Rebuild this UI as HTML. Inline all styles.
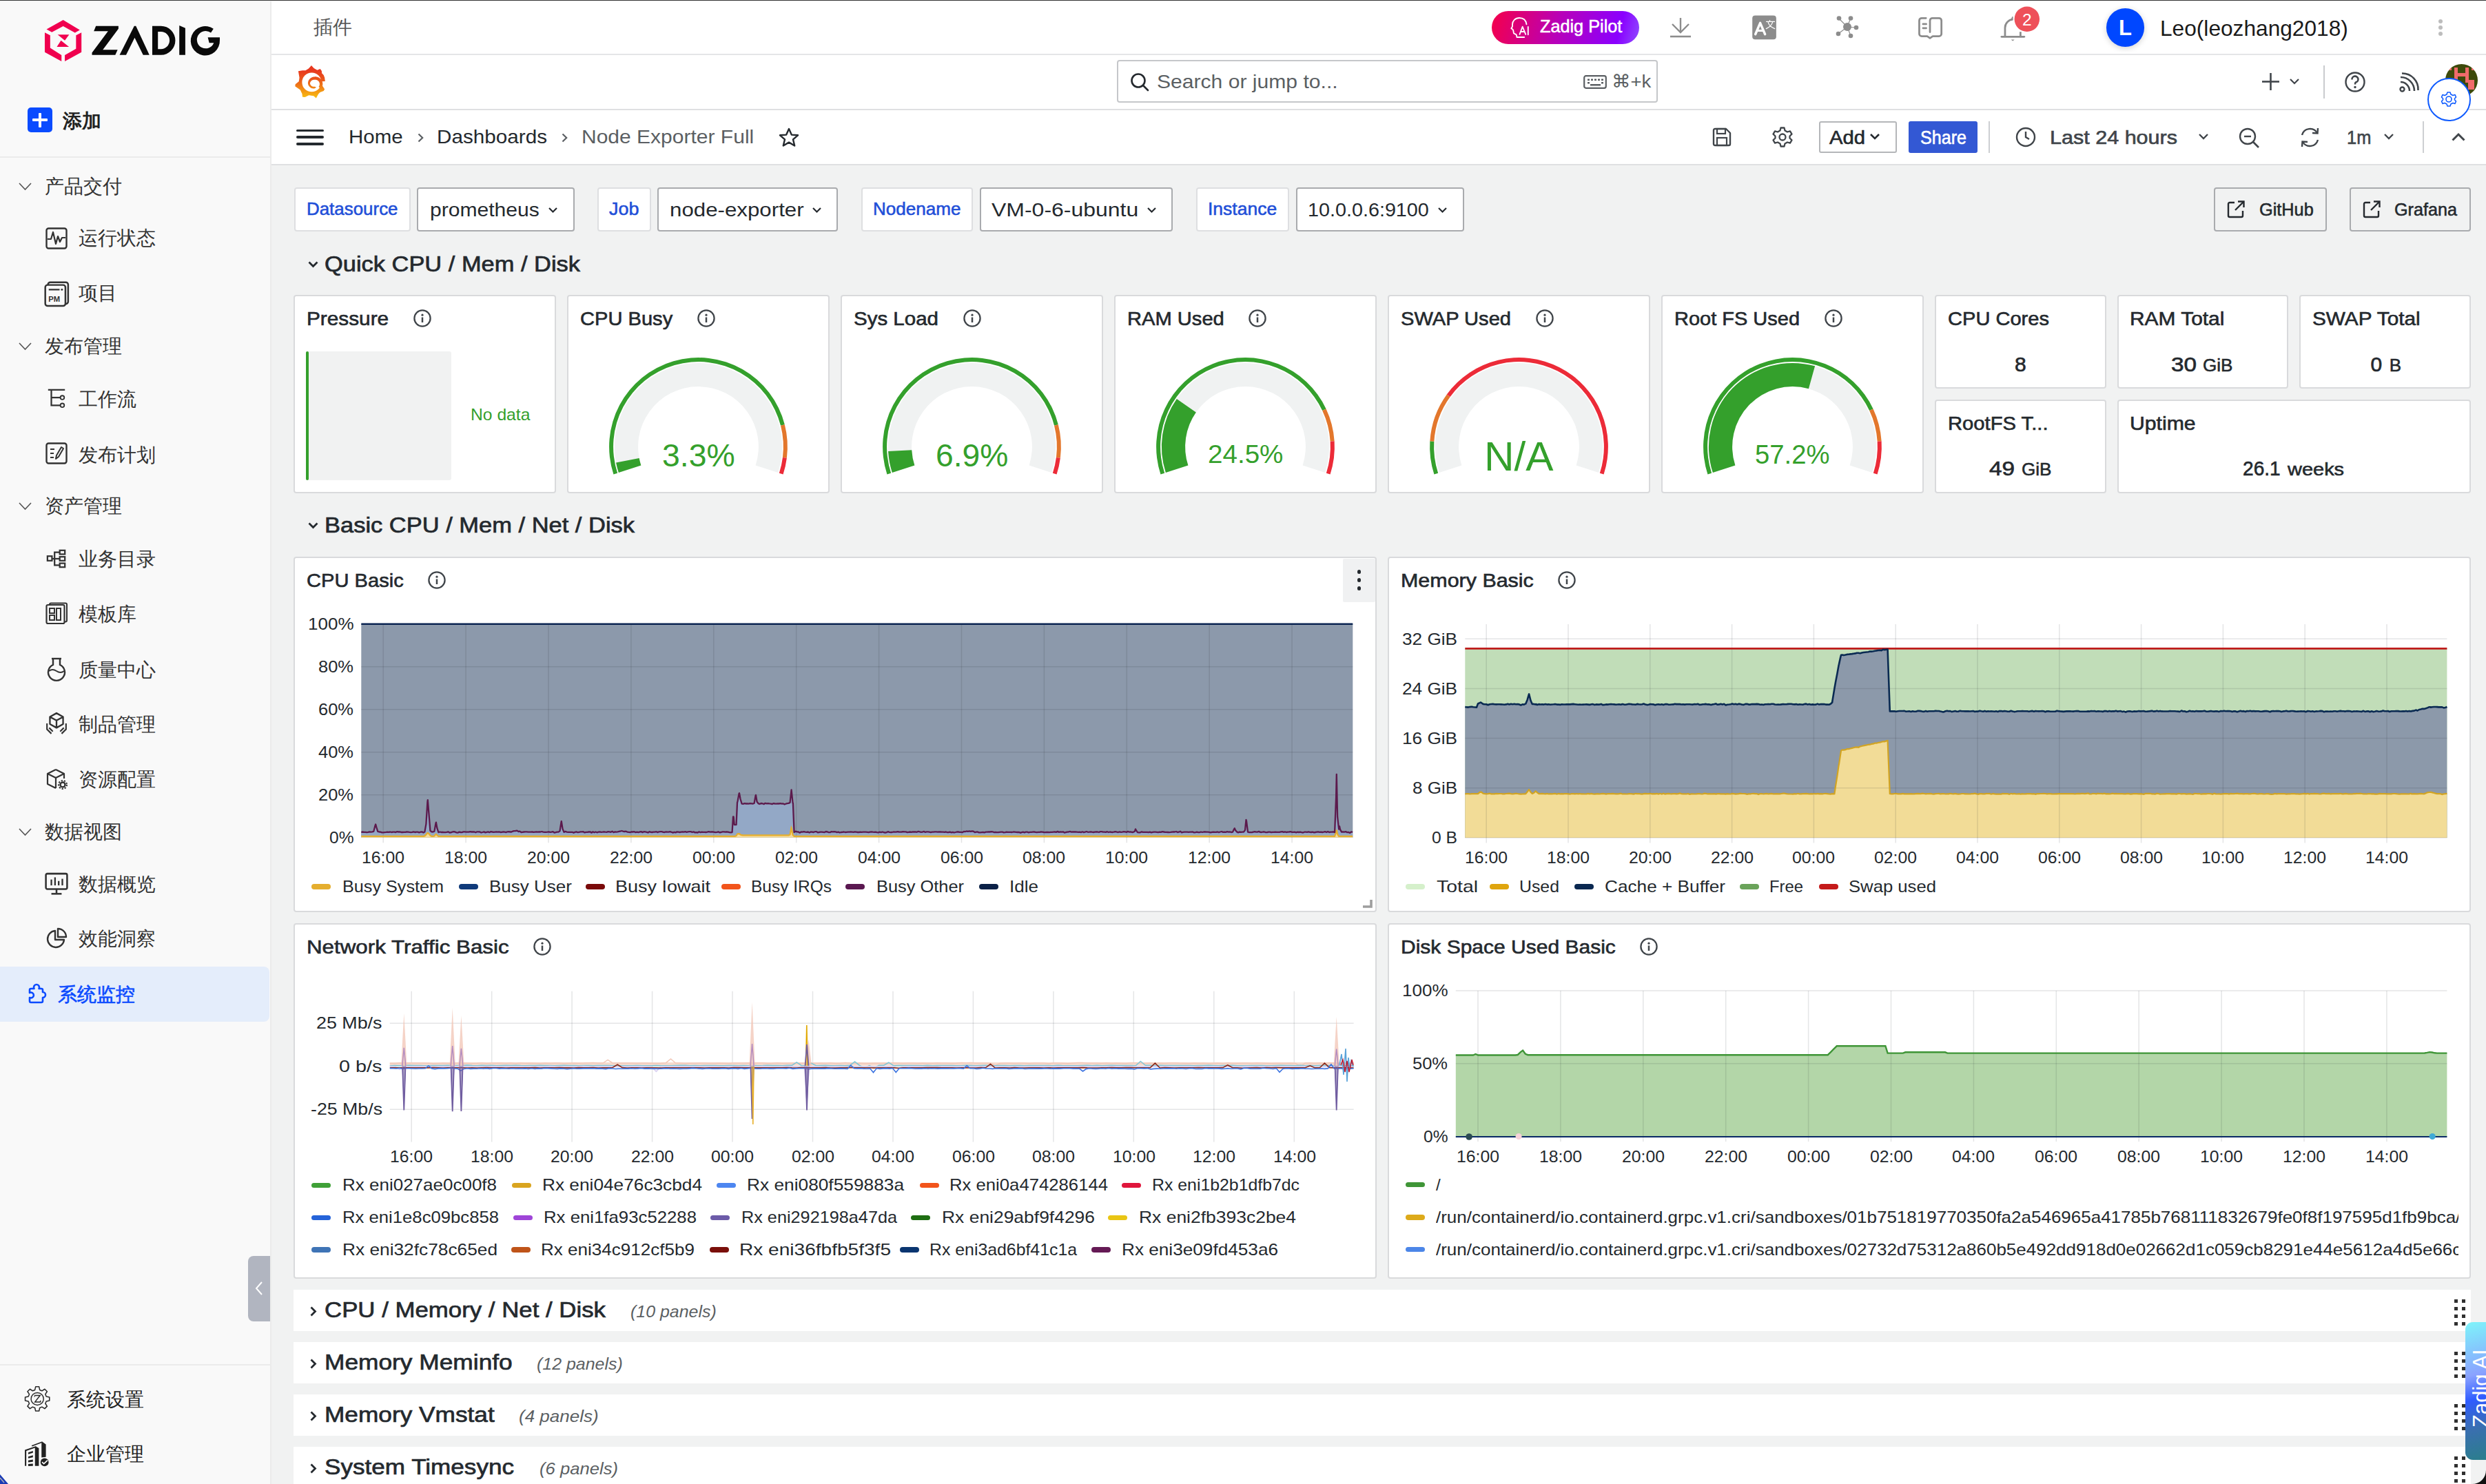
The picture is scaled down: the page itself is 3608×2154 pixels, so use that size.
<!DOCTYPE html><html><head><meta charset="utf-8"><style>
*{margin:0;padding:0;box-sizing:border-box}
html,body{width:3608px;height:2154px;overflow:hidden;background:#F1F2F2;font-family:"Liberation Sans",sans-serif;color:#24292E}
.a{position:absolute}
.t{position:absolute;white-space:nowrap;line-height:1}
svg{overflow:visible}
</style></head><body><div class="a" style="left:0.0px;top:0.0px;width:3608.0px;height:1.0px;background:#3A3A3A;"></div>
<div class="a" style="left:0.0px;top:1.5px;width:392.0px;height:2152.5px;background:#F9F9F9;"></div>
<div class="a" style="left:392.0px;top:1.5px;width:2.0px;height:2152.5px;background:#EBEBEB;"></div>
<div class="a" style="left:394.0px;top:1.5px;width:3214.0px;height:76.5px;background:#FFFFFF;"></div>
<div class="a" style="left:394.0px;top:78.0px;width:3214.0px;height:2.0px;background:#E4E5E7;"></div>
<div class="a" style="left:394.0px;top:80.0px;width:3214.0px;height:78.0px;background:#FFFFFF;"></div>
<div class="a" style="left:394.0px;top:158.0px;width:3214.0px;height:2.0px;background:#DFE0E2;"></div>
<div class="a" style="left:394.0px;top:160.0px;width:3214.0px;height:78.0px;background:#FFFFFF;"></div>
<div class="a" style="left:394.0px;top:238.0px;width:3214.0px;height:2.0px;background:#DFE0E2;"></div>
<svg class="a" style="left:40.0px;top:20.0px;" width="300.0" height="80.0" viewBox="0 0 2486 663">
<g fill="#F0004F">
<polygon points="228,187 428,75 628,195 570,228 428,150 292,222"/>
<polygon points="207,225 272,258 272,410 408,497 408,572 207,462"/>
<polygon points="648,225 583,258 583,420 448,497 448,572 648,462"/>
<polygon points="362,250 500,250 448,322"/>
<polygon points="402,322 498,397 352,397"/>
</g>
<g fill="#0A0A0A">
<polygon points="822,147 1093,147 1093,180 905,432 1083,432 1055,495 775,495 775,468 968,210 797,210"/>
<polygon points="1107,495 1283,147 1303,147 1465,495 1390,495 1288,288 1185,495"/>
<path fill-rule="evenodd" d="M1500,147 H1605 A172,174 0 0 1 1605,495 H1500 Z M1568,215 V425 H1605 A103,105 0 0 0 1605,215 Z"/>
<polygon points="1825,140 1897,172 1897,495 1825,495"/>
<path d="M2236,180 A175,176 0 1 0 2312,318 V283 H2168 L2185,350 H2240 A105,105 0 1 1 2205,228 Z"/>
</g>
</svg>
<div class="a" style="left:39.8px;top:156.2px;width:35.8px;height:35.6px;background:#0A4BFF;border-radius:5px"></div>
<div class="a" style="left:55.7px;top:163.5px;width:4.0px;height:21.0px;background:#FFFFFF;border-radius:1px"></div>
<div class="a" style="left:47.0px;top:172.0px;width:21.5px;height:4.0px;background:#FFFFFF;border-radius:1px"></div>
<div class="t" style="left:90.7px;top:161.8px;font-size:28px;color:#222222;font-weight:bold;">添加</div>
<div class="a" style="left:0.0px;top:227.0px;width:392.0px;height:2.0px;background:#EBEBEB;"></div>
<svg class="a" style="left:27.5px;top:265.5px;" width="17.0" height="9.0" viewBox="0 0 17 9"><polyline points="0,0 8.5,9 17,0" fill="none" stroke="#555" stroke-width="1.6"/></svg>
<div class="t" style="left:65.0px;top:256.8px;font-size:28px;color:#333333;">产品交付</div>
<svg class="a" style="left:27.5px;top:497.7px;" width="17.0" height="9.0" viewBox="0 0 17 9"><polyline points="0,0 8.5,9 17,0" fill="none" stroke="#555" stroke-width="1.6"/></svg>
<div class="t" style="left:65.0px;top:489.0px;font-size:28px;color:#333333;">发布管理</div>
<svg class="a" style="left:27.5px;top:730.0px;" width="17.0" height="9.0" viewBox="0 0 17 9"><polyline points="0,0 8.5,9 17,0" fill="none" stroke="#555" stroke-width="1.6"/></svg>
<div class="t" style="left:65.0px;top:721.3px;font-size:28px;color:#333333;">资产管理</div>
<svg class="a" style="left:27.5px;top:1203.0px;" width="17.0" height="9.0" viewBox="0 0 17 9"><polyline points="0,0 8.5,9 17,0" fill="none" stroke="#555" stroke-width="1.6"/></svg>
<div class="t" style="left:65.0px;top:1194.3px;font-size:28px;color:#333333;">数据视图</div>
<div class="t" style="left:113.8px;top:332.2px;font-size:28px;color:#333333;">运行状态</div>
<div class="t" style="left:113.8px;top:412.3px;font-size:28px;color:#333333;">项目</div>
<div class="t" style="left:113.8px;top:566.3px;font-size:28px;color:#333333;">工作流</div>
<div class="t" style="left:113.8px;top:646.5px;font-size:28px;color:#333333;">发布计划</div>
<div class="t" style="left:113.8px;top:798.1px;font-size:28px;color:#333333;">业务目录</div>
<div class="t" style="left:113.8px;top:877.6px;font-size:28px;color:#333333;">模板库</div>
<div class="t" style="left:113.8px;top:958.5px;font-size:28px;color:#333333;">质量中心</div>
<div class="t" style="left:113.8px;top:1038.0px;font-size:28px;color:#333333;">制品管理</div>
<div class="t" style="left:113.8px;top:1118.2px;font-size:28px;color:#333333;">资源配置</div>
<div class="t" style="left:113.8px;top:1269.8px;font-size:28px;color:#333333;">数据概览</div>
<div class="t" style="left:113.8px;top:1349.3px;font-size:28px;color:#333333;">效能洞察</div>
<svg class="a" style="left:66.0px;top:330.2px;" width="32.0" height="32.0" viewBox="0 0 32 32"><rect x="1.5" y="1.5" width="29" height="29" rx="3" fill="none" stroke="#333333" stroke-width="2.4"/><polyline points="3,17 8,17 11,7 15,24 18,13 21,21 24,15 29,15" fill="none" stroke="#333333" stroke-width="2.2" stroke-linejoin="round"/></svg>
<svg class="a" style="left:64.0px;top:408.2px;" width="36.0" height="36.0" viewBox="0 0 32 32"><rect x="5" y="1.5" width="26" height="28" rx="3" fill="none" stroke="#333333" stroke-width="2.2"/><rect x="1.5" y="5" width="26" height="27" rx="3" fill="#F9F9F9" stroke="#333333" stroke-width="2.2"/><line x1="6" y1="11" x2="20" y2="11" stroke="#333333" stroke-width="2"/><circle cx="23" cy="11" r="1.3" fill="#333333"/><text x="5.5" y="26.5" font-size="10" font-weight="bold" font-family="Liberation Sans" fill="#333333">PM</text></svg>
<svg class="a" style="left:67.0px;top:562.5px;" width="30.0" height="30.0" viewBox="0 0 32 32"><line x1="3" y1="3" x2="29" y2="3" stroke="#333333" stroke-width="2.4"/><polyline points="8,3 8,27 22,27" fill="none" stroke="#333333" stroke-width="2.4"/><line x1="8" y1="15" x2="22" y2="15" stroke="#333333" stroke-width="2.4"/><circle cx="25" cy="15" r="3" fill="none" stroke="#333333" stroke-width="2"/><circle cx="25" cy="27" r="3" fill="none" stroke="#333333" stroke-width="2"/></svg>
<svg class="a" style="left:66.4px;top:642.2px;" width="32.0" height="32.0" viewBox="0 0 32 32"><rect x="1.5" y="1.5" width="29" height="29" rx="3" fill="none" stroke="#333333" stroke-width="2.4"/><line x1="7" y1="10" x2="13" y2="10" stroke="#333333" stroke-width="2"/><line x1="7" y1="16" x2="12" y2="16" stroke="#333333" stroke-width="2"/><line x1="7" y1="22" x2="12" y2="22" stroke="#333333" stroke-width="2"/><path d="M15,24 L16,19 L23,7 L26,9 L19,21 Z" fill="none" stroke="#333333" stroke-width="2" stroke-linejoin="round"/></svg>
<svg class="a" style="left:67.0px;top:796.3px;" width="30.0" height="30.0" viewBox="0 0 32 32"><rect x="2" y="12" width="7" height="7" fill="none" stroke="#333333" stroke-width="2.4"/><rect x="21" y="3" width="8" height="6" fill="none" stroke="#333333" stroke-width="2.4"/><rect x="21" y="13" width="8" height="6" fill="none" stroke="#333333" stroke-width="2.4"/><rect x="21" y="23" width="8" height="6" fill="none" stroke="#333333" stroke-width="2.4"/><polyline points="21,6 13,6 13,26 21,26" fill="none" stroke="#333333" stroke-width="2.4"/><line x1="9" y1="16" x2="21" y2="16" stroke="#333333" stroke-width="2.4"/></svg>
<svg class="a" style="left:66.4px;top:874.3px;" width="32.0" height="32.0" viewBox="0 0 32 32"><rect x="6" y="1.5" width="25" height="27" rx="2" fill="none" stroke="#333333" stroke-width="2"/><rect x="1.5" y="4" width="26" height="27" rx="2" fill="#F9F9F9" stroke="#333333" stroke-width="2.2"/><rect x="6" y="9" width="7" height="7" fill="none" stroke="#333333" stroke-width="2"/><rect x="6" y="19" width="7" height="7" fill="none" stroke="#333333" stroke-width="2"/><rect x="16" y="9" width="6" height="17" fill="none" stroke="#333333" stroke-width="2"/></svg>
<svg class="a" style="left:66.0px;top:954.0px;" width="32.0" height="32.0" viewBox="0 0 32 32"><line x1="9" y1="2" x2="23" y2="2" stroke="#333333" stroke-width="2.4"/><path d="M11,2 V11 A12,12 0 1 0 21,11 V2" fill="none" stroke="#333333" stroke-width="2.4"/><path d="M5,20 Q10,16 16,20 T27,20" fill="none" stroke="#333333" stroke-width="2"/></svg>
<svg class="a" style="left:65.0px;top:1033.0px;" width="34.0" height="34.0" viewBox="0 0 32 32"><path d="M16,2 L25,7 V17 L16,22 L7,17 V7 Z M7,7 L16,12 L25,7 M16,12 V22" fill="none" stroke="#333333" stroke-width="2.2" stroke-linejoin="round"/><path d="M3,16 V24 L9,30 M29,16 V24 L23,30 M6,22 L11,27 M26,22 L21,27" fill="none" stroke="#333333" stroke-width="2"/></svg>
<svg class="a" style="left:66.0px;top:1115.0px;" width="32.0" height="32.0" viewBox="0 0 32 32"><path d="M15,2 L27,8 V15 M15,2 L3,8 V23 L15,29 M3,8 L15,14 L27,8 M15,14 V29" fill="none" stroke="#333333" stroke-width="2.2" stroke-linejoin="round"/><circle cx="25" cy="24" r="3.5" fill="none" stroke="#333333" stroke-width="2.5"/><circle cx="25" cy="24" r="6" fill="none" stroke="#333333" stroke-width="2" stroke-dasharray="2.2 2"/></svg>
<svg class="a" style="left:65.0px;top:1266.0px;" width="34.0" height="34.0" viewBox="0 0 32 32"><rect x="1.5" y="2" width="29" height="21" rx="2" fill="none" stroke="#333333" stroke-width="2.4"/><line x1="16" y1="23" x2="16" y2="29" stroke="#333333" stroke-width="2.4"/><line x1="9" y1="29.5" x2="23" y2="29.5" stroke="#333333" stroke-width="2.4"/><line x1="9" y1="10" x2="9" y2="18" stroke="#333333" stroke-width="2.2"/><line x1="14" y1="7" x2="14" y2="18" stroke="#333333" stroke-width="2.2"/><line x1="19" y1="12" x2="19" y2="18" stroke="#333333" stroke-width="2.2"/><line x1="24" y1="9" x2="24" y2="18" stroke="#333333" stroke-width="2.2"/></svg>
<svg class="a" style="left:66.0px;top:1346.0px;" width="32.0" height="32.0" viewBox="0 0 32 32"><path d="M14,5 A12,12 0 1 0 27,18 H14 Z" fill="none" stroke="#333333" stroke-width="2.4" stroke-linejoin="round"/><path d="M18,2 A12,12 0 0 1 30,14 H18 Z" fill="none" stroke="#333333" stroke-width="2.4" stroke-linejoin="round"/></svg>
<div class="a" style="left:0.0px;top:1403.0px;width:391.0px;height:79.5px;background:#E4EDFB;border-radius:0 8px 8px 0"></div>
<svg class="a" style="left:38.0px;top:1427.0px;" width="32.0" height="32.0" viewBox="0 0 32 32"><path d="M11.5,8 A4,4 0 1 1 18.5,8 H22 A2,2 0 0 1 24,10 V13 A4,4 0 1 1 24,21 V26 A2,2 0 0 1 22,28 H7 A2,2 0 0 1 5,26 V21 A4,4 0 1 0 5,14 V10 A2,2 0 0 1 7,8 Z" fill="none" stroke="#0B4BFF" stroke-width="2.6" stroke-linejoin="round"/></svg>
<div class="t" style="left:84.2px;top:1430.3px;font-size:28px;color:#0B4BFF;-webkit-text-stroke:0.62px #0B4BFF;">系统监控</div>
<div class="a" style="left:360.0px;top:1823.0px;width:32.0px;height:95.0px;background:#B1B5C0;border-radius:8px 0 0 8px"></div>
<svg class="a" style="left:370.0px;top:1860.0px;" width="12.0" height="20.0" viewBox="0 0 12 20"><polyline points="10,1 2,10 10,19" fill="none" stroke="#FFFFFF" stroke-width="2"/></svg>
<div class="a" style="left:0.0px;top:1980.0px;width:392.0px;height:2.0px;background:#EBEBEB;"></div>
<svg class="a" style="left:30.0px;top:2010.0px;" width="50.0" height="44.0" viewBox="0 0 1686 1484"><polygon points="933,251 899,96 731,96 697,251 588,296 454,211 336,329 421,462 376,572 221,606 221,774 376,808 421,918 336,1051 454,1169 587,1084 697,1129 731,1284 899,1284 933,1129 1042,1084 1176,1169 1294,1051 1209,918 1254,808 1409,774 1409,606 1254,572 1209,462 1294,329 1176,211 1042,296" fill="none" stroke="#2A2A2A" stroke-width="52" stroke-linejoin="round"/><circle cx="815" cy="690" r="305" fill="none" stroke="#2A2A2A" stroke-width="48"/><path d="M680,520 H950 L700,840 H960 L975,770" fill="none" stroke="#2A2A2A" stroke-width="50"/><line x1="680" y1="520" x2="680" y2="590" stroke="#2A2A2A" stroke-width="40"/></svg>
<div class="t" style="left:97.0px;top:2018.3px;font-size:28px;color:#222222;">系统设置</div>
<svg class="a" style="left:30.0px;top:2088.0px;" width="50.0" height="44.0" viewBox="0 0 1686 1484"><g fill="#222"><polyline points="240,1340 240,580 760,400" fill="none" stroke="#222" stroke-width="70"/><polygon points="700,1340 700,450 760,395 890,470 890,1340"/><line x1="545" y1="365" x2="1065" y2="170" stroke="#222" stroke-width="55"/><polygon points="1020,225 1065,160 1235,290 1235,900 1020,930"/><polygon points="370,680 600,605 600,700 370,770"/><polygon points="370,885 600,820 600,915 370,970"/><polygon points="370,1070 600,1030 600,1135 370,1165"/><polygon points="370,1250 600,1235 600,1340 370,1345"/><circle cx="1170" cy="1160" r="225" fill="#F9F9F9"/><circle cx="1170" cy="1160" r="200"/><polyline points="1045,1150 1135,1235 1315,1070" fill="none" stroke="#fff" stroke-width="55"/></g></svg>
<div class="t" style="left:97.0px;top:2097.3px;font-size:28px;color:#222222;">企业管理</div>
<div class="t" style="left:455.2px;top:26.3px;font-size:28px;color:#555555;">插件</div>
<div class="a" style="left:2165px;top:15.6px;width:214px;height:48px;border-radius:24px;background:linear-gradient(105deg,#F5004A 0%,#B800B8 45%,#8A00FF 85%,#8F4DFF 100%)"></div>
<svg class="a" style="left:2185.0px;top:18.0px;" width="40.0" height="40.0" viewBox="0 0 1484 1484"><g fill="none" stroke="#fff" stroke-width="70" stroke-linejoin="round" stroke-linecap="round"><path d="M1130,640 C1100,420 950,295 745,295 C520,295 370,460 370,650 C370,700 385,720 360,780 L310,860 L390,915 C430,960 430,1050 440,1110 C470,1160 540,1160 580,1200 C600,1240 600,1300 610,1335 H1010"/><polyline points="760,1180 915,770 1085,1180"/><line x1="840" y1="1040" x2="1000" y2="1040"/><line x1="1215" y1="775" x2="1215" y2="1195"/></g></svg>
<div class="t" style="left:2234.7px;top:26.3px;font-size:25px;color:#FFFFFF;-webkit-text-stroke:0.55px #FFFFFF;transform:scaleX(1.0101);transform-origin:0 0;">Zadig Pilot</div>
<svg class="a" style="left:2424.0px;top:25.0px;" width="30.0" height="30.0" viewBox="0 0 30 30"><line x1="15" y1="1" x2="15" y2="21" stroke="#8C8C8C" stroke-width="2.4"/><polyline points="3,10 15,22 27,10" fill="none" stroke="#8C8C8C" stroke-width="2.4"/><line x1="0" y1="28" x2="30" y2="28" stroke="#8C8C8C" stroke-width="2.6"/></svg>
<svg class="a" style="left:2535.0px;top:15.0px;" width="170.0" height="50.0" viewBox="0 0 2486 731"><rect x="120" y="108" width="507" height="510" rx="60" fill="#8C8C8C"/><g stroke="#fff" fill="none" stroke-linecap="round" stroke-linejoin="round"><polyline points="185,508 287,268 390,508" stroke-width="50"/><line x1="240" y1="432" x2="335" y2="432" stroke-width="42"/><line x1="490" y1="212" x2="490" y2="238" stroke-width="18"/><line x1="418" y1="240" x2="592" y2="240" stroke-width="18"/><path d="M455,250 C470,320 520,360 595,390 M550,250 C530,320 480,360 415,390" stroke-width="18"/></g></svg>
<svg class="a" style="left:2664.0px;top:22.0px;" width="34.0" height="34.0" viewBox="0 0 34 34"><g stroke="#8C8C8C" stroke-width="1.2"><line x1="17" y1="17" x2="5" y2="5"/><line x1="17" y1="17" x2="22" y2="4"/><line x1="17" y1="17" x2="29" y2="18"/><line x1="17" y1="17" x2="4" y2="27"/><line x1="17" y1="17" x2="22" y2="30"/></g><g fill="#8C8C8C"><circle cx="17" cy="17" r="6"/><circle cx="5" cy="4.5" r="3.3"/><circle cx="22" cy="4.5" r="3.3"/><circle cx="30" cy="18" r="3.3"/><circle cx="4" cy="27" r="3.3"/><circle cx="22" cy="30" r="3.3"/></g></svg>
<svg class="a" style="left:2780.0px;top:10.0px;" width="180.0" height="60.0" viewBox="0 0 2486 829"><g fill="none" stroke="#8C8C8C" stroke-width="38" stroke-linecap="round" stroke-linejoin="round"><path d="M210,225 H125 A50,50 0 0 0 75,275 V540 A50,50 0 0 0 125,590 H235 L290,628 L345,590 H470 A50,50 0 0 0 520,540 V275 A50,50 0 0 0 470,225 H340 A50,50 0 0 0 290,275 V505"/><line x1="150" y1="345" x2="215" y2="345"/><line x1="150" y1="425" x2="215" y2="425"/><path d="M1795,590 V420 A170,170 0 0 1 1950,250" stroke-linecap="butt"/><line x1="2105" y1="500" x2="2105" y2="590" stroke-linecap="butt"/><line x1="1725" y1="598" x2="2180" y2="598"/></g><polygon points="1940,195 1955,195 1955,265 1905,265" fill="#8C8C8C"/><polygon points="1915,655 1985,655 1950,685" fill="#8C8C8C"/><circle cx="2235" cy="245" r="252" fill="#EE5059"/><text x="2235" y="375" text-anchor="middle" font-size="340" font-family="Liberation Sans" fill="#fff">2</text></svg>
<div class="a" style="left:3056.8px;top:12.3px;width:55.4px;height:55.4px;border-radius:50%;background:#0047FF;box-shadow:0 2px 8px rgba(0,0,0,0.18)"></div>
<div class="t" style="left:3075.0px;top:25.3px;font-size:31px;color:#FFFFFF;font-weight:bold;">L</div>
<div class="t" style="left:3134.7px;top:25.0px;font-size:32px;color:#1A1A1A;transform:scaleX(0.9893);transform-origin:0 0;">Leo(leozhang2018)</div>
<div class="a" style="left:3538.8px;top:27.6px;width:6px;height:6px;border-radius:50%;background:#BDBDBD"></div>
<div class="a" style="left:3538.8px;top:36.8px;width:6px;height:6px;border-radius:50%;background:#BDBDBD"></div>
<div class="a" style="left:3538.8px;top:46.0px;width:6px;height:6px;border-radius:50%;background:#BDBDBD"></div>
<svg class="a" style="left:420.0px;top:90.0px;" width="60.0" height="60.0" viewBox="0 0 1484 1484"><defs><linearGradient id="gl" gradientUnits="userSpaceOnUse" x1="0" y1="125" x2="0" y2="1300"><stop offset="0.15" stop-color="#E8391F"/><stop offset="0.45" stop-color="#EA5A1A"/><stop offset="1" stop-color="#F9C010"/></linearGradient></defs><polygon fill="url(#gl)" points="320,330 470,300 580,305 690,235 790,125 880,225 1000,290 1105,250 1160,320 1165,400 1230,470 1265,560 1282,690 1150,700 1180,850 1265,975 1230,1040 1100,1090 1040,1150 960,1300 870,1220 700,1195 560,1260 470,1255 455,1140 390,1000 205,870 215,800 340,700 360,560"/><circle cx="800" cy="727" r="345" fill="#fff"/><polygon fill="url(#gl)" points="1135,963 1152,937 1167,909 1179,881 1188,851 1193,821 1195,790 1194,760 1188,730 1179,702 1167,675 1153,649 1136,626 1117,604 1096,586 1074,569 1050,555 1025,544 999,536 974,531 948,528 922,528 897,530 872,532 847,537 823,544 800,554 778,566 757,581 738,597 721,616 706,636 693,657 682,680 674,704 669,728 666,753 667,778 673,803 681,826 692,847 705,867 720,885 737,902 754,916 773,927 792,937 812,944 833,949 853,952 873,952 892,950 911,945 928,936 944,925 957,913 952,899 936,896 922,891 909,884 897,884 885,886 872,887 858,886 845,883 831,879 818,874 805,867 793,858 781,847 770,836 761,822 753,808 746,792 741,776 742,759 746,742 752,726 760,711 769,698 779,685 791,674 803,664 816,656 830,649 844,644 858,641 872,639 886,638 900,639 914,638 929,637 943,636 958,638 973,641 988,647 1003,653 1017,662 1030,672 1043,684 1054,697 1064,712 1072,728 1079,746 1084,764 1086,783 1085,802 1082,821 1077,839 1070,858 1061,875 1051,892"/></svg>
<div class="a" style="left:1621px;top:87px;width:785px;height:62px;border:2px solid #C5C7CA;border-radius:4px;background:#fff"></div>
<svg class="a" style="left:1639.6px;top:104.5px;" width="28.0" height="28.0" viewBox="0 0 28 28"><circle cx="12" cy="12" r="9.5" fill="none" stroke="#24292E" stroke-width="2.6"/><line x1="19" y1="19" x2="26" y2="26" stroke="#24292E" stroke-width="2.6" stroke-linecap="round"/></svg>
<div class="t" style="left:1679.4px;top:104.8px;font-size:28px;color:#5B5F63;transform:scaleX(1.0749);transform-origin:0 0;">Search or jump to...</div>
<svg class="a" style="left:2298.0px;top:109.0px;" width="34.0" height="20.0" viewBox="0 0 34 20"><rect x="1.2" y="1.2" width="31.6" height="17.6" rx="2.5" fill="none" stroke="#5B5F63" stroke-width="2.2"/><g fill="#5B5F63"><rect x="6" y="5.5" width="3" height="2.5"/><rect x="11" y="5.5" width="3" height="2.5"/><rect x="16" y="5.5" width="3" height="2.5"/><rect x="21" y="5.5" width="3" height="2.5"/><rect x="26" y="5.5" width="3" height="2.5"/><rect x="6" y="10" width="3" height="2.5"/><rect x="26" y="10" width="3" height="2.5"/><rect x="10" y="13" width="15" height="2.5"/></g></svg>
<div class="t" style="left:2339.0px;top:105.0px;font-size:26px;color:#5B5F63;transform:scaleX(1.0590);transform-origin:0 0;">⌘+k</div>
<svg class="a" style="left:3283.0px;top:106.0px;" width="25.0" height="25.0" viewBox="0 0 25 25"><line x1="12.5" y1="0" x2="12.5" y2="25" stroke="#40454A" stroke-width="2.6"/><line x1="0" y1="12.5" x2="25" y2="12.5" stroke="#40454A" stroke-width="2.6"/></svg>
<svg class="a" style="left:3323.0px;top:114.0px;" width="14.0" height="8.0" viewBox="0 0 14 8"><polyline points="1,1 7,7 13,1" fill="none" stroke="#40454A" stroke-width="2.2"/></svg>
<div class="a" style="left:3371.8px;top:95.0px;width:2.0px;height:48.0px;background:#C9CBCE;"></div>
<svg class="a" style="left:3403.0px;top:104.0px;" width="30.0" height="30.0" viewBox="0 0 30 30"><circle cx="15" cy="15" r="13.5" fill="none" stroke="#40454A" stroke-width="2.4"/><path d="M10.5,11.5 A4.5,4.5 0 1 1 16,15.5 C15,16 15,17 15,18.5" fill="none" stroke="#40454A" stroke-width="2.6"/><circle cx="15" cy="22.5" r="1.7" fill="#40454A"/></svg>
<svg class="a" style="left:3482.0px;top:106.0px;" width="28.0" height="28.0" viewBox="0 0 28 28"><circle cx="4.5" cy="23.5" r="3" fill="none" stroke="#40454A" stroke-width="2.4"/><path d="M2,13 A13,13 0 0 1 15,26 M2,6 A20,20 0 0 1 22,26 M4,0.5 A23,23 0 0 1 27.5,25" fill="none" stroke="#40454A" stroke-width="2.6"/></svg>
<svg class="a" style="left:3549.0px;top:93.0px;" width="47.0" height="47.0" viewBox="0 0 47 47"><defs><clipPath id="av"><circle cx="23.5" cy="23.5" r="23.5"/></clipPath></defs><g clip-path="url(#av)"><rect width="47" height="47" fill="#3D4A0B"/><g fill="#F06B6B"><rect x="13" y="5" width="5" height="22"/><rect x="29" y="5" width="5" height="22"/><rect x="13" y="13" width="21" height="5"/><rect x="3" y="3" width="6" height="6"/><rect x="38" y="3" width="6" height="6"/><rect x="33" y="23" width="9" height="14"/></g></g></svg>
<div class="a" style="left:3522.5px;top:112.5px;width:63px;height:63px;border-radius:50%;border:2.5px solid #0F5BFF;background:#fff"></div>
<svg class="a" style="left:3543.0px;top:133.0px;" width="22.0" height="22.0" viewBox="0 0 22 22"><path d="M9,1 H13 L14,4 L17,5.5 L20,4.5 L21.5,8 L19.5,10 V12 L21.5,14 L20,17.5 L17,16.5 L14,18 L13,21 H9 L8,18 L5,16.5 L2,17.5 L0.5,14 L2.5,12 V10 L0.5,8 L2,4.5 L5,5.5 L8,4 Z" fill="none" stroke="#0F5BFF" stroke-width="1.6" stroke-linejoin="round"/><circle cx="11" cy="11" r="4" fill="none" stroke="#0F5BFF" stroke-width="1.6"/></svg>
<div class="a" style="left:430.2px;top:187.5px;width:39.8px;height:3.6px;background:#24292E;border-radius:2px"></div>
<div class="a" style="left:430.2px;top:197.2px;width:39.8px;height:3.6px;background:#24292E;border-radius:2px"></div>
<div class="a" style="left:430.2px;top:207.4px;width:39.8px;height:3.6px;background:#24292E;border-radius:2px"></div>
<div class="t" style="left:506.0px;top:185.0px;font-size:28px;color:#24292E;transform:scaleX(1.0538);transform-origin:0 0;">Home</div>
<svg class="a" style="left:606.5px;top:194.0px;" width="7.0" height="12.0" viewBox="0 0 7 12"><polyline points="0.5,0.5 6.2,6.0 0.5,11.5" fill="none" stroke="#5B5F63" stroke-width="2.2"/></svg>
<div class="t" style="left:634.4px;top:185.0px;font-size:28px;color:#24292E;transform:scaleX(1.0598);transform-origin:0 0;">Dashboards</div>
<svg class="a" style="left:816.0px;top:194.0px;" width="7.0" height="12.0" viewBox="0 0 7 12"><polyline points="0.5,0.5 6.2,6.0 0.5,11.5" fill="none" stroke="#5B5F63" stroke-width="2.2"/></svg>
<div class="t" style="left:844.1px;top:185.0px;font-size:28px;color:#5B5F63;transform:scaleX(1.0719);transform-origin:0 0;">Node Exporter Full</div>
<svg class="a" style="left:1130.0px;top:185.0px;" width="30.0" height="29.0" viewBox="0 0 30 29"><polygon points="15,2 18.8,10.6 28,11.3 21,17.4 23.2,26.5 15,21.6 6.8,26.5 9,17.4 2,11.3 11.2,10.6" fill="none" stroke="#24292E" stroke-width="2.4" stroke-linejoin="round"/></svg>
<svg class="a" style="left:2485.0px;top:185.0px;" width="28.0" height="28.0" viewBox="0 0 28 28"><path d="M2,4 A2,2 0 0 1 4,2 H20 L26,8 V24 A2,2 0 0 1 24,26 H4 A2,2 0 0 1 2,24 Z" fill="none" stroke="#40454A" stroke-width="2.4" stroke-linejoin="round"/><rect x="7" y="2" width="12" height="7" fill="none" stroke="#40454A" stroke-width="2.2"/><rect x="7" y="15" width="14" height="11" fill="none" stroke="#40454A" stroke-width="2.2"/></svg>
<svg class="a" style="left:2572.0px;top:184.0px;" width="30.0" height="30.0" viewBox="0 0 30 30"><path d="M12.5,1.5 h5 l1,4 3.5,2 4-1.2 2.5,4.3 -3,2.9 v3 l3,2.9 -2.5,4.3 -4-1.2 -3.5,2 -1,4 h-5 l-1-4 -3.5-2 -4,1.2 -2.5-4.3 3-2.9 v-3 l-3-2.9 2.5-4.3 4,1.2 3.5-2 Z" fill="none" stroke="#40454A" stroke-width="2.3" stroke-linejoin="round"/><circle cx="15" cy="15" r="4.5" fill="none" stroke="#40454A" stroke-width="2.3"/></svg>
<div class="a" style="left:2639.7px;top:175.5px;width:113.7px;height:46.5px;border:2px solid #B4B6B9;border-radius:3px"></div>
<div class="t" style="left:2655.0px;top:186.3px;font-size:28px;color:#24292E;-webkit-text-stroke:0.62px #24292E;transform:scaleX(1.0438);transform-origin:0 0;">Add</div>
<svg class="a" style="left:2714.0px;top:194.0px;" width="14.0" height="8.0" viewBox="0 0 14 8"><polyline points="1,1 7,7 13,1" fill="none" stroke="#24292E" stroke-width="2.6"/></svg>
<div class="a" style="left:2770.3px;top:175.5px;width:99.7px;height:46.5px;background:#3358D4;border-radius:3px"></div>
<div class="t" style="left:2786.5px;top:186.3px;font-size:28px;color:#FFFFFF;-webkit-text-stroke:0.62px #FFFFFF;transform:scaleX(0.8968);transform-origin:0 0;">Share</div>
<div class="a" style="left:2886.4px;top:175.5px;width:2.0px;height:46.5px;background:#CDCFD2;"></div>
<svg class="a" style="left:2924.5px;top:184.0px;" width="30.0" height="30.0" viewBox="0 0 30 30"><circle cx="15" cy="15" r="13" fill="none" stroke="#40454A" stroke-width="2.4"/><polyline points="15,7 15,15 20,18" fill="none" stroke="#40454A" stroke-width="2.4"/></svg>
<div class="t" style="left:2974.8px;top:185.8px;font-size:28px;color:#40454A;-webkit-text-stroke:0.62px #40454A;transform:scaleX(1.0905);transform-origin:0 0;">Last 24 hours</div>
<svg class="a" style="left:3190.5px;top:194.0px;" width="14.0" height="8.0" viewBox="0 0 14 8"><polyline points="1,1 7,7 13,1" fill="none" stroke="#40454A" stroke-width="2.4"/></svg>
<svg class="a" style="left:3249.0px;top:185.0px;" width="31.0" height="31.0" viewBox="0 0 31 31"><circle cx="13" cy="13" r="11" fill="none" stroke="#40454A" stroke-width="2.4"/><line x1="8" y1="13" x2="18" y2="13" stroke="#40454A" stroke-width="2.4"/><line x1="21" y1="21" x2="29" y2="29" stroke="#40454A" stroke-width="2.6"/></svg>
<svg class="a" style="left:3337.0px;top:184.0px;" width="31.0" height="31.0" viewBox="0 0 31 31"><path d="M26,9 A12,12 0 0 0 4,12 M5,22 A12,12 0 0 0 27,19" fill="none" stroke="#40454A" stroke-width="2.4"/><polyline points="27,2 26.5,9.5 19,9" fill="none" stroke="#40454A" stroke-width="2.4"/><polyline points="4,29 4.5,21.5 12,22" fill="none" stroke="#40454A" stroke-width="2.4"/></svg>
<div class="t" style="left:3405.7px;top:185.8px;font-size:28px;color:#40454A;-webkit-text-stroke:0.62px #40454A;transform:scaleX(0.9076);transform-origin:0 0;">1m</div>
<svg class="a" style="left:3460.0px;top:194.0px;" width="14.0" height="8.0" viewBox="0 0 14 8"><polyline points="1,1 7,7 13,1" fill="none" stroke="#40454A" stroke-width="2.4"/></svg>
<div class="a" style="left:3516.0px;top:175.5px;width:2.0px;height:46.5px;background:#CDCFD2;"></div>
<svg class="a" style="left:3558.0px;top:193.0px;" width="20.0" height="12.0" viewBox="0 0 20 12"><polyline points="1.5,10.5 10,2 18.5,10.5" fill="none" stroke="#40454A" stroke-width="3"/></svg>
<div class="a" style="left:426.8px;top:272px;width:169.7px;height:64.0px;border:2px solid #DEDFE1;border-radius:4px;background:#fff"></div>
<div class="t" style="left:445.4px;top:291.3px;font-size:25px;color:#1F4FD8;-webkit-text-stroke:0.55px #1F4FD8;transform:scaleX(1.0365);transform-origin:0 0;">Datasource</div>
<div class="a" style="left:605.3px;top:272px;width:228.3px;height:64.0px;border:2px solid #A9ABAE;border-radius:4px;background:#fff"></div>
<div class="t" style="left:623.6px;top:290.6px;font-size:28px;color:#24292E;transform:scaleX(1.0741);transform-origin:0 0;">prometheus</div>
<svg class="a" style="left:795.5px;top:300.5px;" width="13.0" height="7.5" viewBox="0 0 13 7.5"><polyline points="1,1 6.5,6.5 12,1" fill="none" stroke="#24292E" stroke-width="2.2"/></svg>
<div class="a" style="left:866.5px;top:272px;width:78.5px;height:64.0px;border:2px solid #DEDFE1;border-radius:4px;background:#fff"></div>
<div class="t" style="left:884.0px;top:291.3px;font-size:25px;color:#1F4FD8;-webkit-text-stroke:0.55px #1F4FD8;transform:scaleX(1.0768);transform-origin:0 0;">Job</div>
<div class="a" style="left:954px;top:272px;width:262.0px;height:64.0px;border:2px solid #A9ABAE;border-radius:4px;background:#fff"></div>
<div class="t" style="left:972.2px;top:290.6px;font-size:28px;color:#24292E;transform:scaleX(1.1164);transform-origin:0 0;">node-exporter</div>
<svg class="a" style="left:1179.0px;top:300.5px;" width="13.0" height="7.5" viewBox="0 0 13 7.5"><polyline points="1,1 6.5,6.5 12,1" fill="none" stroke="#24292E" stroke-width="2.2"/></svg>
<div class="a" style="left:1250px;top:272px;width:162.0px;height:64.0px;border:2px solid #DEDFE1;border-radius:4px;background:#fff"></div>
<div class="t" style="left:1267.2px;top:291.3px;font-size:25px;color:#1F4FD8;-webkit-text-stroke:0.55px #1F4FD8;transform:scaleX(1.0426);transform-origin:0 0;">Nodename</div>
<div class="a" style="left:1421.7px;top:272px;width:280.8px;height:64.0px;border:2px solid #A9ABAE;border-radius:4px;background:#fff"></div>
<div class="t" style="left:1439.0px;top:290.6px;font-size:28px;color:#24292E;transform:scaleX(1.1417);transform-origin:0 0;">VM-0-6-ubuntu</div>
<svg class="a" style="left:1665.0px;top:300.5px;" width="13.0" height="7.5" viewBox="0 0 13 7.5"><polyline points="1,1 6.5,6.5 12,1" fill="none" stroke="#24292E" stroke-width="2.2"/></svg>
<div class="a" style="left:1735.9px;top:272px;width:135.1px;height:64.0px;border:2px solid #DEDFE1;border-radius:4px;background:#fff"></div>
<div class="t" style="left:1753.4px;top:291.3px;font-size:25px;color:#1F4FD8;-webkit-text-stroke:0.55px #1F4FD8;transform:scaleX(1.0593);transform-origin:0 0;">Instance</div>
<div class="a" style="left:1880.7px;top:272px;width:244.6px;height:64.0px;border:2px solid #A9ABAE;border-radius:4px;background:#fff"></div>
<div class="t" style="left:1898.0px;top:290.6px;font-size:28px;color:#24292E;transform:scaleX(1.0266);transform-origin:0 0;">10.0.0.6:9100</div>
<svg class="a" style="left:2087.4px;top:300.5px;" width="13.0" height="7.5" viewBox="0 0 13 7.5"><polyline points="1,1 6.5,6.5 12,1" fill="none" stroke="#24292E" stroke-width="2.2"/></svg>
<div class="a" style="left:3212.5px;top:272px;width:164.2px;height:64px;border:2px solid #A9ABAE;border-radius:4px"></div>
<svg class="a" style="left:3232.0px;top:290.0px;" width="27.0" height="27.0" viewBox="0 0 27 27"><path d="M11,4 H4 A2,2 0 0 0 2,6 V23 A2,2 0 0 0 4,25 H21 A2,2 0 0 0 23,23 V16" fill="none" stroke="#24292E" stroke-width="2.4"/><line x1="12" y1="15" x2="24" y2="3" stroke="#24292E" stroke-width="2.4"/><polyline points="16,2.5 24.5,2.5 24.5,11" fill="none" stroke="#24292E" stroke-width="2.4"/></svg>
<div class="t" style="left:3278.5px;top:290.9px;font-size:26px;color:#24292E;-webkit-text-stroke:0.57px #24292E;transform:scaleX(0.9726);transform-origin:0 0;">GitHub</div>
<div class="a" style="left:3409.7px;top:272px;width:175.9px;height:64px;border:2px solid #A9ABAE;border-radius:4px"></div>
<svg class="a" style="left:3429.0px;top:290.0px;" width="27.0" height="27.0" viewBox="0 0 27 27"><path d="M11,4 H4 A2,2 0 0 0 2,6 V23 A2,2 0 0 0 4,25 H21 A2,2 0 0 0 23,23 V16" fill="none" stroke="#24292E" stroke-width="2.4"/><line x1="12" y1="15" x2="24" y2="3" stroke="#24292E" stroke-width="2.4"/><polyline points="16,2.5 24.5,2.5 24.5,11" fill="none" stroke="#24292E" stroke-width="2.4"/></svg>
<div class="t" style="left:3475.3px;top:290.9px;font-size:26px;color:#24292E;-webkit-text-stroke:0.57px #24292E;transform:scaleX(0.9677);transform-origin:0 0;">Grafana</div>
<svg class="a" style="left:447.0px;top:378.6px;" width="15.0" height="9.0" viewBox="0 0 15 9"><polyline points="1.5,1.5 7.5,7.5 13.5,1.5" fill="none" stroke="#24292E" stroke-width="2.8"/></svg>
<div class="t" style="left:470.5px;top:366.5px;font-size:32px;color:#24292E;-webkit-text-stroke:0.70px #24292E;transform:scaleX(1.0756);transform-origin:0 0;">Quick CPU / Mem / Disk</div>
<svg class="a" style="left:447.0px;top:757.9px;" width="15.0" height="9.0" viewBox="0 0 15 9"><polyline points="1.5,1.5 7.5,7.5 13.5,1.5" fill="none" stroke="#24292E" stroke-width="2.8"/></svg>
<div class="t" style="left:470.5px;top:745.8px;font-size:32px;color:#24292E;-webkit-text-stroke:0.70px #24292E;transform:scaleX(1.0770);transform-origin:0 0;">Basic CPU / Mem / Net / Disk</div>
<div class="a" style="left:426.0px;top:1872.0px;width:3160.0px;height:60.0px;background:#FFFFFF;"></div>
<svg class="a" style="left:449.5px;top:1896.0px;" width="9.0" height="15.0" viewBox="0 0 9 15"><polyline points="1.5,1.5 7.5,7.5 1.5,13.5" fill="none" stroke="#24292E" stroke-width="2.8"/></svg>
<div class="t" style="left:470.8px;top:1885.1px;font-size:32px;color:#24292E;-webkit-text-stroke:0.70px #24292E;transform:scaleX(1.0876);transform-origin:0 0;">CPU / Memory / Net / Disk</div>
<div class="t" style="left:915.3px;top:1891.9px;font-size:24px;color:#5B5F63;font-style:italic;transform:scaleX(1.0386);transform-origin:0 0;">(10 panels)</div>
<div class="a" style="left:3562.0px;top:1885.7px;width:5.2px;height:5.2px;background:#303030;"></div>
<div class="a" style="left:3572.5px;top:1885.7px;width:5.2px;height:5.2px;background:#303030;"></div>
<div class="a" style="left:3562.0px;top:1896.7px;width:5.2px;height:5.2px;background:#303030;"></div>
<div class="a" style="left:3572.5px;top:1896.7px;width:5.2px;height:5.2px;background:#303030;"></div>
<div class="a" style="left:3562.0px;top:1907.7px;width:5.2px;height:5.2px;background:#303030;"></div>
<div class="a" style="left:3572.5px;top:1907.7px;width:5.2px;height:5.2px;background:#303030;"></div>
<div class="a" style="left:3562.0px;top:1918.7px;width:5.2px;height:5.2px;background:#303030;"></div>
<div class="a" style="left:3572.5px;top:1918.7px;width:5.2px;height:5.2px;background:#303030;"></div>
<div class="a" style="left:426.0px;top:1948.0px;width:3160.0px;height:60.0px;background:#FFFFFF;"></div>
<svg class="a" style="left:449.5px;top:1972.0px;" width="9.0" height="15.0" viewBox="0 0 9 15"><polyline points="1.5,1.5 7.5,7.5 1.5,13.5" fill="none" stroke="#24292E" stroke-width="2.8"/></svg>
<div class="t" style="left:470.8px;top:1961.1px;font-size:32px;color:#24292E;-webkit-text-stroke:0.70px #24292E;transform:scaleX(1.1034);transform-origin:0 0;">Memory Meminfo</div>
<div class="t" style="left:779.4px;top:1967.9px;font-size:24px;color:#5B5F63;font-style:italic;transform:scaleX(1.0395);transform-origin:0 0;">(12 panels)</div>
<div class="a" style="left:3562.0px;top:1961.7px;width:5.2px;height:5.2px;background:#303030;"></div>
<div class="a" style="left:3572.5px;top:1961.7px;width:5.2px;height:5.2px;background:#303030;"></div>
<div class="a" style="left:3562.0px;top:1972.7px;width:5.2px;height:5.2px;background:#303030;"></div>
<div class="a" style="left:3572.5px;top:1972.7px;width:5.2px;height:5.2px;background:#303030;"></div>
<div class="a" style="left:3562.0px;top:1983.7px;width:5.2px;height:5.2px;background:#303030;"></div>
<div class="a" style="left:3572.5px;top:1983.7px;width:5.2px;height:5.2px;background:#303030;"></div>
<div class="a" style="left:3562.0px;top:1994.7px;width:5.2px;height:5.2px;background:#303030;"></div>
<div class="a" style="left:3572.5px;top:1994.7px;width:5.2px;height:5.2px;background:#303030;"></div>
<div class="a" style="left:426.0px;top:2024.0px;width:3160.0px;height:60.0px;background:#FFFFFF;"></div>
<svg class="a" style="left:449.5px;top:2048.0px;" width="9.0" height="15.0" viewBox="0 0 9 15"><polyline points="1.5,1.5 7.5,7.5 1.5,13.5" fill="none" stroke="#24292E" stroke-width="2.8"/></svg>
<div class="t" style="left:470.8px;top:2037.1px;font-size:32px;color:#24292E;-webkit-text-stroke:0.70px #24292E;transform:scaleX(1.1012);transform-origin:0 0;">Memory Vmstat</div>
<div class="t" style="left:753.3px;top:2043.9px;font-size:24px;color:#5B5F63;font-style:italic;transform:scaleX(1.0842);transform-origin:0 0;">(4 panels)</div>
<div class="a" style="left:3562.0px;top:2037.7px;width:5.2px;height:5.2px;background:#303030;"></div>
<div class="a" style="left:3572.5px;top:2037.7px;width:5.2px;height:5.2px;background:#303030;"></div>
<div class="a" style="left:3562.0px;top:2048.7px;width:5.2px;height:5.2px;background:#303030;"></div>
<div class="a" style="left:3572.5px;top:2048.7px;width:5.2px;height:5.2px;background:#303030;"></div>
<div class="a" style="left:3562.0px;top:2059.7px;width:5.2px;height:5.2px;background:#303030;"></div>
<div class="a" style="left:3572.5px;top:2059.7px;width:5.2px;height:5.2px;background:#303030;"></div>
<div class="a" style="left:3562.0px;top:2070.7px;width:5.2px;height:5.2px;background:#303030;"></div>
<div class="a" style="left:3572.5px;top:2070.7px;width:5.2px;height:5.2px;background:#303030;"></div>
<div class="a" style="left:426.0px;top:2100.0px;width:3160.0px;height:60.0px;background:#FFFFFF;"></div>
<svg class="a" style="left:449.5px;top:2124.0px;" width="9.0" height="15.0" viewBox="0 0 9 15"><polyline points="1.5,1.5 7.5,7.5 1.5,13.5" fill="none" stroke="#24292E" stroke-width="2.8"/></svg>
<div class="t" style="left:470.8px;top:2113.1px;font-size:32px;color:#24292E;-webkit-text-stroke:0.70px #24292E;transform:scaleX(1.0969);transform-origin:0 0;">System Timesync</div>
<div class="t" style="left:782.6px;top:2119.9px;font-size:24px;color:#5B5F63;font-style:italic;transform:scaleX(1.0683);transform-origin:0 0;">(6 panels)</div>
<div class="a" style="left:3562.0px;top:2113.7px;width:5.2px;height:5.2px;background:#303030;"></div>
<div class="a" style="left:3572.5px;top:2113.7px;width:5.2px;height:5.2px;background:#303030;"></div>
<div class="a" style="left:3562.0px;top:2124.7px;width:5.2px;height:5.2px;background:#303030;"></div>
<div class="a" style="left:3572.5px;top:2124.7px;width:5.2px;height:5.2px;background:#303030;"></div>
<div class="a" style="left:3562.0px;top:2135.7px;width:5.2px;height:5.2px;background:#303030;"></div>
<div class="a" style="left:3572.5px;top:2135.7px;width:5.2px;height:5.2px;background:#303030;"></div>
<div class="a" style="left:3562.0px;top:2146.7px;width:5.2px;height:5.2px;background:#303030;"></div>
<div class="a" style="left:3572.5px;top:2146.7px;width:5.2px;height:5.2px;background:#303030;"></div>
<div class="a" style="left:426.0px;top:428.0px;width:381.0px;height:288.0px;border:2px solid #D9DADC;border-radius:4px;background:#fff"></div>
<div class="t" style="left:444.5px;top:448.6px;font-size:28px;color:#24292E;-webkit-text-stroke:0.62px #24292E;transform:scaleX(1.0631);transform-origin:0 0;">Pressure</div>
<svg class="a" style="left:599.6px;top:449.0px;" width="26.0" height="26.0" viewBox="0 0 26 26"><circle cx="13" cy="13" r="11.6" fill="none" stroke="#40454A" stroke-width="2.3"/><circle cx="13" cy="8.2" r="1.6" fill="#40454A"/><line x1="13" y1="11.5" x2="13" y2="19" stroke="#40454A" stroke-width="2.5"/></svg>
<div class="a" style="left:823.0px;top:428.0px;width:381.0px;height:288.0px;border:2px solid #D9DADC;border-radius:4px;background:#fff"></div>
<div class="t" style="left:841.5px;top:448.6px;font-size:28px;color:#24292E;-webkit-text-stroke:0.62px #24292E;transform:scaleX(1.0391);transform-origin:0 0;">CPU Busy</div>
<svg class="a" style="left:1011.7px;top:449.0px;" width="26.0" height="26.0" viewBox="0 0 26 26"><circle cx="13" cy="13" r="11.6" fill="none" stroke="#40454A" stroke-width="2.3"/><circle cx="13" cy="8.2" r="1.6" fill="#40454A"/><line x1="13" y1="11.5" x2="13" y2="19" stroke="#40454A" stroke-width="2.5"/></svg>
<div class="a" style="left:1220.0px;top:428.0px;width:381.0px;height:288.0px;border:2px solid #D9DADC;border-radius:4px;background:#fff"></div>
<div class="t" style="left:1238.5px;top:448.6px;font-size:28px;color:#24292E;-webkit-text-stroke:0.62px #24292E;transform:scaleX(1.0536);transform-origin:0 0;">Sys Load</div>
<svg class="a" style="left:1397.5px;top:449.0px;" width="26.0" height="26.0" viewBox="0 0 26 26"><circle cx="13" cy="13" r="11.6" fill="none" stroke="#40454A" stroke-width="2.3"/><circle cx="13" cy="8.2" r="1.6" fill="#40454A"/><line x1="13" y1="11.5" x2="13" y2="19" stroke="#40454A" stroke-width="2.5"/></svg>
<div class="a" style="left:1617.0px;top:428.0px;width:381.0px;height:288.0px;border:2px solid #D9DADC;border-radius:4px;background:#fff"></div>
<div class="t" style="left:1635.5px;top:448.6px;font-size:28px;color:#24292E;-webkit-text-stroke:0.62px #24292E;transform:scaleX(1.0402);transform-origin:0 0;">RAM Used</div>
<svg class="a" style="left:1812.3px;top:449.0px;" width="26.0" height="26.0" viewBox="0 0 26 26"><circle cx="13" cy="13" r="11.6" fill="none" stroke="#40454A" stroke-width="2.3"/><circle cx="13" cy="8.2" r="1.6" fill="#40454A"/><line x1="13" y1="11.5" x2="13" y2="19" stroke="#40454A" stroke-width="2.5"/></svg>
<div class="a" style="left:2014.0px;top:428.0px;width:381.0px;height:288.0px;border:2px solid #D9DADC;border-radius:4px;background:#fff"></div>
<div class="t" style="left:2032.5px;top:448.6px;font-size:28px;color:#24292E;-webkit-text-stroke:0.62px #24292E;transform:scaleX(1.0386);transform-origin:0 0;">SWAP Used</div>
<svg class="a" style="left:2228.5px;top:449.0px;" width="26.0" height="26.0" viewBox="0 0 26 26"><circle cx="13" cy="13" r="11.6" fill="none" stroke="#40454A" stroke-width="2.3"/><circle cx="13" cy="8.2" r="1.6" fill="#40454A"/><line x1="13" y1="11.5" x2="13" y2="19" stroke="#40454A" stroke-width="2.5"/></svg>
<div class="a" style="left:2411.0px;top:428.0px;width:381.0px;height:288.0px;border:2px solid #D9DADC;border-radius:4px;background:#fff"></div>
<div class="t" style="left:2429.5px;top:448.6px;font-size:28px;color:#24292E;-webkit-text-stroke:0.62px #24292E;transform:scaleX(1.0350);transform-origin:0 0;">Root FS Used</div>
<svg class="a" style="left:2647.5px;top:449.0px;" width="26.0" height="26.0" viewBox="0 0 26 26"><circle cx="13" cy="13" r="11.6" fill="none" stroke="#40454A" stroke-width="2.3"/><circle cx="13" cy="8.2" r="1.6" fill="#40454A"/><line x1="13" y1="11.5" x2="13" y2="19" stroke="#40454A" stroke-width="2.5"/></svg>
<div class="a" style="left:2808.0px;top:428.0px;width:248.7px;height:136.0px;border:2px solid #D9DADC;border-radius:4px;background:#fff"></div>
<div class="t" style="left:2826.5px;top:448.6px;font-size:28px;color:#24292E;-webkit-text-stroke:0.62px #24292E;transform:scaleX(1.0383);transform-origin:0 0;">CPU Cores</div>
<div class="a" style="left:3072.7px;top:428.0px;width:248.7px;height:136.0px;border:2px solid #D9DADC;border-radius:4px;background:#fff"></div>
<div class="t" style="left:3091.2px;top:448.6px;font-size:28px;color:#24292E;-webkit-text-stroke:0.62px #24292E;transform:scaleX(1.0681);transform-origin:0 0;">RAM Total</div>
<div class="a" style="left:3337.3px;top:428.0px;width:248.7px;height:136.0px;border:2px solid #D9DADC;border-radius:4px;background:#fff"></div>
<div class="t" style="left:3355.8px;top:448.6px;font-size:28px;color:#24292E;-webkit-text-stroke:0.62px #24292E;transform:scaleX(1.0636);transform-origin:0 0;">SWAP Total</div>
<div class="a" style="left:2808.0px;top:580.0px;width:248.7px;height:136.0px;border:2px solid #D9DADC;border-radius:4px;background:#fff"></div>
<div class="t" style="left:2826.5px;top:600.6px;font-size:28px;color:#24292E;-webkit-text-stroke:0.62px #24292E;transform:scaleX(1.0428);transform-origin:0 0;">RootFS T...</div>
<div class="a" style="left:3072.7px;top:580.0px;width:513.3px;height:136.0px;border:2px solid #D9DADC;border-radius:4px;background:#fff"></div>
<div class="t" style="left:3091.2px;top:600.6px;font-size:28px;color:#24292E;-webkit-text-stroke:0.62px #24292E;transform:scaleX(1.0780);transform-origin:0 0;">Uptime</div>
<div class="a" style="left:426.0px;top:808.0px;width:1572.0px;height:516.0px;border:2px solid #D9DADC;border-radius:4px;background:#fff"></div>
<div class="t" style="left:444.5px;top:828.6px;font-size:28px;color:#24292E;-webkit-text-stroke:0.62px #24292E;transform:scaleX(1.0394);transform-origin:0 0;">CPU Basic</div>
<svg class="a" style="left:621.2px;top:829.0px;" width="26.0" height="26.0" viewBox="0 0 26 26"><circle cx="13" cy="13" r="11.6" fill="none" stroke="#40454A" stroke-width="2.3"/><circle cx="13" cy="8.2" r="1.6" fill="#40454A"/><line x1="13" y1="11.5" x2="13" y2="19" stroke="#40454A" stroke-width="2.5"/></svg>
<div class="a" style="left:2014.0px;top:808.0px;width:1572.0px;height:516.0px;border:2px solid #D9DADC;border-radius:4px;background:#fff"></div>
<div class="t" style="left:2032.5px;top:828.6px;font-size:28px;color:#24292E;-webkit-text-stroke:0.62px #24292E;transform:scaleX(1.0871);transform-origin:0 0;">Memory Basic</div>
<svg class="a" style="left:2261.3px;top:829.0px;" width="26.0" height="26.0" viewBox="0 0 26 26"><circle cx="13" cy="13" r="11.6" fill="none" stroke="#40454A" stroke-width="2.3"/><circle cx="13" cy="8.2" r="1.6" fill="#40454A"/><line x1="13" y1="11.5" x2="13" y2="19" stroke="#40454A" stroke-width="2.5"/></svg>
<div class="a" style="left:426.0px;top:1340.0px;width:1572.0px;height:516.0px;border:2px solid #D9DADC;border-radius:4px;background:#fff"></div>
<div class="t" style="left:444.5px;top:1360.6px;font-size:28px;color:#24292E;-webkit-text-stroke:0.62px #24292E;transform:scaleX(1.1188);transform-origin:0 0;">Network Traffic Basic</div>
<svg class="a" style="left:774.1px;top:1361.0px;" width="26.0" height="26.0" viewBox="0 0 26 26"><circle cx="13" cy="13" r="11.6" fill="none" stroke="#40454A" stroke-width="2.3"/><circle cx="13" cy="8.2" r="1.6" fill="#40454A"/><line x1="13" y1="11.5" x2="13" y2="19" stroke="#40454A" stroke-width="2.5"/></svg>
<div class="a" style="left:2014.0px;top:1340.0px;width:1572.0px;height:516.0px;border:2px solid #D9DADC;border-radius:4px;background:#fff"></div>
<div class="t" style="left:2032.5px;top:1360.6px;font-size:28px;color:#24292E;-webkit-text-stroke:0.62px #24292E;transform:scaleX(1.0715);transform-origin:0 0;">Disk Space Used Basic</div>
<svg class="a" style="left:2380.3px;top:1361.0px;" width="26.0" height="26.0" viewBox="0 0 26 26"><circle cx="13" cy="13" r="11.6" fill="none" stroke="#40454A" stroke-width="2.3"/><circle cx="13" cy="8.2" r="1.6" fill="#40454A"/><line x1="13" y1="11.5" x2="13" y2="19" stroke="#40454A" stroke-width="2.5"/></svg>
<svg class="a" style="left:0;top:0" width="3608" height="2154"><path d="M890.43,688.49 A129.4,129.4 0 1 1 1138.83,616.32 L1133.02,617.81 A123.4,123.4 0 1 0 896.14,686.63 Z" fill="#34A02C"/><path d="M1138.83,616.32 A129.4,129.4 0 0 1 1141.88,664.72 L1135.93,663.97 A123.4,123.4 0 0 0 1133.02,617.81 Z" fill="#E3772C"/><path d="M1141.88,664.72 A129.4,129.4 0 0 1 1136.57,688.49 L1130.86,686.63 A123.4,123.4 0 0 0 1135.93,663.97 Z" fill="#EC2B38"/><path d="M897.85,686.08 A121.6,121.6 0 1 1 1129.15,686.08 L1096.62,675.51 A87.4,87.4 0 1 0 930.38,675.51 Z" fill="#F0F2F2"/><path d="M897.85,686.08 A121.6,121.6 0 0 1 894.08,671.44 L927.67,664.98 A87.4,87.4 0 0 0 930.38,675.51 Z" fill="#34A02C"/></svg>
<div class="t" style="left:960.6px;top:637.2px;font-size:47px;color:#34A02C;transform:scaleX(0.9867);transform-origin:0 0;">3.3%</div>
<svg class="a" style="left:0;top:0" width="3608" height="2154"><path d="M1287.43,688.49 A129.4,129.4 0 1 1 1535.83,616.32 L1530.02,617.81 A123.4,123.4 0 1 0 1293.14,686.63 Z" fill="#34A02C"/><path d="M1535.83,616.32 A129.4,129.4 0 0 1 1538.88,664.72 L1532.93,663.97 A123.4,123.4 0 0 0 1530.02,617.81 Z" fill="#E3772C"/><path d="M1538.88,664.72 A129.4,129.4 0 0 1 1533.57,688.49 L1527.86,686.63 A123.4,123.4 0 0 0 1532.93,663.97 Z" fill="#EC2B38"/><path d="M1294.85,686.08 A121.6,121.6 0 1 1 1526.15,686.08 L1493.62,675.51 A87.4,87.4 0 1 0 1327.38,675.51 Z" fill="#F0F2F2"/><path d="M1294.85,686.08 A121.6,121.6 0 0 1 1289.08,655.07 L1323.23,653.22 A87.4,87.4 0 0 0 1327.38,675.51 Z" fill="#34A02C"/></svg>
<div class="t" style="left:1357.8px;top:637.2px;font-size:47px;color:#34A02C;transform:scaleX(0.9830);transform-origin:0 0;">6.9%</div>
<svg class="a" style="left:0;top:0" width="3608" height="2154"><path d="M1684.43,688.49 A129.4,129.4 0 0 1 1924.58,593.40 L1919.16,595.96 A123.4,123.4 0 0 0 1690.14,686.63 Z" fill="#34A02C"/><path d="M1924.58,593.40 A129.4,129.4 0 0 1 1936.64,640.37 L1930.66,640.75 A123.4,123.4 0 0 0 1919.16,595.96 Z" fill="#E3772C"/><path d="M1936.64,640.37 A129.4,129.4 0 0 1 1930.57,688.49 L1924.86,686.63 A123.4,123.4 0 0 0 1930.66,640.75 Z" fill="#EC2B38"/><path d="M1691.85,686.08 A121.6,121.6 0 1 1 1923.15,686.08 L1890.62,675.51 A87.4,87.4 0 1 0 1724.38,675.51 Z" fill="#F0F2F2"/><path d="M1691.85,686.08 A121.6,121.6 0 0 1 1707.79,578.89 L1735.84,598.47 A87.4,87.4 0 0 0 1724.38,675.51 Z" fill="#34A02C"/></svg>
<div class="t" style="left:1752.8px;top:641.1px;font-size:37px;color:#34A02C;transform:scaleX(1.0428);transform-origin:0 0;">24.5%</div>
<svg class="a" style="left:0;top:0" width="3608" height="2154"><path d="M2081.43,688.49 A129.4,129.4 0 0 1 2075.36,640.37 L2081.34,640.75 A123.4,123.4 0 0 0 2087.14,686.63 Z" fill="#34A02C"/><path d="M2075.36,640.37 A129.4,129.4 0 0 1 2099.81,572.44 L2104.67,575.97 A123.4,123.4 0 0 0 2081.34,640.75 Z" fill="#E3772C"/><path d="M2099.81,572.44 A129.4,129.4 0 0 1 2327.57,688.49 L2321.86,686.63 A123.4,123.4 0 0 0 2104.67,575.97 Z" fill="#EC2B38"/><path d="M2088.85,686.08 A121.6,121.6 0 1 1 2320.15,686.08 L2287.62,675.51 A87.4,87.4 0 1 0 2121.38,675.51 Z" fill="#F0F2F2"/></svg>
<div class="t" style="left:2154.2px;top:632.9px;font-size:60px;color:#34A02C;transform:scaleX(1.0058);transform-origin:0 0;">N/A</div>
<svg class="a" style="left:0;top:0" width="3608" height="2154"><path d="M2478.43,688.49 A129.4,129.4 0 0 1 2718.58,593.40 L2713.16,595.96 A123.4,123.4 0 0 0 2484.14,686.63 Z" fill="#34A02C"/><path d="M2718.58,593.40 A129.4,129.4 0 0 1 2730.64,640.37 L2724.66,640.75 A123.4,123.4 0 0 0 2713.16,595.96 Z" fill="#E3772C"/><path d="M2730.64,640.37 A129.4,129.4 0 0 1 2724.57,688.49 L2718.86,686.63 A123.4,123.4 0 0 0 2724.66,640.75 Z" fill="#EC2B38"/><path d="M2485.85,686.08 A121.6,121.6 0 1 1 2717.15,686.08 L2684.62,675.51 A87.4,87.4 0 1 0 2518.38,675.51 Z" fill="#F0F2F2"/><path d="M2485.85,686.08 A121.6,121.6 0 0 1 2634.10,531.35 L2624.93,564.30 A87.4,87.4 0 0 0 2518.38,675.51 Z" fill="#34A02C"/></svg>
<div class="t" style="left:2547.3px;top:639.5px;font-size:39px;color:#34A02C;transform:scaleX(0.9803);transform-origin:0 0;">57.2%</div>
<div class="a" style="left:444.0px;top:509.5px;width:211.0px;height:187.5px;background:#F1F2F2;border-radius:3px"></div>
<div class="a" style="left:444.0px;top:509.5px;width:3.5px;height:187.5px;background:#34A02C;border-radius:2px"></div>
<div class="t" style="left:682.6px;top:590.2px;font-size:24px;color:#34A02C;transform:scaleX(1.0279);transform-origin:0 0;">No data</div>
<div class="t" style="left:2923.9px;top:513.6px;font-size:30px;color:#24292E;-webkit-text-stroke:0.66px #24292E;">8</div>
<div class="t" style="left:3150.8px;top:513.6px;font-size:30px;color:#24292E;-webkit-text-stroke:0.66px #24292E;transform:scaleX(1.1089);transform-origin:0 0;">30</div>
<div class="t" style="left:3197.4px;top:517.0px;font-size:26px;color:#24292E;-webkit-text-stroke:0.57px #24292E;transform:scaleX(1.0036);transform-origin:0 0;">GiB</div>
<div class="t" style="left:3440.4px;top:513.6px;font-size:30px;color:#24292E;-webkit-text-stroke:0.66px #24292E;">0</div>
<div class="t" style="left:3467.7px;top:517.0px;font-size:26px;color:#24292E;-webkit-text-stroke:0.57px #24292E;">B</div>
<div class="t" style="left:2886.9px;top:664.9px;font-size:30px;color:#24292E;-webkit-text-stroke:0.66px #24292E;transform:scaleX(1.1089);transform-origin:0 0;">49</div>
<div class="t" style="left:2933.5px;top:668.3px;font-size:26px;color:#24292E;-webkit-text-stroke:0.57px #24292E;transform:scaleX(1.0036);transform-origin:0 0;">GiB</div>
<div class="t" style="left:3255.3px;top:664.9px;font-size:30px;color:#24292E;-webkit-text-stroke:0.66px #24292E;transform:scaleX(0.9369);transform-origin:0 0;">26.1</div>
<div class="t" style="left:3319.7px;top:668.3px;font-size:26px;color:#24292E;-webkit-text-stroke:0.57px #24292E;transform:scaleX(1.1141);transform-origin:0 0;">weeks</div>
<svg class="a" style="left:0;top:0" width="3608" height="2154"><rect x="524.3" y="905.8" width="1439.0" height="310.0" fill="#8C99AB"/><polygon points="524.3,1207.8 526.3,1207.5 528.3,1207.8 530.3,1207.9 532.3,1208.1 534.3,1207.8 536.3,1207.3 538.3,1207.6 540.3,1207.3 542.3,1206.8 544.3,1199.0 545.2,1196.5 546.3,1200.6 548.3,1206.8 550.3,1207.5 552.3,1207.6 554.3,1208.4 556.3,1208.4 558.3,1208.1 560.3,1207.9 562.3,1207.6 564.3,1207.8 566.3,1207.5 568.3,1208.0 570.3,1207.6 572.3,1207.6 574.3,1208.0 576.3,1207.1 578.3,1207.5 580.3,1207.3 582.3,1208.0 584.3,1208.0 586.3,1207.9 588.3,1207.8 590.3,1207.5 592.3,1207.6 594.3,1207.9 596.3,1208.1 598.3,1207.9 600.3,1207.3 602.3,1208.0 604.3,1207.6 606.3,1207.6 608.3,1208.3 610.3,1207.7 612.3,1207.3 614.4,1208.5 616.4,1207.4 618.4,1196.1 620.4,1163.8 620.8,1161.1 622.4,1180.5 624.4,1205.6 626.4,1207.4 628.4,1207.5 630.4,1206.7 632.4,1195.1 632.9,1193.7 634.4,1202.1 636.4,1208.1 638.4,1207.5 640.4,1208.0 642.4,1207.9 644.4,1208.2 646.4,1208.1 648.4,1207.9 650.4,1207.3 652.4,1208.5 654.4,1208.3 656.4,1207.7 658.4,1207.2 660.4,1207.5 662.4,1208.4 664.4,1208.7 666.4,1207.6 668.4,1208.0 670.4,1208.2 672.4,1207.4 674.4,1207.3 676.4,1207.7 678.4,1207.6 680.4,1207.6 682.4,1207.1 684.4,1207.5 686.4,1207.5 688.4,1207.5 690.4,1208.3 692.4,1207.3 694.4,1207.4 696.4,1207.5 698.4,1208.5 700.4,1208.0 702.4,1207.4 704.4,1208.4 706.4,1207.8 708.4,1207.4 710.4,1208.2 712.4,1207.1 714.4,1207.5 716.4,1207.8 718.4,1207.6 720.4,1207.5 722.4,1207.7 724.4,1207.3 726.4,1208.0 728.4,1207.9 730.4,1207.4 732.4,1207.7 734.4,1208.1 736.4,1207.3 738.4,1207.1 740.4,1207.5 742.4,1207.5 744.4,1206.5 746.4,1206.1 748.4,1206.0 750.4,1205.6 752.4,1207.0 754.4,1206.7 756.4,1208.0 758.4,1207.9 760.4,1207.5 762.4,1207.3 764.4,1207.4 766.4,1207.6 768.4,1207.7 770.4,1207.7 772.4,1207.5 774.4,1207.8 776.4,1207.6 778.4,1207.5 780.4,1207.7 782.4,1207.5 784.4,1207.5 786.4,1207.0 788.4,1207.6 790.4,1207.9 792.4,1207.9 794.5,1207.7 796.5,1207.4 798.5,1207.9 800.5,1207.6 802.5,1207.1 804.5,1208.7 806.5,1208.2 808.5,1207.6 810.5,1207.6 812.5,1206.3 814.5,1193.3 814.8,1192.0 816.5,1203.0 818.5,1207.9 820.5,1206.8 822.5,1207.6 824.5,1207.9 826.5,1207.8 828.5,1207.8 830.5,1207.8 832.5,1208.8 834.5,1207.9 836.5,1207.4 838.5,1208.2 840.5,1207.8 842.5,1207.4 844.5,1207.4 846.5,1207.2 848.5,1208.4 850.5,1207.9 852.5,1207.9 854.5,1207.5 856.5,1207.3 858.5,1208.7 860.5,1207.3 862.5,1208.3 864.5,1207.5 866.5,1208.3 868.5,1207.7 870.5,1207.3 872.5,1207.8 874.5,1207.7 876.5,1207.4 878.5,1207.7 880.5,1207.8 882.5,1207.2 884.5,1207.3 886.5,1207.8 888.5,1206.7 890.5,1208.2 892.5,1207.4 894.5,1207.7 896.5,1207.4 898.5,1206.8 900.5,1206.5 902.5,1206.0 904.5,1206.8 906.5,1207.0 908.5,1206.7 910.5,1207.6 912.5,1207.9 914.5,1208.2 916.5,1207.3 918.5,1207.5 920.5,1207.2 922.5,1208.1 924.5,1207.7 926.5,1208.2 928.5,1207.5 930.5,1207.1 932.5,1208.1 934.5,1207.2 936.5,1207.4 938.5,1207.8 940.5,1208.5 942.5,1207.2 944.5,1207.8 946.5,1208.0 948.5,1207.6 950.5,1207.6 952.5,1207.2 954.5,1208.1 956.5,1207.3 958.5,1207.2 960.5,1207.2 962.5,1207.8 964.5,1208.0 966.5,1207.4 968.5,1207.7 970.5,1207.7 972.5,1207.2 974.6,1207.8 976.6,1208.6 978.6,1207.9 980.6,1208.4 982.6,1207.4 984.6,1207.6 986.6,1208.0 988.6,1207.7 990.6,1207.4 992.6,1207.7 994.6,1207.2 996.6,1207.8 998.6,1207.4 1000.6,1207.2 1002.6,1207.1 1004.6,1208.0 1006.6,1207.4 1008.6,1208.4 1010.6,1208.1 1012.6,1208.5 1014.6,1207.3 1016.6,1208.2 1018.6,1207.7 1020.6,1207.8 1022.6,1207.8 1024.6,1208.0 1026.6,1207.7 1028.6,1207.1 1030.6,1207.7 1032.6,1207.5 1034.6,1207.4 1036.6,1207.8 1038.6,1208.2 1040.6,1207.9 1042.6,1207.3 1044.6,1208.4 1046.6,1208.0 1048.6,1207.4 1050.6,1207.4 1052.6,1207.7 1054.6,1207.4 1056.6,1207.7 1058.6,1208.2 1060.6,1208.3 1062.6,1208.0 1064.0,1185.4 1064.6,1185.4 1065.8,1197.2 1066.6,1197.2 1068.6,1197.2 1070.0,1165.1 1070.6,1162.7 1072.6,1151.6 1073.0,1151.1 1074.6,1160.0 1076.6,1166.6 1078.6,1166.8 1080.6,1166.2 1082.6,1166.5 1084.6,1166.5 1086.6,1166.6 1088.6,1166.1 1090.6,1166.3 1092.6,1166.6 1094.6,1166.0 1096.6,1154.8 1097.0,1154.0 1098.6,1163.7 1100.6,1166.3 1102.6,1167.0 1104.6,1166.0 1106.6,1166.3 1108.6,1167.2 1110.6,1165.8 1112.6,1166.4 1114.6,1166.1 1116.6,1166.4 1118.6,1166.6 1120.6,1167.2 1122.6,1166.1 1124.6,1166.5 1126.6,1166.6 1128.6,1166.3 1130.6,1166.5 1132.6,1166.2 1134.6,1166.7 1136.6,1166.5 1138.6,1167.5 1140.6,1166.7 1142.6,1166.2 1144.6,1165.9 1146.6,1164.9 1148.5,1147.0 1148.6,1146.5 1150.6,1165.9 1150.9,1165.8 1152.6,1208.1 1154.7,1206.7 1156.7,1207.3 1158.7,1207.5 1160.7,1208.7 1162.7,1207.5 1164.7,1207.6 1166.7,1207.1 1168.7,1207.6 1170.7,1207.8 1172.7,1207.5 1174.7,1208.5 1176.7,1207.4 1178.7,1207.6 1180.7,1208.0 1182.7,1207.2 1184.7,1207.1 1186.7,1208.3 1188.7,1208.0 1190.7,1207.6 1192.7,1207.7 1194.7,1207.9 1196.7,1208.1 1198.7,1207.0 1200.7,1207.4 1202.7,1208.2 1204.7,1208.2 1206.7,1207.1 1208.7,1207.4 1210.7,1207.1 1212.7,1207.4 1214.7,1208.1 1216.7,1207.6 1218.7,1208.5 1220.7,1208.0 1222.7,1207.8 1224.7,1207.5 1226.7,1208.0 1228.7,1207.8 1230.7,1207.6 1232.7,1207.6 1234.7,1207.5 1236.7,1207.7 1238.7,1207.9 1240.7,1207.4 1242.7,1207.7 1244.7,1208.0 1246.7,1208.0 1248.7,1207.7 1250.7,1207.8 1252.7,1207.7 1254.7,1207.7 1256.7,1207.7 1258.7,1207.8 1260.7,1208.2 1262.7,1207.6 1264.7,1207.3 1266.7,1207.6 1268.7,1207.8 1270.7,1207.6 1272.7,1208.1 1274.7,1208.4 1276.7,1207.7 1278.7,1208.1 1280.7,1207.5 1282.7,1208.1 1284.7,1208.7 1286.7,1208.1 1288.7,1207.2 1290.7,1207.9 1292.7,1208.2 1294.7,1208.0 1296.7,1207.5 1298.7,1207.6 1300.7,1207.7 1302.7,1207.2 1304.7,1207.5 1306.7,1207.7 1308.7,1207.5 1310.7,1207.1 1312.7,1207.4 1314.7,1207.4 1316.7,1208.1 1318.7,1207.8 1320.7,1207.5 1322.7,1207.9 1324.7,1207.3 1326.7,1207.5 1328.7,1207.4 1330.7,1207.8 1332.7,1206.8 1334.8,1207.3 1336.8,1207.8 1338.8,1207.7 1340.8,1206.8 1342.8,1207.9 1344.8,1207.4 1346.8,1207.4 1348.8,1207.7 1350.8,1208.2 1352.8,1207.7 1354.8,1207.6 1356.8,1207.3 1358.8,1207.4 1360.8,1207.7 1362.8,1207.4 1364.8,1207.5 1366.8,1207.7 1368.8,1207.7 1370.8,1207.8 1372.8,1207.5 1374.8,1208.1 1376.8,1208.0 1378.8,1207.7 1380.8,1208.3 1382.8,1207.9 1384.8,1208.5 1386.8,1208.0 1388.8,1207.5 1390.8,1207.5 1392.8,1207.8 1394.8,1207.8 1396.8,1208.2 1398.8,1206.9 1400.8,1207.1 1402.8,1206.5 1404.8,1206.8 1406.8,1206.3 1408.8,1206.9 1410.8,1206.3 1412.8,1206.7 1414.8,1208.1 1416.8,1207.6 1418.8,1207.5 1420.8,1208.4 1422.8,1208.4 1424.8,1208.1 1426.8,1208.0 1428.8,1208.3 1430.8,1207.7 1432.8,1207.6 1434.8,1207.5 1436.8,1207.5 1438.8,1207.2 1440.8,1207.3 1442.8,1208.2 1444.8,1207.9 1446.8,1208.1 1448.8,1208.1 1450.8,1207.8 1452.8,1207.7 1454.8,1207.6 1456.8,1208.3 1458.8,1208.2 1460.8,1207.7 1462.8,1207.8 1464.8,1207.9 1466.8,1207.8 1468.8,1208.0 1470.8,1207.5 1472.8,1207.6 1474.8,1207.8 1476.8,1208.0 1478.8,1207.8 1480.8,1208.8 1482.8,1208.1 1484.8,1207.7 1486.8,1208.3 1488.8,1207.7 1490.8,1207.7 1492.8,1208.3 1494.8,1207.8 1496.8,1207.9 1498.8,1207.6 1500.8,1207.5 1502.8,1207.8 1504.8,1208.1 1506.8,1207.8 1508.8,1207.8 1510.8,1207.5 1512.8,1207.6 1514.9,1208.0 1516.9,1208.2 1518.9,1207.9 1520.9,1208.0 1522.9,1208.2 1524.9,1207.8 1526.9,1207.9 1528.9,1207.7 1530.9,1207.5 1532.9,1207.9 1534.9,1206.9 1536.9,1207.9 1538.9,1207.3 1540.9,1207.7 1542.9,1207.3 1544.9,1208.6 1546.9,1208.0 1548.9,1207.6 1550.9,1207.5 1552.9,1206.9 1554.9,1207.6 1556.9,1207.3 1558.9,1207.5 1560.9,1207.4 1562.9,1207.6 1564.9,1207.8 1566.9,1207.6 1568.9,1208.1 1570.9,1207.3 1572.9,1208.1 1574.9,1207.6 1576.9,1207.0 1578.9,1207.8 1580.9,1207.7 1582.9,1207.3 1584.9,1207.7 1586.9,1208.0 1588.9,1207.6 1590.9,1207.5 1592.9,1207.5 1594.9,1208.0 1596.9,1207.1 1598.9,1207.1 1600.9,1207.7 1602.9,1207.6 1604.9,1207.9 1606.9,1207.2 1608.9,1208.0 1610.9,1207.5 1612.9,1207.9 1614.9,1208.0 1616.9,1207.5 1618.9,1207.2 1620.9,1207.7 1622.9,1208.0 1624.9,1207.4 1626.9,1207.8 1628.9,1207.6 1630.9,1207.2 1632.9,1207.3 1634.9,1207.9 1636.9,1206.9 1638.9,1207.7 1640.9,1207.4 1642.9,1208.0 1644.9,1207.8 1646.9,1206.7 1648.0,1203.4 1648.9,1205.2 1650.9,1208.2 1652.9,1208.3 1654.9,1208.3 1656.9,1207.3 1658.9,1207.9 1660.9,1207.8 1662.9,1207.9 1664.9,1207.8 1666.9,1208.1 1668.9,1207.7 1670.9,1208.3 1672.9,1207.8 1674.9,1207.6 1676.9,1207.6 1678.9,1207.8 1680.9,1208.1 1682.9,1207.7 1684.9,1207.9 1686.9,1207.2 1688.9,1207.5 1690.9,1207.8 1692.9,1207.9 1695.0,1208.0 1697.0,1208.1 1699.0,1207.9 1701.0,1207.6 1703.0,1207.5 1705.0,1207.5 1707.0,1207.0 1709.0,1208.0 1711.0,1207.7 1713.0,1206.7 1715.0,1208.4 1717.0,1207.9 1719.0,1207.7 1721.0,1207.7 1723.0,1207.6 1725.0,1207.8 1727.0,1207.6 1729.0,1207.7 1731.0,1207.5 1733.0,1208.4 1735.0,1208.1 1737.0,1207.7 1739.0,1208.1 1741.0,1208.1 1743.0,1207.5 1745.0,1208.0 1747.0,1207.5 1749.0,1207.5 1751.0,1207.6 1753.0,1207.6 1755.0,1207.8 1757.0,1208.3 1759.0,1207.8 1761.0,1207.6 1763.0,1207.9 1765.0,1207.8 1767.0,1207.5 1769.0,1208.1 1771.0,1207.5 1773.0,1207.0 1775.0,1207.9 1777.0,1207.7 1779.0,1207.8 1781.0,1207.2 1783.0,1207.6 1785.0,1207.4 1787.0,1208.0 1789.0,1207.7 1791.0,1203.6 1791.8,1202.2 1793.0,1205.1 1795.0,1207.4 1797.0,1208.4 1799.0,1207.5 1801.0,1207.8 1803.0,1207.6 1805.0,1207.6 1807.0,1204.8 1808.5,1189.8 1809.0,1191.7 1811.0,1207.7 1813.0,1208.1 1815.0,1208.2 1817.0,1208.2 1819.0,1207.6 1821.0,1207.1 1823.0,1207.6 1825.0,1207.6 1827.0,1206.9 1829.0,1207.9 1831.0,1208.0 1833.0,1207.5 1835.0,1207.5 1837.0,1208.1 1839.0,1208.2 1841.0,1207.6 1843.0,1207.6 1845.0,1208.2 1847.0,1207.8 1849.0,1207.9 1851.0,1207.6 1853.0,1207.8 1855.0,1207.8 1857.0,1207.9 1859.0,1207.3 1861.0,1207.2 1863.0,1207.9 1865.0,1207.4 1867.0,1208.0 1869.0,1207.7 1871.0,1207.5 1873.0,1207.2 1875.1,1207.9 1877.1,1207.8 1879.1,1207.7 1881.1,1208.3 1883.1,1207.7 1885.1,1208.0 1887.1,1207.6 1889.1,1208.2 1891.1,1208.5 1893.1,1207.7 1895.1,1207.6 1897.1,1207.9 1899.1,1207.4 1901.1,1207.8 1903.1,1208.0 1905.1,1207.6 1907.1,1208.3 1909.1,1208.0 1911.1,1207.7 1913.1,1207.4 1915.1,1207.8 1917.1,1207.6 1919.1,1208.0 1921.1,1207.6 1923.1,1207.1 1925.1,1208.0 1927.1,1206.9 1929.1,1208.0 1931.1,1207.7 1933.1,1207.7 1935.1,1207.4 1937.1,1208.1 1939.1,1157.1 1939.8,1123.8 1941.1,1185.5 1943.1,1203.5 1944.0,1199.3 1945.1,1204.2 1947.1,1207.6 1949.1,1207.4 1951.1,1207.6 1953.1,1207.1 1955.1,1208.2 1957.1,1207.9 1959.1,1209.0 1961.1,1207.4 1963.1,1207.9 1963.3,1215.8 524.3,1215.8" fill="#93A8C6"/><polygon points="524.3,1213.9 526.3,1213.9 528.3,1213.9 530.3,1213.9 532.3,1213.9 534.3,1213.9 536.3,1213.9 538.3,1213.9 540.3,1213.9 542.3,1213.9 544.3,1213.9 545.2,1213.9 546.3,1213.9 548.3,1213.9 550.3,1213.9 552.3,1213.9 554.3,1213.9 556.3,1213.9 558.3,1213.9 560.3,1213.9 562.3,1213.9 564.3,1213.9 566.3,1213.9 568.3,1213.9 570.3,1213.9 572.3,1213.9 574.3,1213.9 576.3,1213.9 578.3,1213.9 580.3,1213.9 582.3,1213.9 584.3,1213.9 586.3,1213.9 588.3,1213.9 590.3,1213.9 592.3,1213.9 594.3,1213.9 596.3,1213.9 598.3,1213.9 600.3,1213.9 602.3,1213.9 604.3,1213.9 606.3,1213.9 608.3,1213.9 610.3,1213.9 612.3,1213.9 614.4,1213.9 616.4,1213.4 618.4,1211.4 620.4,1209.1 620.8,1209.0 622.4,1210.1 624.4,1212.7 626.4,1213.8 628.4,1213.9 630.4,1213.5 632.4,1211.1 632.9,1210.8 634.4,1212.3 636.4,1213.9 638.4,1213.9 640.4,1213.9 642.4,1213.9 644.4,1213.9 646.4,1213.9 648.4,1213.9 650.4,1213.9 652.4,1213.9 654.4,1213.9 656.4,1213.9 658.4,1213.9 660.4,1213.9 662.4,1213.9 664.4,1213.9 666.4,1213.9 668.4,1213.9 670.4,1213.9 672.4,1213.9 674.4,1213.9 676.4,1213.9 678.4,1213.9 680.4,1213.9 682.4,1213.9 684.4,1213.9 686.4,1213.9 688.4,1213.9 690.4,1213.9 692.4,1213.9 694.4,1213.9 696.4,1213.9 698.4,1213.9 700.4,1213.9 702.4,1213.9 704.4,1213.9 706.4,1213.9 708.4,1213.9 710.4,1213.9 712.4,1213.9 714.4,1213.9 716.4,1213.9 718.4,1213.9 720.4,1213.9 722.4,1213.9 724.4,1213.9 726.4,1213.9 728.4,1213.9 730.4,1213.9 732.4,1213.9 734.4,1213.9 736.4,1213.9 738.4,1213.9 740.4,1213.9 742.4,1213.9 744.4,1213.9 746.4,1213.9 748.4,1213.9 750.4,1213.9 752.4,1213.9 754.4,1213.9 756.4,1213.9 758.4,1213.9 760.4,1213.9 762.4,1213.9 764.4,1213.9 766.4,1213.9 768.4,1213.9 770.4,1213.9 772.4,1213.9 774.4,1213.9 776.4,1213.9 778.4,1213.9 780.4,1213.9 782.4,1213.9 784.4,1213.9 786.4,1213.9 788.4,1213.9 790.4,1213.9 792.4,1213.9 794.5,1213.9 796.5,1213.9 798.5,1213.9 800.5,1213.9 802.5,1213.9 804.5,1213.9 806.5,1213.9 808.5,1213.9 810.5,1213.9 812.5,1213.9 814.5,1213.9 814.8,1213.9 816.5,1213.9 818.5,1213.9 820.5,1213.9 822.5,1213.9 824.5,1213.9 826.5,1213.9 828.5,1213.9 830.5,1213.9 832.5,1213.9 834.5,1213.9 836.5,1213.9 838.5,1213.9 840.5,1213.9 842.5,1213.9 844.5,1213.9 846.5,1213.9 848.5,1213.9 850.5,1213.9 852.5,1213.9 854.5,1213.9 856.5,1213.9 858.5,1213.9 860.5,1213.9 862.5,1213.9 864.5,1213.9 866.5,1213.9 868.5,1213.9 870.5,1213.9 872.5,1213.9 874.5,1213.9 876.5,1213.9 878.5,1213.9 880.5,1213.9 882.5,1213.9 884.5,1213.9 886.5,1213.9 888.5,1213.9 890.5,1213.9 892.5,1213.9 894.5,1213.9 896.5,1213.9 898.5,1213.9 900.5,1213.9 902.5,1213.9 904.5,1213.9 906.5,1213.9 908.5,1213.9 910.5,1213.9 912.5,1213.9 914.5,1213.9 916.5,1213.9 918.5,1213.9 920.5,1213.9 922.5,1213.9 924.5,1213.9 926.5,1213.9 928.5,1213.9 930.5,1213.9 932.5,1213.9 934.5,1213.9 936.5,1213.9 938.5,1213.9 940.5,1213.9 942.5,1213.9 944.5,1213.9 946.5,1213.9 948.5,1213.9 950.5,1213.9 952.5,1213.9 954.5,1213.9 956.5,1213.9 958.5,1213.9 960.5,1213.9 962.5,1213.9 964.5,1213.9 966.5,1213.9 968.5,1213.9 970.5,1213.9 972.5,1213.9 974.6,1213.9 976.6,1213.9 978.6,1213.9 980.6,1213.9 982.6,1213.9 984.6,1213.9 986.6,1213.9 988.6,1213.9 990.6,1213.9 992.6,1213.9 994.6,1213.9 996.6,1213.9 998.6,1213.9 1000.6,1213.9 1002.6,1213.9 1004.6,1213.9 1006.6,1213.9 1008.6,1213.9 1010.6,1213.9 1012.6,1213.9 1014.6,1213.9 1016.6,1213.9 1018.6,1213.9 1020.6,1213.9 1022.6,1213.9 1024.6,1213.9 1026.6,1213.9 1028.6,1213.9 1030.6,1213.9 1032.6,1213.9 1034.6,1213.9 1036.6,1213.9 1038.6,1213.9 1040.6,1213.9 1042.6,1213.9 1044.6,1213.9 1046.6,1213.9 1048.6,1213.9 1050.6,1213.9 1052.6,1213.9 1054.6,1213.9 1056.6,1213.9 1058.6,1213.9 1060.6,1213.9 1062.6,1213.9 1064.0,1213.9 1064.6,1213.9 1065.8,1213.9 1066.6,1213.8 1068.6,1213.1 1070.0,1210.7 1070.6,1210.3 1072.6,1210.1 1073.0,1210.3 1074.6,1211.4 1076.6,1212.2 1078.6,1212.4 1080.6,1212.4 1082.6,1212.4 1084.6,1212.4 1086.6,1212.4 1088.6,1212.4 1090.6,1212.4 1092.6,1212.4 1094.6,1212.4 1096.6,1212.4 1097.0,1212.4 1098.6,1212.4 1100.6,1212.4 1102.6,1212.4 1104.6,1212.4 1106.6,1212.4 1108.6,1212.4 1110.6,1212.4 1112.6,1212.4 1114.6,1212.4 1116.6,1212.4 1118.6,1212.4 1120.6,1212.4 1122.6,1212.4 1124.6,1212.4 1126.6,1212.4 1128.6,1212.4 1130.6,1212.4 1132.6,1212.4 1134.6,1212.4 1136.6,1212.4 1138.6,1212.4 1140.6,1212.4 1142.6,1212.4 1144.6,1212.4 1146.6,1211.4 1148.5,1201.5 1148.6,1201.7 1150.6,1212.0 1150.9,1212.2 1152.6,1213.9 1154.7,1213.9 1156.7,1213.9 1158.7,1213.9 1160.7,1213.9 1162.7,1213.9 1164.7,1213.9 1166.7,1213.9 1168.7,1213.9 1170.7,1213.9 1172.7,1213.9 1174.7,1213.9 1176.7,1213.9 1178.7,1213.9 1180.7,1213.9 1182.7,1213.9 1184.7,1213.9 1186.7,1213.9 1188.7,1213.9 1190.7,1213.9 1192.7,1213.9 1194.7,1213.9 1196.7,1213.9 1198.7,1213.9 1200.7,1213.9 1202.7,1213.9 1204.7,1213.9 1206.7,1213.9 1208.7,1213.9 1210.7,1213.9 1212.7,1213.9 1214.7,1213.9 1216.7,1213.9 1218.7,1213.9 1220.7,1213.9 1222.7,1213.9 1224.7,1213.9 1226.7,1213.9 1228.7,1213.9 1230.7,1213.9 1232.7,1213.9 1234.7,1213.9 1236.7,1213.9 1238.7,1213.9 1240.7,1213.9 1242.7,1213.9 1244.7,1213.9 1246.7,1213.9 1248.7,1213.9 1250.7,1213.9 1252.7,1213.9 1254.7,1213.9 1256.7,1213.9 1258.7,1213.9 1260.7,1213.9 1262.7,1213.9 1264.7,1213.9 1266.7,1213.9 1268.7,1213.9 1270.7,1213.9 1272.7,1213.9 1274.7,1213.9 1276.7,1213.9 1278.7,1213.9 1280.7,1213.9 1282.7,1213.9 1284.7,1213.9 1286.7,1213.9 1288.7,1213.9 1290.7,1213.9 1292.7,1213.9 1294.7,1213.9 1296.7,1213.9 1298.7,1213.9 1300.7,1213.9 1302.7,1213.9 1304.7,1213.9 1306.7,1213.9 1308.7,1213.9 1310.7,1213.9 1312.7,1213.9 1314.7,1213.9 1316.7,1213.9 1318.7,1213.9 1320.7,1213.9 1322.7,1213.9 1324.7,1213.9 1326.7,1213.9 1328.7,1213.9 1330.7,1213.9 1332.7,1213.9 1334.8,1213.9 1336.8,1213.9 1338.8,1213.9 1340.8,1213.9 1342.8,1213.9 1344.8,1213.9 1346.8,1213.9 1348.8,1213.9 1350.8,1213.9 1352.8,1213.9 1354.8,1213.9 1356.8,1213.9 1358.8,1213.9 1360.8,1213.9 1362.8,1213.9 1364.8,1213.9 1366.8,1213.9 1368.8,1213.9 1370.8,1213.9 1372.8,1213.9 1374.8,1213.9 1376.8,1213.9 1378.8,1213.9 1380.8,1213.9 1382.8,1213.9 1384.8,1213.9 1386.8,1213.9 1388.8,1213.9 1390.8,1213.9 1392.8,1213.9 1394.8,1213.9 1396.8,1213.9 1398.8,1213.9 1400.8,1213.9 1402.8,1213.9 1404.8,1213.9 1406.8,1213.9 1408.8,1213.9 1410.8,1213.9 1412.8,1213.9 1414.8,1213.9 1416.8,1213.9 1418.8,1213.9 1420.8,1213.9 1422.8,1213.9 1424.8,1213.9 1426.8,1213.9 1428.8,1213.9 1430.8,1213.9 1432.8,1213.9 1434.8,1213.9 1436.8,1213.9 1438.8,1213.9 1440.8,1213.9 1442.8,1213.9 1444.8,1213.9 1446.8,1213.9 1448.8,1213.9 1450.8,1213.9 1452.8,1213.9 1454.8,1213.9 1456.8,1213.9 1458.8,1213.9 1460.8,1213.9 1462.8,1213.9 1464.8,1213.9 1466.8,1213.9 1468.8,1213.9 1470.8,1213.9 1472.8,1213.9 1474.8,1213.9 1476.8,1213.9 1478.8,1213.9 1480.8,1213.9 1482.8,1213.9 1484.8,1213.9 1486.8,1213.9 1488.8,1213.9 1490.8,1213.9 1492.8,1213.9 1494.8,1213.9 1496.8,1213.9 1498.8,1213.9 1500.8,1213.9 1502.8,1213.9 1504.8,1213.9 1506.8,1213.9 1508.8,1213.9 1510.8,1213.9 1512.8,1213.9 1514.9,1213.9 1516.9,1213.9 1518.9,1213.9 1520.9,1213.9 1522.9,1213.9 1524.9,1213.9 1526.9,1213.9 1528.9,1213.9 1530.9,1213.9 1532.9,1213.9 1534.9,1213.9 1536.9,1213.9 1538.9,1213.9 1540.9,1213.9 1542.9,1213.9 1544.9,1213.9 1546.9,1213.9 1548.9,1213.9 1550.9,1213.9 1552.9,1213.9 1554.9,1213.9 1556.9,1213.9 1558.9,1213.9 1560.9,1213.9 1562.9,1213.9 1564.9,1213.9 1566.9,1213.9 1568.9,1213.9 1570.9,1213.9 1572.9,1213.9 1574.9,1213.9 1576.9,1213.9 1578.9,1213.9 1580.9,1213.9 1582.9,1213.9 1584.9,1213.9 1586.9,1213.9 1588.9,1213.9 1590.9,1213.9 1592.9,1213.9 1594.9,1213.9 1596.9,1213.9 1598.9,1213.9 1600.9,1213.9 1602.9,1213.9 1604.9,1213.9 1606.9,1213.9 1608.9,1213.9 1610.9,1213.9 1612.9,1213.9 1614.9,1213.9 1616.9,1213.9 1618.9,1213.9 1620.9,1213.9 1622.9,1213.9 1624.9,1213.9 1626.9,1213.9 1628.9,1213.9 1630.9,1213.9 1632.9,1213.9 1634.9,1213.9 1636.9,1213.9 1638.9,1213.9 1640.9,1213.9 1642.9,1213.9 1644.9,1213.9 1646.9,1213.9 1648.0,1213.9 1648.9,1213.9 1650.9,1213.9 1652.9,1213.9 1654.9,1213.9 1656.9,1213.9 1658.9,1213.9 1660.9,1213.9 1662.9,1213.9 1664.9,1213.9 1666.9,1213.9 1668.9,1213.9 1670.9,1213.9 1672.9,1213.9 1674.9,1213.9 1676.9,1213.9 1678.9,1213.9 1680.9,1213.9 1682.9,1213.9 1684.9,1213.9 1686.9,1213.9 1688.9,1213.9 1690.9,1213.9 1692.9,1213.9 1695.0,1213.9 1697.0,1213.9 1699.0,1213.9 1701.0,1213.9 1703.0,1213.9 1705.0,1213.9 1707.0,1213.9 1709.0,1213.9 1711.0,1213.9 1713.0,1213.9 1715.0,1213.9 1717.0,1213.9 1719.0,1213.9 1721.0,1213.9 1723.0,1213.9 1725.0,1213.9 1727.0,1213.9 1729.0,1213.9 1731.0,1213.9 1733.0,1213.9 1735.0,1213.9 1737.0,1213.9 1739.0,1213.9 1741.0,1213.9 1743.0,1213.9 1745.0,1213.9 1747.0,1213.9 1749.0,1213.9 1751.0,1213.9 1753.0,1213.9 1755.0,1213.9 1757.0,1213.9 1759.0,1213.9 1761.0,1213.9 1763.0,1213.9 1765.0,1213.9 1767.0,1213.9 1769.0,1213.9 1771.0,1213.9 1773.0,1213.9 1775.0,1213.9 1777.0,1213.9 1779.0,1213.9 1781.0,1213.9 1783.0,1213.9 1785.0,1213.9 1787.0,1213.9 1789.0,1213.9 1791.0,1213.9 1791.8,1213.9 1793.0,1213.9 1795.0,1213.9 1797.0,1213.9 1799.0,1213.9 1801.0,1213.9 1803.0,1213.9 1805.0,1213.9 1807.0,1213.9 1808.5,1213.9 1809.0,1213.9 1811.0,1213.9 1813.0,1213.9 1815.0,1213.9 1817.0,1213.9 1819.0,1213.9 1821.0,1213.9 1823.0,1213.9 1825.0,1213.9 1827.0,1213.9 1829.0,1213.9 1831.0,1213.9 1833.0,1213.9 1835.0,1213.9 1837.0,1213.9 1839.0,1213.9 1841.0,1213.9 1843.0,1213.9 1845.0,1213.9 1847.0,1213.9 1849.0,1213.9 1851.0,1213.9 1853.0,1213.9 1855.0,1213.9 1857.0,1213.9 1859.0,1213.9 1861.0,1213.9 1863.0,1213.9 1865.0,1213.9 1867.0,1213.9 1869.0,1213.9 1871.0,1213.9 1873.0,1213.9 1875.1,1213.9 1877.1,1213.9 1879.1,1213.9 1881.1,1213.9 1883.1,1213.9 1885.1,1213.9 1887.1,1213.9 1889.1,1213.9 1891.1,1213.9 1893.1,1213.9 1895.1,1213.9 1897.1,1213.9 1899.1,1213.9 1901.1,1213.9 1903.1,1213.9 1905.1,1213.9 1907.1,1213.9 1909.1,1213.9 1911.1,1213.9 1913.1,1213.9 1915.1,1213.9 1917.1,1213.9 1919.1,1213.9 1921.1,1213.9 1923.1,1213.9 1925.1,1213.9 1927.1,1213.9 1929.1,1213.9 1931.1,1213.9 1933.1,1213.9 1935.1,1213.9 1937.1,1213.9 1939.1,1207.7 1939.8,1204.6 1941.1,1210.8 1943.1,1213.9 1944.0,1213.9 1945.1,1213.9 1947.1,1213.9 1949.1,1213.9 1951.1,1213.9 1953.1,1213.9 1955.1,1213.9 1957.1,1213.9 1959.1,1213.9 1961.1,1213.9 1963.1,1213.9 1963.3,1215.8 524.3,1215.8" fill="#F5DDA0"/><line x1="524.3" y1="1153.8" x2="1963.3" y2="1153.8" stroke="rgba(36,41,46,0.13)" stroke-width="1.5"/><line x1="524.3" y1="1091.8" x2="1963.3" y2="1091.8" stroke="rgba(36,41,46,0.13)" stroke-width="1.5"/><line x1="524.3" y1="1029.8" x2="1963.3" y2="1029.8" stroke="rgba(36,41,46,0.13)" stroke-width="1.5"/><line x1="524.3" y1="967.8" x2="1963.3" y2="967.8" stroke="rgba(36,41,46,0.13)" stroke-width="1.5"/><line x1="556.2" y1="905.8" x2="556.2" y2="1223.3" stroke="rgba(36,41,46,0.13)" stroke-width="1.5"/><line x1="676.1" y1="905.8" x2="676.1" y2="1223.3" stroke="rgba(36,41,46,0.13)" stroke-width="1.5"/><line x1="796.0" y1="905.8" x2="796.0" y2="1223.3" stroke="rgba(36,41,46,0.13)" stroke-width="1.5"/><line x1="915.9" y1="905.8" x2="915.9" y2="1223.3" stroke="rgba(36,41,46,0.13)" stroke-width="1.5"/><line x1="1035.8" y1="905.8" x2="1035.8" y2="1223.3" stroke="rgba(36,41,46,0.13)" stroke-width="1.5"/><line x1="1155.7" y1="905.8" x2="1155.7" y2="1223.3" stroke="rgba(36,41,46,0.13)" stroke-width="1.5"/><line x1="1275.6" y1="905.8" x2="1275.6" y2="1223.3" stroke="rgba(36,41,46,0.13)" stroke-width="1.5"/><line x1="1395.5" y1="905.8" x2="1395.5" y2="1223.3" stroke="rgba(36,41,46,0.13)" stroke-width="1.5"/><line x1="1515.4" y1="905.8" x2="1515.4" y2="1223.3" stroke="rgba(36,41,46,0.13)" stroke-width="1.5"/><line x1="1635.3" y1="905.8" x2="1635.3" y2="1223.3" stroke="rgba(36,41,46,0.13)" stroke-width="1.5"/><line x1="1755.2" y1="905.8" x2="1755.2" y2="1223.3" stroke="rgba(36,41,46,0.13)" stroke-width="1.5"/><line x1="1875.1" y1="905.8" x2="1875.1" y2="1223.3" stroke="rgba(36,41,46,0.13)" stroke-width="1.5"/><line x1="524.3" y1="905.8" x2="1963.3" y2="905.8" stroke="#0B2452" stroke-width="2.6"/><polyline points="524.3,1213.9 526.3,1213.9 528.3,1213.9 530.3,1213.9 532.3,1213.9 534.3,1213.9 536.3,1213.9 538.3,1213.9 540.3,1213.9 542.3,1213.9 544.3,1213.9 545.2,1213.9 546.3,1213.9 548.3,1213.9 550.3,1213.9 552.3,1213.9 554.3,1213.9 556.3,1213.9 558.3,1213.9 560.3,1213.9 562.3,1213.9 564.3,1213.9 566.3,1213.9 568.3,1213.9 570.3,1213.9 572.3,1213.9 574.3,1213.9 576.3,1213.9 578.3,1213.9 580.3,1213.9 582.3,1213.9 584.3,1213.9 586.3,1213.9 588.3,1213.9 590.3,1213.9 592.3,1213.9 594.3,1213.9 596.3,1213.9 598.3,1213.9 600.3,1213.9 602.3,1213.9 604.3,1213.9 606.3,1213.9 608.3,1213.9 610.3,1213.9 612.3,1213.9 614.4,1213.9 616.4,1213.4 618.4,1211.4 620.4,1209.1 620.8,1209.0 622.4,1210.1 624.4,1212.7 626.4,1213.8 628.4,1213.9 630.4,1213.5 632.4,1211.1 632.9,1210.8 634.4,1212.3 636.4,1213.9 638.4,1213.9 640.4,1213.9 642.4,1213.9 644.4,1213.9 646.4,1213.9 648.4,1213.9 650.4,1213.9 652.4,1213.9 654.4,1213.9 656.4,1213.9 658.4,1213.9 660.4,1213.9 662.4,1213.9 664.4,1213.9 666.4,1213.9 668.4,1213.9 670.4,1213.9 672.4,1213.9 674.4,1213.9 676.4,1213.9 678.4,1213.9 680.4,1213.9 682.4,1213.9 684.4,1213.9 686.4,1213.9 688.4,1213.9 690.4,1213.9 692.4,1213.9 694.4,1213.9 696.4,1213.9 698.4,1213.9 700.4,1213.9 702.4,1213.9 704.4,1213.9 706.4,1213.9 708.4,1213.9 710.4,1213.9 712.4,1213.9 714.4,1213.9 716.4,1213.9 718.4,1213.9 720.4,1213.9 722.4,1213.9 724.4,1213.9 726.4,1213.9 728.4,1213.9 730.4,1213.9 732.4,1213.9 734.4,1213.9 736.4,1213.9 738.4,1213.9 740.4,1213.9 742.4,1213.9 744.4,1213.9 746.4,1213.9 748.4,1213.9 750.4,1213.9 752.4,1213.9 754.4,1213.9 756.4,1213.9 758.4,1213.9 760.4,1213.9 762.4,1213.9 764.4,1213.9 766.4,1213.9 768.4,1213.9 770.4,1213.9 772.4,1213.9 774.4,1213.9 776.4,1213.9 778.4,1213.9 780.4,1213.9 782.4,1213.9 784.4,1213.9 786.4,1213.9 788.4,1213.9 790.4,1213.9 792.4,1213.9 794.5,1213.9 796.5,1213.9 798.5,1213.9 800.5,1213.9 802.5,1213.9 804.5,1213.9 806.5,1213.9 808.5,1213.9 810.5,1213.9 812.5,1213.9 814.5,1213.9 814.8,1213.9 816.5,1213.9 818.5,1213.9 820.5,1213.9 822.5,1213.9 824.5,1213.9 826.5,1213.9 828.5,1213.9 830.5,1213.9 832.5,1213.9 834.5,1213.9 836.5,1213.9 838.5,1213.9 840.5,1213.9 842.5,1213.9 844.5,1213.9 846.5,1213.9 848.5,1213.9 850.5,1213.9 852.5,1213.9 854.5,1213.9 856.5,1213.9 858.5,1213.9 860.5,1213.9 862.5,1213.9 864.5,1213.9 866.5,1213.9 868.5,1213.9 870.5,1213.9 872.5,1213.9 874.5,1213.9 876.5,1213.9 878.5,1213.9 880.5,1213.9 882.5,1213.9 884.5,1213.9 886.5,1213.9 888.5,1213.9 890.5,1213.9 892.5,1213.9 894.5,1213.9 896.5,1213.9 898.5,1213.9 900.5,1213.9 902.5,1213.9 904.5,1213.9 906.5,1213.9 908.5,1213.9 910.5,1213.9 912.5,1213.9 914.5,1213.9 916.5,1213.9 918.5,1213.9 920.5,1213.9 922.5,1213.9 924.5,1213.9 926.5,1213.9 928.5,1213.9 930.5,1213.9 932.5,1213.9 934.5,1213.9 936.5,1213.9 938.5,1213.9 940.5,1213.9 942.5,1213.9 944.5,1213.9 946.5,1213.9 948.5,1213.9 950.5,1213.9 952.5,1213.9 954.5,1213.9 956.5,1213.9 958.5,1213.9 960.5,1213.9 962.5,1213.9 964.5,1213.9 966.5,1213.9 968.5,1213.9 970.5,1213.9 972.5,1213.9 974.6,1213.9 976.6,1213.9 978.6,1213.9 980.6,1213.9 982.6,1213.9 984.6,1213.9 986.6,1213.9 988.6,1213.9 990.6,1213.9 992.6,1213.9 994.6,1213.9 996.6,1213.9 998.6,1213.9 1000.6,1213.9 1002.6,1213.9 1004.6,1213.9 1006.6,1213.9 1008.6,1213.9 1010.6,1213.9 1012.6,1213.9 1014.6,1213.9 1016.6,1213.9 1018.6,1213.9 1020.6,1213.9 1022.6,1213.9 1024.6,1213.9 1026.6,1213.9 1028.6,1213.9 1030.6,1213.9 1032.6,1213.9 1034.6,1213.9 1036.6,1213.9 1038.6,1213.9 1040.6,1213.9 1042.6,1213.9 1044.6,1213.9 1046.6,1213.9 1048.6,1213.9 1050.6,1213.9 1052.6,1213.9 1054.6,1213.9 1056.6,1213.9 1058.6,1213.9 1060.6,1213.9 1062.6,1213.9 1064.0,1213.9 1064.6,1213.9 1065.8,1213.9 1066.6,1213.8 1068.6,1213.1 1070.0,1210.7 1070.6,1210.3 1072.6,1210.1 1073.0,1210.3 1074.6,1211.4 1076.6,1212.2 1078.6,1212.4 1080.6,1212.4 1082.6,1212.4 1084.6,1212.4 1086.6,1212.4 1088.6,1212.4 1090.6,1212.4 1092.6,1212.4 1094.6,1212.4 1096.6,1212.4 1097.0,1212.4 1098.6,1212.4 1100.6,1212.4 1102.6,1212.4 1104.6,1212.4 1106.6,1212.4 1108.6,1212.4 1110.6,1212.4 1112.6,1212.4 1114.6,1212.4 1116.6,1212.4 1118.6,1212.4 1120.6,1212.4 1122.6,1212.4 1124.6,1212.4 1126.6,1212.4 1128.6,1212.4 1130.6,1212.4 1132.6,1212.4 1134.6,1212.4 1136.6,1212.4 1138.6,1212.4 1140.6,1212.4 1142.6,1212.4 1144.6,1212.4 1146.6,1211.4 1148.5,1201.5 1148.6,1201.7 1150.6,1212.0 1150.9,1212.2 1152.6,1213.9 1154.7,1213.9 1156.7,1213.9 1158.7,1213.9 1160.7,1213.9 1162.7,1213.9 1164.7,1213.9 1166.7,1213.9 1168.7,1213.9 1170.7,1213.9 1172.7,1213.9 1174.7,1213.9 1176.7,1213.9 1178.7,1213.9 1180.7,1213.9 1182.7,1213.9 1184.7,1213.9 1186.7,1213.9 1188.7,1213.9 1190.7,1213.9 1192.7,1213.9 1194.7,1213.9 1196.7,1213.9 1198.7,1213.9 1200.7,1213.9 1202.7,1213.9 1204.7,1213.9 1206.7,1213.9 1208.7,1213.9 1210.7,1213.9 1212.7,1213.9 1214.7,1213.9 1216.7,1213.9 1218.7,1213.9 1220.7,1213.9 1222.7,1213.9 1224.7,1213.9 1226.7,1213.9 1228.7,1213.9 1230.7,1213.9 1232.7,1213.9 1234.7,1213.9 1236.7,1213.9 1238.7,1213.9 1240.7,1213.9 1242.7,1213.9 1244.7,1213.9 1246.7,1213.9 1248.7,1213.9 1250.7,1213.9 1252.7,1213.9 1254.7,1213.9 1256.7,1213.9 1258.7,1213.9 1260.7,1213.9 1262.7,1213.9 1264.7,1213.9 1266.7,1213.9 1268.7,1213.9 1270.7,1213.9 1272.7,1213.9 1274.7,1213.9 1276.7,1213.9 1278.7,1213.9 1280.7,1213.9 1282.7,1213.9 1284.7,1213.9 1286.7,1213.9 1288.7,1213.9 1290.7,1213.9 1292.7,1213.9 1294.7,1213.9 1296.7,1213.9 1298.7,1213.9 1300.7,1213.9 1302.7,1213.9 1304.7,1213.9 1306.7,1213.9 1308.7,1213.9 1310.7,1213.9 1312.7,1213.9 1314.7,1213.9 1316.7,1213.9 1318.7,1213.9 1320.7,1213.9 1322.7,1213.9 1324.7,1213.9 1326.7,1213.9 1328.7,1213.9 1330.7,1213.9 1332.7,1213.9 1334.8,1213.9 1336.8,1213.9 1338.8,1213.9 1340.8,1213.9 1342.8,1213.9 1344.8,1213.9 1346.8,1213.9 1348.8,1213.9 1350.8,1213.9 1352.8,1213.9 1354.8,1213.9 1356.8,1213.9 1358.8,1213.9 1360.8,1213.9 1362.8,1213.9 1364.8,1213.9 1366.8,1213.9 1368.8,1213.9 1370.8,1213.9 1372.8,1213.9 1374.8,1213.9 1376.8,1213.9 1378.8,1213.9 1380.8,1213.9 1382.8,1213.9 1384.8,1213.9 1386.8,1213.9 1388.8,1213.9 1390.8,1213.9 1392.8,1213.9 1394.8,1213.9 1396.8,1213.9 1398.8,1213.9 1400.8,1213.9 1402.8,1213.9 1404.8,1213.9 1406.8,1213.9 1408.8,1213.9 1410.8,1213.9 1412.8,1213.9 1414.8,1213.9 1416.8,1213.9 1418.8,1213.9 1420.8,1213.9 1422.8,1213.9 1424.8,1213.9 1426.8,1213.9 1428.8,1213.9 1430.8,1213.9 1432.8,1213.9 1434.8,1213.9 1436.8,1213.9 1438.8,1213.9 1440.8,1213.9 1442.8,1213.9 1444.8,1213.9 1446.8,1213.9 1448.8,1213.9 1450.8,1213.9 1452.8,1213.9 1454.8,1213.9 1456.8,1213.9 1458.8,1213.9 1460.8,1213.9 1462.8,1213.9 1464.8,1213.9 1466.8,1213.9 1468.8,1213.9 1470.8,1213.9 1472.8,1213.9 1474.8,1213.9 1476.8,1213.9 1478.8,1213.9 1480.8,1213.9 1482.8,1213.9 1484.8,1213.9 1486.8,1213.9 1488.8,1213.9 1490.8,1213.9 1492.8,1213.9 1494.8,1213.9 1496.8,1213.9 1498.8,1213.9 1500.8,1213.9 1502.8,1213.9 1504.8,1213.9 1506.8,1213.9 1508.8,1213.9 1510.8,1213.9 1512.8,1213.9 1514.9,1213.9 1516.9,1213.9 1518.9,1213.9 1520.9,1213.9 1522.9,1213.9 1524.9,1213.9 1526.9,1213.9 1528.9,1213.9 1530.9,1213.9 1532.9,1213.9 1534.9,1213.9 1536.9,1213.9 1538.9,1213.9 1540.9,1213.9 1542.9,1213.9 1544.9,1213.9 1546.9,1213.9 1548.9,1213.9 1550.9,1213.9 1552.9,1213.9 1554.9,1213.9 1556.9,1213.9 1558.9,1213.9 1560.9,1213.9 1562.9,1213.9 1564.9,1213.9 1566.9,1213.9 1568.9,1213.9 1570.9,1213.9 1572.9,1213.9 1574.9,1213.9 1576.9,1213.9 1578.9,1213.9 1580.9,1213.9 1582.9,1213.9 1584.9,1213.9 1586.9,1213.9 1588.9,1213.9 1590.9,1213.9 1592.9,1213.9 1594.9,1213.9 1596.9,1213.9 1598.9,1213.9 1600.9,1213.9 1602.9,1213.9 1604.9,1213.9 1606.9,1213.9 1608.9,1213.9 1610.9,1213.9 1612.9,1213.9 1614.9,1213.9 1616.9,1213.9 1618.9,1213.9 1620.9,1213.9 1622.9,1213.9 1624.9,1213.9 1626.9,1213.9 1628.9,1213.9 1630.9,1213.9 1632.9,1213.9 1634.9,1213.9 1636.9,1213.9 1638.9,1213.9 1640.9,1213.9 1642.9,1213.9 1644.9,1213.9 1646.9,1213.9 1648.0,1213.9 1648.9,1213.9 1650.9,1213.9 1652.9,1213.9 1654.9,1213.9 1656.9,1213.9 1658.9,1213.9 1660.9,1213.9 1662.9,1213.9 1664.9,1213.9 1666.9,1213.9 1668.9,1213.9 1670.9,1213.9 1672.9,1213.9 1674.9,1213.9 1676.9,1213.9 1678.9,1213.9 1680.9,1213.9 1682.9,1213.9 1684.9,1213.9 1686.9,1213.9 1688.9,1213.9 1690.9,1213.9 1692.9,1213.9 1695.0,1213.9 1697.0,1213.9 1699.0,1213.9 1701.0,1213.9 1703.0,1213.9 1705.0,1213.9 1707.0,1213.9 1709.0,1213.9 1711.0,1213.9 1713.0,1213.9 1715.0,1213.9 1717.0,1213.9 1719.0,1213.9 1721.0,1213.9 1723.0,1213.9 1725.0,1213.9 1727.0,1213.9 1729.0,1213.9 1731.0,1213.9 1733.0,1213.9 1735.0,1213.9 1737.0,1213.9 1739.0,1213.9 1741.0,1213.9 1743.0,1213.9 1745.0,1213.9 1747.0,1213.9 1749.0,1213.9 1751.0,1213.9 1753.0,1213.9 1755.0,1213.9 1757.0,1213.9 1759.0,1213.9 1761.0,1213.9 1763.0,1213.9 1765.0,1213.9 1767.0,1213.9 1769.0,1213.9 1771.0,1213.9 1773.0,1213.9 1775.0,1213.9 1777.0,1213.9 1779.0,1213.9 1781.0,1213.9 1783.0,1213.9 1785.0,1213.9 1787.0,1213.9 1789.0,1213.9 1791.0,1213.9 1791.8,1213.9 1793.0,1213.9 1795.0,1213.9 1797.0,1213.9 1799.0,1213.9 1801.0,1213.9 1803.0,1213.9 1805.0,1213.9 1807.0,1213.9 1808.5,1213.9 1809.0,1213.9 1811.0,1213.9 1813.0,1213.9 1815.0,1213.9 1817.0,1213.9 1819.0,1213.9 1821.0,1213.9 1823.0,1213.9 1825.0,1213.9 1827.0,1213.9 1829.0,1213.9 1831.0,1213.9 1833.0,1213.9 1835.0,1213.9 1837.0,1213.9 1839.0,1213.9 1841.0,1213.9 1843.0,1213.9 1845.0,1213.9 1847.0,1213.9 1849.0,1213.9 1851.0,1213.9 1853.0,1213.9 1855.0,1213.9 1857.0,1213.9 1859.0,1213.9 1861.0,1213.9 1863.0,1213.9 1865.0,1213.9 1867.0,1213.9 1869.0,1213.9 1871.0,1213.9 1873.0,1213.9 1875.1,1213.9 1877.1,1213.9 1879.1,1213.9 1881.1,1213.9 1883.1,1213.9 1885.1,1213.9 1887.1,1213.9 1889.1,1213.9 1891.1,1213.9 1893.1,1213.9 1895.1,1213.9 1897.1,1213.9 1899.1,1213.9 1901.1,1213.9 1903.1,1213.9 1905.1,1213.9 1907.1,1213.9 1909.1,1213.9 1911.1,1213.9 1913.1,1213.9 1915.1,1213.9 1917.1,1213.9 1919.1,1213.9 1921.1,1213.9 1923.1,1213.9 1925.1,1213.9 1927.1,1213.9 1929.1,1213.9 1931.1,1213.9 1933.1,1213.9 1935.1,1213.9 1937.1,1213.9 1939.1,1207.7 1939.8,1204.6 1941.1,1210.8 1943.1,1213.9 1944.0,1213.9 1945.1,1213.9 1947.1,1213.9 1949.1,1213.9 1951.1,1213.9 1953.1,1213.9 1955.1,1213.9 1957.1,1213.9 1959.1,1213.9 1961.1,1213.9 1963.1,1213.9" fill="none" stroke="#E5AE2E" stroke-width="2.2"/><polyline points="524.3,1207.8 526.3,1207.5 528.3,1207.8 530.3,1207.9 532.3,1208.1 534.3,1207.8 536.3,1207.3 538.3,1207.6 540.3,1207.3 542.3,1206.8 544.3,1199.0 545.2,1196.5 546.3,1200.6 548.3,1206.8 550.3,1207.5 552.3,1207.6 554.3,1208.4 556.3,1208.4 558.3,1208.1 560.3,1207.9 562.3,1207.6 564.3,1207.8 566.3,1207.5 568.3,1208.0 570.3,1207.6 572.3,1207.6 574.3,1208.0 576.3,1207.1 578.3,1207.5 580.3,1207.3 582.3,1208.0 584.3,1208.0 586.3,1207.9 588.3,1207.8 590.3,1207.5 592.3,1207.6 594.3,1207.9 596.3,1208.1 598.3,1207.9 600.3,1207.3 602.3,1208.0 604.3,1207.6 606.3,1207.6 608.3,1208.3 610.3,1207.7 612.3,1207.3 614.4,1208.5 616.4,1207.4 618.4,1196.1 620.4,1163.8 620.8,1161.1 622.4,1180.5 624.4,1205.6 626.4,1207.4 628.4,1207.5 630.4,1206.7 632.4,1195.1 632.9,1193.7 634.4,1202.1 636.4,1208.1 638.4,1207.5 640.4,1208.0 642.4,1207.9 644.4,1208.2 646.4,1208.1 648.4,1207.9 650.4,1207.3 652.4,1208.5 654.4,1208.3 656.4,1207.7 658.4,1207.2 660.4,1207.5 662.4,1208.4 664.4,1208.7 666.4,1207.6 668.4,1208.0 670.4,1208.2 672.4,1207.4 674.4,1207.3 676.4,1207.7 678.4,1207.6 680.4,1207.6 682.4,1207.1 684.4,1207.5 686.4,1207.5 688.4,1207.5 690.4,1208.3 692.4,1207.3 694.4,1207.4 696.4,1207.5 698.4,1208.5 700.4,1208.0 702.4,1207.4 704.4,1208.4 706.4,1207.8 708.4,1207.4 710.4,1208.2 712.4,1207.1 714.4,1207.5 716.4,1207.8 718.4,1207.6 720.4,1207.5 722.4,1207.7 724.4,1207.3 726.4,1208.0 728.4,1207.9 730.4,1207.4 732.4,1207.7 734.4,1208.1 736.4,1207.3 738.4,1207.1 740.4,1207.5 742.4,1207.5 744.4,1206.5 746.4,1206.1 748.4,1206.0 750.4,1205.6 752.4,1207.0 754.4,1206.7 756.4,1208.0 758.4,1207.9 760.4,1207.5 762.4,1207.3 764.4,1207.4 766.4,1207.6 768.4,1207.7 770.4,1207.7 772.4,1207.5 774.4,1207.8 776.4,1207.6 778.4,1207.5 780.4,1207.7 782.4,1207.5 784.4,1207.5 786.4,1207.0 788.4,1207.6 790.4,1207.9 792.4,1207.9 794.5,1207.7 796.5,1207.4 798.5,1207.9 800.5,1207.6 802.5,1207.1 804.5,1208.7 806.5,1208.2 808.5,1207.6 810.5,1207.6 812.5,1206.3 814.5,1193.3 814.8,1192.0 816.5,1203.0 818.5,1207.9 820.5,1206.8 822.5,1207.6 824.5,1207.9 826.5,1207.8 828.5,1207.8 830.5,1207.8 832.5,1208.8 834.5,1207.9 836.5,1207.4 838.5,1208.2 840.5,1207.8 842.5,1207.4 844.5,1207.4 846.5,1207.2 848.5,1208.4 850.5,1207.9 852.5,1207.9 854.5,1207.5 856.5,1207.3 858.5,1208.7 860.5,1207.3 862.5,1208.3 864.5,1207.5 866.5,1208.3 868.5,1207.7 870.5,1207.3 872.5,1207.8 874.5,1207.7 876.5,1207.4 878.5,1207.7 880.5,1207.8 882.5,1207.2 884.5,1207.3 886.5,1207.8 888.5,1206.7 890.5,1208.2 892.5,1207.4 894.5,1207.7 896.5,1207.4 898.5,1206.8 900.5,1206.5 902.5,1206.0 904.5,1206.8 906.5,1207.0 908.5,1206.7 910.5,1207.6 912.5,1207.9 914.5,1208.2 916.5,1207.3 918.5,1207.5 920.5,1207.2 922.5,1208.1 924.5,1207.7 926.5,1208.2 928.5,1207.5 930.5,1207.1 932.5,1208.1 934.5,1207.2 936.5,1207.4 938.5,1207.8 940.5,1208.5 942.5,1207.2 944.5,1207.8 946.5,1208.0 948.5,1207.6 950.5,1207.6 952.5,1207.2 954.5,1208.1 956.5,1207.3 958.5,1207.2 960.5,1207.2 962.5,1207.8 964.5,1208.0 966.5,1207.4 968.5,1207.7 970.5,1207.7 972.5,1207.2 974.6,1207.8 976.6,1208.6 978.6,1207.9 980.6,1208.4 982.6,1207.4 984.6,1207.6 986.6,1208.0 988.6,1207.7 990.6,1207.4 992.6,1207.7 994.6,1207.2 996.6,1207.8 998.6,1207.4 1000.6,1207.2 1002.6,1207.1 1004.6,1208.0 1006.6,1207.4 1008.6,1208.4 1010.6,1208.1 1012.6,1208.5 1014.6,1207.3 1016.6,1208.2 1018.6,1207.7 1020.6,1207.8 1022.6,1207.8 1024.6,1208.0 1026.6,1207.7 1028.6,1207.1 1030.6,1207.7 1032.6,1207.5 1034.6,1207.4 1036.6,1207.8 1038.6,1208.2 1040.6,1207.9 1042.6,1207.3 1044.6,1208.4 1046.6,1208.0 1048.6,1207.4 1050.6,1207.4 1052.6,1207.7 1054.6,1207.4 1056.6,1207.7 1058.6,1208.2 1060.6,1208.3 1062.6,1208.0 1064.0,1185.4 1064.6,1185.4 1065.8,1197.2 1066.6,1197.2 1068.6,1197.2 1070.0,1165.1 1070.6,1162.7 1072.6,1151.6 1073.0,1151.1 1074.6,1160.0 1076.6,1166.6 1078.6,1166.8 1080.6,1166.2 1082.6,1166.5 1084.6,1166.5 1086.6,1166.6 1088.6,1166.1 1090.6,1166.3 1092.6,1166.6 1094.6,1166.0 1096.6,1154.8 1097.0,1154.0 1098.6,1163.7 1100.6,1166.3 1102.6,1167.0 1104.6,1166.0 1106.6,1166.3 1108.6,1167.2 1110.6,1165.8 1112.6,1166.4 1114.6,1166.1 1116.6,1166.4 1118.6,1166.6 1120.6,1167.2 1122.6,1166.1 1124.6,1166.5 1126.6,1166.6 1128.6,1166.3 1130.6,1166.5 1132.6,1166.2 1134.6,1166.7 1136.6,1166.5 1138.6,1167.5 1140.6,1166.7 1142.6,1166.2 1144.6,1165.9 1146.6,1164.9 1148.5,1147.0 1148.6,1146.5 1150.6,1165.9 1150.9,1165.8 1152.6,1208.1 1154.7,1206.7 1156.7,1207.3 1158.7,1207.5 1160.7,1208.7 1162.7,1207.5 1164.7,1207.6 1166.7,1207.1 1168.7,1207.6 1170.7,1207.8 1172.7,1207.5 1174.7,1208.5 1176.7,1207.4 1178.7,1207.6 1180.7,1208.0 1182.7,1207.2 1184.7,1207.1 1186.7,1208.3 1188.7,1208.0 1190.7,1207.6 1192.7,1207.7 1194.7,1207.9 1196.7,1208.1 1198.7,1207.0 1200.7,1207.4 1202.7,1208.2 1204.7,1208.2 1206.7,1207.1 1208.7,1207.4 1210.7,1207.1 1212.7,1207.4 1214.7,1208.1 1216.7,1207.6 1218.7,1208.5 1220.7,1208.0 1222.7,1207.8 1224.7,1207.5 1226.7,1208.0 1228.7,1207.8 1230.7,1207.6 1232.7,1207.6 1234.7,1207.5 1236.7,1207.7 1238.7,1207.9 1240.7,1207.4 1242.7,1207.7 1244.7,1208.0 1246.7,1208.0 1248.7,1207.7 1250.7,1207.8 1252.7,1207.7 1254.7,1207.7 1256.7,1207.7 1258.7,1207.8 1260.7,1208.2 1262.7,1207.6 1264.7,1207.3 1266.7,1207.6 1268.7,1207.8 1270.7,1207.6 1272.7,1208.1 1274.7,1208.4 1276.7,1207.7 1278.7,1208.1 1280.7,1207.5 1282.7,1208.1 1284.7,1208.7 1286.7,1208.1 1288.7,1207.2 1290.7,1207.9 1292.7,1208.2 1294.7,1208.0 1296.7,1207.5 1298.7,1207.6 1300.7,1207.7 1302.7,1207.2 1304.7,1207.5 1306.7,1207.7 1308.7,1207.5 1310.7,1207.1 1312.7,1207.4 1314.7,1207.4 1316.7,1208.1 1318.7,1207.8 1320.7,1207.5 1322.7,1207.9 1324.7,1207.3 1326.7,1207.5 1328.7,1207.4 1330.7,1207.8 1332.7,1206.8 1334.8,1207.3 1336.8,1207.8 1338.8,1207.7 1340.8,1206.8 1342.8,1207.9 1344.8,1207.4 1346.8,1207.4 1348.8,1207.7 1350.8,1208.2 1352.8,1207.7 1354.8,1207.6 1356.8,1207.3 1358.8,1207.4 1360.8,1207.7 1362.8,1207.4 1364.8,1207.5 1366.8,1207.7 1368.8,1207.7 1370.8,1207.8 1372.8,1207.5 1374.8,1208.1 1376.8,1208.0 1378.8,1207.7 1380.8,1208.3 1382.8,1207.9 1384.8,1208.5 1386.8,1208.0 1388.8,1207.5 1390.8,1207.5 1392.8,1207.8 1394.8,1207.8 1396.8,1208.2 1398.8,1206.9 1400.8,1207.1 1402.8,1206.5 1404.8,1206.8 1406.8,1206.3 1408.8,1206.9 1410.8,1206.3 1412.8,1206.7 1414.8,1208.1 1416.8,1207.6 1418.8,1207.5 1420.8,1208.4 1422.8,1208.4 1424.8,1208.1 1426.8,1208.0 1428.8,1208.3 1430.8,1207.7 1432.8,1207.6 1434.8,1207.5 1436.8,1207.5 1438.8,1207.2 1440.8,1207.3 1442.8,1208.2 1444.8,1207.9 1446.8,1208.1 1448.8,1208.1 1450.8,1207.8 1452.8,1207.7 1454.8,1207.6 1456.8,1208.3 1458.8,1208.2 1460.8,1207.7 1462.8,1207.8 1464.8,1207.9 1466.8,1207.8 1468.8,1208.0 1470.8,1207.5 1472.8,1207.6 1474.8,1207.8 1476.8,1208.0 1478.8,1207.8 1480.8,1208.8 1482.8,1208.1 1484.8,1207.7 1486.8,1208.3 1488.8,1207.7 1490.8,1207.7 1492.8,1208.3 1494.8,1207.8 1496.8,1207.9 1498.8,1207.6 1500.8,1207.5 1502.8,1207.8 1504.8,1208.1 1506.8,1207.8 1508.8,1207.8 1510.8,1207.5 1512.8,1207.6 1514.9,1208.0 1516.9,1208.2 1518.9,1207.9 1520.9,1208.0 1522.9,1208.2 1524.9,1207.8 1526.9,1207.9 1528.9,1207.7 1530.9,1207.5 1532.9,1207.9 1534.9,1206.9 1536.9,1207.9 1538.9,1207.3 1540.9,1207.7 1542.9,1207.3 1544.9,1208.6 1546.9,1208.0 1548.9,1207.6 1550.9,1207.5 1552.9,1206.9 1554.9,1207.6 1556.9,1207.3 1558.9,1207.5 1560.9,1207.4 1562.9,1207.6 1564.9,1207.8 1566.9,1207.6 1568.9,1208.1 1570.9,1207.3 1572.9,1208.1 1574.9,1207.6 1576.9,1207.0 1578.9,1207.8 1580.9,1207.7 1582.9,1207.3 1584.9,1207.7 1586.9,1208.0 1588.9,1207.6 1590.9,1207.5 1592.9,1207.5 1594.9,1208.0 1596.9,1207.1 1598.9,1207.1 1600.9,1207.7 1602.9,1207.6 1604.9,1207.9 1606.9,1207.2 1608.9,1208.0 1610.9,1207.5 1612.9,1207.9 1614.9,1208.0 1616.9,1207.5 1618.9,1207.2 1620.9,1207.7 1622.9,1208.0 1624.9,1207.4 1626.9,1207.8 1628.9,1207.6 1630.9,1207.2 1632.9,1207.3 1634.9,1207.9 1636.9,1206.9 1638.9,1207.7 1640.9,1207.4 1642.9,1208.0 1644.9,1207.8 1646.9,1206.7 1648.0,1203.4 1648.9,1205.2 1650.9,1208.2 1652.9,1208.3 1654.9,1208.3 1656.9,1207.3 1658.9,1207.9 1660.9,1207.8 1662.9,1207.9 1664.9,1207.8 1666.9,1208.1 1668.9,1207.7 1670.9,1208.3 1672.9,1207.8 1674.9,1207.6 1676.9,1207.6 1678.9,1207.8 1680.9,1208.1 1682.9,1207.7 1684.9,1207.9 1686.9,1207.2 1688.9,1207.5 1690.9,1207.8 1692.9,1207.9 1695.0,1208.0 1697.0,1208.1 1699.0,1207.9 1701.0,1207.6 1703.0,1207.5 1705.0,1207.5 1707.0,1207.0 1709.0,1208.0 1711.0,1207.7 1713.0,1206.7 1715.0,1208.4 1717.0,1207.9 1719.0,1207.7 1721.0,1207.7 1723.0,1207.6 1725.0,1207.8 1727.0,1207.6 1729.0,1207.7 1731.0,1207.5 1733.0,1208.4 1735.0,1208.1 1737.0,1207.7 1739.0,1208.1 1741.0,1208.1 1743.0,1207.5 1745.0,1208.0 1747.0,1207.5 1749.0,1207.5 1751.0,1207.6 1753.0,1207.6 1755.0,1207.8 1757.0,1208.3 1759.0,1207.8 1761.0,1207.6 1763.0,1207.9 1765.0,1207.8 1767.0,1207.5 1769.0,1208.1 1771.0,1207.5 1773.0,1207.0 1775.0,1207.9 1777.0,1207.7 1779.0,1207.8 1781.0,1207.2 1783.0,1207.6 1785.0,1207.4 1787.0,1208.0 1789.0,1207.7 1791.0,1203.6 1791.8,1202.2 1793.0,1205.1 1795.0,1207.4 1797.0,1208.4 1799.0,1207.5 1801.0,1207.8 1803.0,1207.6 1805.0,1207.6 1807.0,1204.8 1808.5,1189.8 1809.0,1191.7 1811.0,1207.7 1813.0,1208.1 1815.0,1208.2 1817.0,1208.2 1819.0,1207.6 1821.0,1207.1 1823.0,1207.6 1825.0,1207.6 1827.0,1206.9 1829.0,1207.9 1831.0,1208.0 1833.0,1207.5 1835.0,1207.5 1837.0,1208.1 1839.0,1208.2 1841.0,1207.6 1843.0,1207.6 1845.0,1208.2 1847.0,1207.8 1849.0,1207.9 1851.0,1207.6 1853.0,1207.8 1855.0,1207.8 1857.0,1207.9 1859.0,1207.3 1861.0,1207.2 1863.0,1207.9 1865.0,1207.4 1867.0,1208.0 1869.0,1207.7 1871.0,1207.5 1873.0,1207.2 1875.1,1207.9 1877.1,1207.8 1879.1,1207.7 1881.1,1208.3 1883.1,1207.7 1885.1,1208.0 1887.1,1207.6 1889.1,1208.2 1891.1,1208.5 1893.1,1207.7 1895.1,1207.6 1897.1,1207.9 1899.1,1207.4 1901.1,1207.8 1903.1,1208.0 1905.1,1207.6 1907.1,1208.3 1909.1,1208.0 1911.1,1207.7 1913.1,1207.4 1915.1,1207.8 1917.1,1207.6 1919.1,1208.0 1921.1,1207.6 1923.1,1207.1 1925.1,1208.0 1927.1,1206.9 1929.1,1208.0 1931.1,1207.7 1933.1,1207.7 1935.1,1207.4 1937.1,1208.1 1939.1,1157.1 1939.8,1123.8 1941.1,1185.5 1943.1,1203.5 1944.0,1199.3 1945.1,1204.2 1947.1,1207.6 1949.1,1207.4 1951.1,1207.6 1953.1,1207.1 1955.1,1208.2 1957.1,1207.9 1959.1,1209.0 1961.1,1207.4 1963.1,1207.9" fill="none" stroke="#5C1A4C" stroke-width="2.3" stroke-linejoin="round"/></svg>
<div class="t" style="left:446.9px;top:894.2px;font-size:24px;color:#24292E;transform:scaleX(1.0834);transform-origin:0 0;">100%</div>
<div class="t" style="left:462.4px;top:956.2px;font-size:24px;color:#24292E;transform:scaleX(1.0618);transform-origin:0 0;">80%</div>
<div class="t" style="left:462.4px;top:1018.2px;font-size:24px;color:#24292E;transform:scaleX(1.0618);transform-origin:0 0;">60%</div>
<div class="t" style="left:462.4px;top:1080.2px;font-size:24px;color:#24292E;transform:scaleX(1.0618);transform-origin:0 0;">40%</div>
<div class="t" style="left:462.4px;top:1142.2px;font-size:24px;color:#24292E;transform:scaleX(1.0618);transform-origin:0 0;">20%</div>
<div class="t" style="left:477.9px;top:1204.2px;font-size:24px;color:#24292E;transform:scaleX(1.0234);transform-origin:0 0;">0%</div>
<div class="t" style="left:525.2px;top:1232.8px;font-size:24px;color:#24292E;transform:scaleX(1.0324);transform-origin:0 0;">16:00</div>
<div class="t" style="left:645.1px;top:1232.8px;font-size:24px;color:#24292E;transform:scaleX(1.0324);transform-origin:0 0;">18:00</div>
<div class="t" style="left:765.0px;top:1232.8px;font-size:24px;color:#24292E;transform:scaleX(1.0324);transform-origin:0 0;">20:00</div>
<div class="t" style="left:884.9px;top:1232.8px;font-size:24px;color:#24292E;transform:scaleX(1.0324);transform-origin:0 0;">22:00</div>
<div class="t" style="left:1004.8px;top:1232.8px;font-size:24px;color:#24292E;transform:scaleX(1.0324);transform-origin:0 0;">00:00</div>
<div class="t" style="left:1124.7px;top:1232.8px;font-size:24px;color:#24292E;transform:scaleX(1.0324);transform-origin:0 0;">02:00</div>
<div class="t" style="left:1244.6px;top:1232.8px;font-size:24px;color:#24292E;transform:scaleX(1.0324);transform-origin:0 0;">04:00</div>
<div class="t" style="left:1364.5px;top:1232.8px;font-size:24px;color:#24292E;transform:scaleX(1.0324);transform-origin:0 0;">06:00</div>
<div class="t" style="left:1484.4px;top:1232.8px;font-size:24px;color:#24292E;transform:scaleX(1.0324);transform-origin:0 0;">08:00</div>
<div class="t" style="left:1604.3px;top:1232.8px;font-size:24px;color:#24292E;transform:scaleX(1.0324);transform-origin:0 0;">10:00</div>
<div class="t" style="left:1724.2px;top:1232.8px;font-size:24px;color:#24292E;transform:scaleX(1.0324);transform-origin:0 0;">12:00</div>
<div class="t" style="left:1844.1px;top:1232.8px;font-size:24px;color:#24292E;transform:scaleX(1.0324);transform-origin:0 0;">14:00</div>
<div class="a" style="left:452.0px;top:1283.3px;width:28.0px;height:7.4px;background:#E5AE2E;border-radius:4px"></div>
<div class="t" style="left:497.4px;top:1274.8px;font-size:24px;color:#24292E;transform:scaleX(1.0504);transform-origin:0 0;">Busy System</div>
<div class="a" style="left:666.1px;top:1283.3px;width:28.0px;height:7.4px;background:#0F3A7A;border-radius:4px"></div>
<div class="t" style="left:709.7px;top:1274.8px;font-size:24px;color:#24292E;transform:scaleX(1.0841);transform-origin:0 0;">Busy User</div>
<div class="a" style="left:849.8px;top:1283.3px;width:28.0px;height:7.4px;background:#7A0A0A;border-radius:4px"></div>
<div class="t" style="left:893.3px;top:1274.8px;font-size:24px;color:#24292E;transform:scaleX(1.1246);transform-origin:0 0;">Busy Iowait</div>
<div class="a" style="left:1046.8px;top:1283.3px;width:28.0px;height:7.4px;background:#F2541B;border-radius:4px"></div>
<div class="t" style="left:1089.6px;top:1274.8px;font-size:24px;color:#24292E;transform:scaleX(1.0201);transform-origin:0 0;">Busy IRQs</div>
<div class="a" style="left:1227.2px;top:1283.3px;width:28.0px;height:7.4px;background:#5A1850;border-radius:4px"></div>
<div class="t" style="left:1272.0px;top:1274.8px;font-size:24px;color:#24292E;transform:scaleX(1.0580);transform-origin:0 0;">Busy Other</div>
<div class="a" style="left:1421.0px;top:1283.3px;width:28.0px;height:7.4px;background:#0A2046;border-radius:4px"></div>
<div class="t" style="left:1464.5px;top:1274.8px;font-size:24px;color:#24292E;transform:scaleX(1.0855);transform-origin:0 0;">Idle</div>
<div class="a" style="left:1948.6px;top:811.0px;width:47.9px;height:62.5px;background:#F0F1F2;border-radius:2px"></div>
<div class="a" style="left:1969.6px;top:827.2px;width:5.6px;height:5.6px;border-radius:50%;background:#24292E"></div>
<div class="a" style="left:1969.6px;top:839.2px;width:5.6px;height:5.6px;border-radius:50%;background:#24292E"></div>
<div class="a" style="left:1969.6px;top:851.2px;width:5.6px;height:5.6px;border-radius:50%;background:#24292E"></div>
<svg class="a" style="left:1978.0px;top:1304.0px;" width="16.0" height="16.0" viewBox="0 0 16 16"><polyline points="0,12 12,12 12,2" fill="none" stroke="#9E9E9E" stroke-width="3.6"/></svg>
<svg class="a" style="left:0;top:0" width="3608" height="2154"><rect x="2126.3" y="941.4" width="1425.1" height="274.5" fill="#C1DDB8"/><polygon points="2126.3,1025.9 2128.7,1026.4 2131.1,1026.6 2133.4,1026.1 2135.8,1025.8 2138.2,1026.3 2140.6,1026.5 2143.0,1026.7 2145.0,1021.4 2145.3,1021.2 2147.7,1020.1 2149.0,1019.5 2150.1,1020.2 2152.5,1021.9 2154.8,1022.2 2157.2,1022.2 2159.6,1023.2 2162.0,1022.2 2164.4,1022.0 2166.7,1021.9 2169.1,1022.3 2171.5,1022.4 2173.9,1022.2 2176.3,1022.3 2178.6,1022.4 2181.0,1022.5 2183.4,1022.7 2185.8,1022.4 2188.2,1021.7 2190.5,1022.5 2192.9,1021.8 2195.3,1022.2 2197.7,1021.8 2200.1,1022.3 2202.4,1022.0 2204.8,1022.4 2207.2,1023.5 2209.6,1022.3 2211.9,1022.6 2214.3,1021.4 2216.7,1015.7 2219.0,1007.5 2219.1,1007.3 2221.5,1016.8 2223.8,1022.0 2226.2,1021.9 2228.6,1022.5 2229.0,1022.0 2231.0,1023.0 2233.4,1022.1 2235.7,1022.5 2238.1,1022.3 2240.5,1022.6 2242.9,1022.1 2245.3,1022.6 2247.6,1022.3 2250.0,1022.7 2252.4,1022.5 2254.8,1022.3 2257.2,1022.0 2259.5,1022.6 2261.9,1022.5 2264.3,1022.9 2266.7,1022.2 2269.0,1022.5 2271.4,1022.5 2273.8,1022.4 2276.2,1022.4 2278.6,1022.4 2280.9,1022.1 2283.3,1021.9 2285.7,1022.2 2288.1,1022.5 2290.5,1022.8 2292.8,1022.6 2295.2,1022.7 2297.6,1022.6 2300.0,1022.5 2302.4,1022.4 2304.7,1022.6 2307.1,1022.9 2309.5,1022.2 2311.9,1022.1 2314.3,1023.0 2316.6,1022.4 2319.0,1022.6 2321.4,1022.6 2323.8,1021.9 2326.1,1023.2 2328.5,1022.9 2330.9,1022.4 2333.3,1022.6 2335.7,1022.3 2338.0,1022.0 2340.4,1022.3 2342.8,1022.4 2345.2,1022.7 2347.6,1022.5 2349.9,1022.3 2352.3,1022.8 2354.7,1022.0 2357.1,1022.6 2359.5,1022.7 2361.8,1022.2 2364.2,1021.7 2366.6,1022.0 2369.0,1022.4 2371.4,1022.5 2373.7,1022.8 2376.1,1021.9 2378.5,1022.3 2380.9,1022.5 2383.2,1022.2 2385.6,1021.5 2388.0,1022.6 2390.4,1023.1 2392.8,1022.7 2395.1,1022.0 2397.5,1022.2 2399.9,1022.4 2402.3,1023.2 2404.7,1022.5 2407.0,1022.3 2409.4,1022.8 2411.8,1022.3 2414.2,1023.0 2416.6,1022.1 2418.9,1022.1 2421.3,1022.6 2423.7,1022.8 2426.1,1022.5 2428.4,1022.4 2430.8,1021.7 2433.2,1022.1 2435.6,1022.1 2438.0,1022.1 2440.3,1022.5 2442.7,1022.2 2445.1,1022.6 2447.5,1022.3 2449.9,1022.2 2452.2,1022.3 2454.6,1022.5 2457.0,1022.6 2459.4,1022.1 2461.8,1022.2 2464.1,1021.8 2466.5,1022.9 2468.9,1022.8 2471.3,1022.2 2473.7,1022.1 2476.0,1021.9 2478.4,1022.4 2480.8,1022.4 2483.2,1023.1 2485.5,1022.4 2487.9,1022.0 2490.3,1021.4 2492.7,1022.8 2495.1,1022.4 2497.4,1021.7 2499.8,1022.4 2502.2,1021.7 2504.6,1023.5 2507.0,1022.7 2509.3,1022.5 2511.7,1022.2 2514.1,1021.6 2516.5,1022.3 2518.9,1021.8 2521.2,1022.5 2523.6,1021.6 2526.0,1022.0 2528.4,1022.7 2530.8,1022.9 2533.1,1021.9 2535.5,1021.8 2537.9,1022.6 2540.3,1022.6 2542.6,1022.0 2545.0,1022.1 2547.4,1022.1 2549.8,1021.9 2552.2,1022.1 2554.5,1022.7 2556.9,1022.5 2559.3,1023.0 2561.7,1022.3 2564.1,1022.3 2566.4,1022.0 2568.8,1022.3 2571.2,1021.8 2573.6,1021.7 2576.0,1022.5 2578.3,1022.8 2580.7,1022.6 2583.1,1022.8 2585.5,1022.4 2587.9,1022.0 2590.2,1022.3 2592.6,1022.2 2595.0,1021.9 2597.4,1021.7 2599.7,1021.8 2602.1,1022.3 2604.5,1022.4 2606.9,1022.1 2609.3,1022.8 2611.6,1022.4 2614.0,1022.5 2616.4,1022.7 2618.8,1022.0 2621.2,1021.6 2623.5,1022.6 2625.9,1022.1 2628.3,1022.8 2630.7,1022.4 2633.1,1022.7 2635.4,1022.6 2637.8,1021.6 2640.2,1022.6 2642.6,1022.1 2645.0,1022.0 2647.3,1022.1 2649.7,1022.6 2652.1,1022.6 2654.5,1022.7 2656.8,1021.7 2659.2,1019.6 2659.2,1018.8 2661.6,1004.1 2662.4,999.2 2664.0,990.2 2666.4,977.7 2668.7,964.9 2668.9,964.4 2671.1,954.4 2672.0,950.7 2673.5,950.5 2675.9,951.1 2678.3,950.6 2680.6,949.9 2683.0,949.7 2685.4,949.4 2687.8,949.1 2690.2,948.7 2692.5,948.4 2694.9,947.7 2697.3,947.7 2699.7,948.2 2702.0,947.5 2704.4,947.0 2706.8,946.7 2709.2,946.5 2711.6,946.3 2713.9,945.6 2716.3,945.6 2718.7,945.3 2721.1,944.7 2723.5,944.4 2725.8,944.0 2728.2,943.7 2730.6,944.1 2733.0,942.7 2735.4,943.1 2737.7,942.7 2739.6,942.5 2740.1,957.2 2742.5,1024.5 2742.8,1032.4 2744.9,1032.4 2747.3,1032.2 2749.6,1032.4 2752.0,1032.7 2754.4,1032.3 2756.8,1032.0 2759.1,1032.0 2761.5,1032.0 2763.9,1031.9 2766.3,1032.8 2768.7,1032.5 2771.0,1032.3 2773.4,1032.9 2775.8,1032.2 2778.2,1032.7 2780.6,1032.7 2782.9,1031.9 2785.3,1031.9 2787.7,1032.1 2790.1,1032.7 2792.5,1032.9 2794.8,1032.0 2797.2,1032.8 2799.6,1032.3 2802.0,1032.3 2804.4,1032.2 2806.7,1032.3 2809.1,1031.8 2811.5,1032.0 2813.9,1032.0 2816.2,1032.6 2818.6,1033.1 2821.0,1033.4 2823.4,1032.3 2825.8,1031.8 2828.1,1032.3 2830.5,1032.1 2832.9,1033.1 2835.3,1032.6 2837.7,1032.1 2840.0,1032.7 2842.4,1032.6 2844.8,1031.8 2847.2,1032.2 2849.6,1032.3 2851.9,1032.4 2854.3,1032.4 2856.7,1032.3 2859.1,1032.5 2861.5,1032.2 2863.8,1032.1 2866.2,1032.9 2868.6,1032.5 2871.0,1032.6 2873.3,1031.8 2875.7,1032.3 2878.1,1032.7 2880.5,1031.9 2882.9,1032.8 2885.2,1032.3 2887.6,1032.5 2890.0,1032.4 2892.4,1032.5 2894.8,1032.8 2897.1,1032.3 2899.5,1032.9 2901.9,1032.1 2904.3,1032.1 2906.7,1032.6 2909.0,1032.0 2911.4,1032.3 2913.8,1032.7 2916.2,1032.8 2918.6,1031.8 2920.9,1032.6 2923.3,1033.1 2925.7,1032.8 2928.1,1032.3 2930.4,1032.2 2932.8,1032.3 2935.2,1032.0 2937.6,1032.3 2940.0,1032.3 2942.3,1032.3 2944.7,1032.8 2947.1,1032.3 2949.5,1031.9 2951.9,1032.8 2954.2,1032.0 2956.6,1032.2 2959.0,1032.4 2961.4,1032.3 2963.8,1032.0 2966.1,1032.3 2968.5,1033.2 2970.9,1032.2 2973.3,1032.4 2975.7,1032.8 2978.0,1032.7 2980.4,1032.7 2982.8,1032.7 2985.2,1031.7 2987.5,1032.1 2989.9,1032.4 2992.3,1032.6 2994.7,1032.9 2997.1,1032.6 2999.4,1032.3 3001.8,1032.4 3004.2,1032.3 3006.6,1032.5 3009.0,1032.6 3011.3,1032.3 3013.7,1032.1 3016.1,1032.1 3018.5,1032.8 3020.9,1032.8 3023.2,1032.7 3025.6,1032.7 3028.0,1032.7 3030.4,1032.4 3032.7,1032.6 3035.1,1032.0 3037.5,1032.3 3039.9,1032.1 3042.3,1032.7 3044.6,1032.2 3047.0,1032.4 3049.4,1032.5 3051.8,1032.9 3054.2,1032.1 3056.5,1032.1 3058.9,1032.7 3061.3,1032.0 3063.7,1032.6 3066.1,1032.2 3068.4,1032.4 3070.8,1031.8 3073.2,1032.6 3075.6,1032.2 3078.0,1032.1 3080.3,1033.1 3082.7,1032.6 3085.1,1033.6 3087.5,1032.5 3089.8,1032.3 3092.2,1032.4 3094.6,1033.0 3097.0,1032.4 3099.4,1032.6 3101.7,1032.6 3104.1,1032.1 3106.5,1032.4 3108.9,1032.2 3111.3,1032.0 3113.6,1032.7 3116.0,1032.6 3118.4,1032.4 3120.8,1032.1 3123.2,1031.7 3125.5,1032.6 3127.9,1032.4 3130.3,1031.8 3132.7,1032.4 3135.1,1031.9 3137.4,1032.4 3139.8,1032.5 3142.2,1032.5 3144.6,1032.5 3146.9,1032.5 3149.3,1032.0 3151.7,1032.3 3154.1,1032.2 3156.5,1032.3 3158.8,1032.5 3161.2,1032.6 3163.6,1033.0 3166.0,1031.5 3168.4,1032.5 3170.7,1032.3 3173.1,1033.2 3175.5,1032.7 3177.9,1031.8 3180.3,1032.5 3182.6,1032.2 3185.0,1032.7 3187.4,1032.0 3189.8,1032.4 3192.2,1032.4 3194.5,1032.4 3196.9,1032.2 3199.3,1031.8 3201.7,1032.6 3204.0,1032.7 3206.4,1032.4 3208.8,1032.0 3211.2,1032.5 3213.6,1032.6 3215.9,1032.3 3218.3,1032.4 3220.7,1032.9 3223.1,1032.0 3225.5,1032.2 3227.8,1031.7 3230.2,1032.2 3232.6,1032.1 3235.0,1032.1 3237.4,1032.2 3239.7,1033.0 3242.1,1032.3 3244.5,1032.4 3246.9,1033.2 3249.3,1032.4 3251.6,1031.8 3254.0,1032.5 3256.4,1032.1 3258.8,1033.0 3261.1,1032.0 3263.5,1032.2 3265.9,1031.8 3268.3,1032.4 3270.7,1032.0 3273.0,1032.4 3275.4,1032.3 3277.8,1032.2 3280.2,1032.7 3282.6,1032.7 3284.9,1032.4 3287.3,1032.1 3289.7,1032.0 3292.1,1032.5 3294.5,1033.2 3296.8,1032.2 3299.2,1032.1 3301.6,1032.2 3304.0,1032.0 3306.3,1032.1 3308.7,1032.3 3311.1,1032.9 3313.5,1032.4 3315.9,1032.2 3318.2,1031.8 3320.6,1032.5 3323.0,1032.4 3325.4,1032.0 3327.8,1032.0 3330.1,1032.4 3332.5,1032.8 3334.9,1032.6 3337.3,1032.5 3339.7,1032.3 3342.0,1032.5 3344.4,1032.4 3346.8,1033.2 3349.2,1032.0 3351.6,1032.3 3353.9,1032.8 3356.3,1032.3 3358.7,1032.9 3361.1,1032.4 3363.4,1032.5 3365.8,1032.3 3368.2,1031.9 3370.6,1032.1 3373.0,1033.2 3375.3,1032.6 3377.7,1032.6 3380.1,1032.7 3382.5,1032.6 3384.9,1032.8 3387.2,1032.3 3389.6,1032.3 3392.0,1032.7 3394.4,1032.3 3396.8,1031.9 3399.1,1032.3 3401.5,1032.2 3403.9,1032.6 3406.3,1032.1 3408.7,1032.0 3411.0,1032.3 3413.4,1032.9 3415.8,1032.4 3418.2,1032.5 3420.5,1032.4 3422.9,1032.5 3425.3,1032.7 3427.7,1032.9 3430.1,1031.8 3432.4,1032.9 3434.8,1032.4 3437.2,1032.3 3439.6,1033.2 3442.0,1032.3 3444.3,1033.1 3446.7,1032.7 3449.1,1032.0 3451.5,1032.6 3453.9,1032.7 3456.2,1032.4 3458.6,1031.6 3461.0,1032.3 3463.4,1032.3 3465.8,1032.0 3468.1,1033.0 3470.5,1032.3 3472.9,1032.3 3475.3,1032.3 3477.6,1032.1 3480.0,1032.1 3482.4,1032.4 3484.8,1032.5 3487.2,1032.2 3489.5,1032.4 3491.9,1031.9 3494.3,1032.6 3496.7,1032.1 3499.1,1032.5 3500.0,1032.1 3501.4,1031.9 3503.8,1031.6 3506.2,1030.6 3508.6,1031.4 3511.0,1030.0 3513.3,1029.4 3515.7,1028.7 3518.1,1028.9 3520.5,1028.3 3522.9,1027.4 3525.2,1026.3 3527.0,1026.2 3527.6,1026.6 3530.0,1026.2 3532.4,1026.0 3534.7,1026.0 3537.1,1026.1 3539.5,1026.4 3541.9,1026.2 3544.3,1026.4 3546.6,1027.4 3549.0,1027.0 3551.4,1026.0 3551.4,1215.9 2126.3,1215.9" fill="#8C99AA"/><polygon points="2126.3,1152.3 2128.7,1152.2 2131.1,1152.2 2133.4,1152.5 2135.8,1152.1 2138.2,1152.1 2140.6,1152.1 2143.0,1152.1 2145.0,1152.1 2145.3,1151.8 2147.7,1149.8 2149.0,1149.6 2150.1,1149.8 2152.5,1151.7 2154.8,1152.2 2157.2,1152.4 2159.6,1152.2 2162.0,1151.7 2164.4,1152.3 2166.7,1152.3 2169.1,1152.3 2171.5,1151.9 2173.9,1152.2 2176.3,1152.0 2178.6,1152.0 2181.0,1152.3 2183.4,1152.3 2185.8,1152.0 2188.2,1151.8 2190.5,1151.6 2192.9,1152.1 2195.3,1152.5 2197.7,1152.2 2200.1,1151.6 2202.4,1152.0 2204.8,1152.3 2207.2,1152.6 2209.6,1152.5 2211.9,1152.3 2214.3,1152.1 2216.7,1149.3 2219.0,1146.1 2219.1,1146.1 2221.5,1149.7 2223.8,1152.0 2226.2,1150.9 2228.6,1148.4 2229.0,1148.6 2231.0,1150.3 2233.4,1152.1 2235.7,1152.1 2238.1,1151.8 2240.5,1152.2 2242.9,1152.3 2245.3,1151.9 2247.6,1152.5 2250.0,1152.1 2252.4,1152.3 2254.8,1152.1 2257.2,1151.9 2259.5,1152.7 2261.9,1151.9 2264.3,1152.4 2266.7,1152.1 2269.0,1152.3 2271.4,1152.0 2273.8,1152.1 2276.2,1152.4 2278.6,1152.7 2280.9,1152.0 2283.3,1152.2 2285.7,1152.4 2288.1,1152.0 2290.5,1152.4 2292.8,1152.0 2295.2,1152.4 2297.6,1152.3 2300.0,1152.5 2302.4,1152.3 2304.7,1151.9 2307.1,1152.4 2309.5,1151.9 2311.9,1152.4 2314.3,1152.6 2316.6,1152.3 2319.0,1152.1 2321.4,1152.5 2323.8,1152.2 2326.1,1151.9 2328.5,1152.1 2330.9,1152.6 2333.3,1152.1 2335.7,1152.2 2338.0,1152.1 2340.4,1151.8 2342.8,1152.1 2345.2,1152.3 2347.6,1152.3 2349.9,1152.2 2352.3,1151.7 2354.7,1152.5 2357.1,1152.4 2359.5,1152.5 2361.8,1152.5 2364.2,1152.1 2366.6,1152.0 2369.0,1152.3 2371.4,1152.6 2373.7,1151.8 2376.1,1152.1 2378.5,1152.0 2380.9,1152.3 2383.2,1152.6 2385.6,1152.1 2388.0,1151.9 2390.4,1152.2 2392.8,1152.1 2395.1,1151.8 2397.5,1152.4 2399.9,1152.1 2402.3,1152.4 2404.7,1151.9 2407.0,1152.5 2409.4,1151.8 2411.8,1152.5 2414.2,1151.7 2416.6,1152.5 2418.9,1152.1 2421.3,1151.8 2423.7,1152.1 2426.1,1152.3 2428.4,1152.0 2430.8,1152.1 2433.2,1152.3 2435.6,1152.2 2438.0,1151.4 2440.3,1152.1 2442.7,1152.3 2445.1,1152.3 2447.5,1152.5 2449.9,1152.0 2452.2,1152.8 2454.6,1152.4 2457.0,1152.3 2459.4,1152.5 2461.8,1152.4 2464.1,1152.2 2466.5,1152.0 2468.9,1152.5 2471.3,1152.3 2473.7,1151.7 2476.0,1151.9 2478.4,1152.3 2480.8,1152.2 2483.2,1152.3 2485.5,1152.4 2487.9,1152.2 2490.3,1152.6 2492.7,1152.1 2495.1,1152.1 2497.4,1152.3 2499.8,1152.4 2502.2,1152.4 2504.6,1152.6 2507.0,1152.1 2509.3,1152.5 2511.7,1152.3 2514.1,1151.9 2516.5,1152.2 2518.9,1152.7 2521.2,1152.4 2523.6,1152.1 2526.0,1151.6 2528.4,1152.0 2530.8,1152.0 2533.1,1152.2 2535.5,1152.8 2537.9,1152.4 2540.3,1152.3 2542.6,1152.0 2545.0,1151.9 2547.4,1152.1 2549.8,1152.1 2552.2,1153.0 2554.5,1152.1 2556.9,1152.0 2559.3,1152.5 2561.7,1152.2 2564.1,1151.9 2566.4,1152.5 2568.8,1152.1 2571.2,1151.9 2573.6,1152.3 2576.0,1152.3 2578.3,1152.1 2580.7,1152.4 2583.1,1152.4 2585.5,1152.0 2587.9,1151.7 2590.2,1151.6 2592.6,1152.2 2595.0,1152.5 2597.4,1152.5 2599.7,1152.5 2602.1,1152.7 2604.5,1152.2 2606.9,1152.5 2609.3,1151.8 2611.6,1152.4 2614.0,1152.3 2616.4,1152.2 2618.8,1152.1 2621.2,1151.9 2623.5,1152.2 2625.9,1152.5 2628.3,1152.1 2630.7,1152.3 2633.1,1152.0 2635.4,1152.3 2637.8,1151.9 2640.2,1152.3 2642.6,1152.1 2645.0,1152.3 2647.3,1152.0 2649.7,1151.9 2652.1,1152.1 2654.5,1152.5 2656.8,1152.6 2659.2,1152.1 2659.2,1152.4 2661.6,1152.4 2662.4,1152.3 2664.0,1141.4 2666.4,1126.3 2668.7,1110.4 2668.9,1109.9 2671.1,1095.3 2672.0,1089.5 2673.5,1088.4 2675.9,1088.6 2678.3,1088.2 2680.6,1087.2 2683.0,1087.2 2685.4,1086.5 2687.8,1085.9 2690.2,1085.3 2692.5,1084.7 2694.9,1084.4 2697.3,1084.8 2699.7,1083.5 2702.0,1083.0 2704.4,1082.3 2706.8,1081.8 2709.2,1081.4 2711.6,1080.8 2713.9,1080.7 2716.3,1079.9 2718.7,1079.7 2721.1,1078.7 2723.5,1078.7 2725.8,1078.0 2728.2,1077.7 2730.6,1077.0 2733.0,1076.3 2735.4,1076.3 2737.7,1075.4 2739.6,1075.1 2740.1,1087.3 2742.5,1144.9 2742.8,1152.1 2744.9,1152.3 2747.3,1152.3 2749.6,1152.0 2752.0,1151.8 2754.4,1152.3 2756.8,1152.4 2759.1,1152.4 2761.5,1151.9 2763.9,1152.4 2766.3,1152.3 2768.7,1152.3 2771.0,1152.3 2773.4,1152.1 2775.8,1152.3 2778.2,1152.4 2780.6,1152.1 2782.9,1151.8 2785.3,1152.2 2787.7,1152.2 2790.1,1151.7 2792.5,1152.0 2794.8,1152.3 2797.2,1152.2 2799.6,1152.2 2802.0,1151.9 2804.4,1152.4 2806.7,1152.6 2809.1,1152.2 2811.5,1152.0 2813.9,1151.9 2816.2,1152.4 2818.6,1152.2 2821.0,1152.0 2823.4,1152.5 2825.8,1152.4 2828.1,1152.4 2830.5,1151.8 2832.9,1152.2 2835.3,1152.4 2837.7,1151.9 2840.0,1152.4 2842.4,1152.6 2844.8,1152.5 2847.2,1152.0 2849.6,1152.0 2851.9,1152.4 2854.3,1152.4 2856.7,1152.5 2859.1,1152.5 2861.5,1152.2 2863.8,1152.1 2866.2,1151.7 2868.6,1152.4 2871.0,1152.8 2873.3,1152.1 2875.7,1152.1 2878.1,1152.4 2880.5,1152.3 2882.9,1151.9 2885.2,1152.0 2887.6,1151.9 2890.0,1152.7 2892.4,1152.0 2894.8,1152.4 2897.1,1152.7 2899.5,1152.7 2901.9,1152.6 2904.3,1152.6 2906.7,1151.9 2909.0,1152.1 2911.4,1152.0 2913.8,1152.1 2916.2,1152.9 2918.6,1151.8 2920.9,1152.3 2923.3,1151.9 2925.7,1152.5 2928.1,1152.5 2930.4,1152.1 2932.8,1152.7 2935.2,1152.2 2937.6,1152.5 2940.0,1152.3 2942.3,1152.1 2944.7,1152.1 2947.1,1152.2 2949.5,1152.4 2951.9,1152.2 2954.2,1152.8 2956.6,1152.2 2959.0,1152.1 2961.4,1152.0 2963.8,1152.0 2966.1,1151.8 2968.5,1152.0 2970.9,1152.4 2973.3,1152.2 2975.7,1152.2 2978.0,1152.3 2980.4,1152.5 2982.8,1152.4 2985.2,1152.4 2987.5,1152.1 2989.9,1152.1 2992.3,1152.0 2994.7,1152.2 2997.1,1152.0 2999.4,1152.1 3001.8,1152.2 3004.2,1152.1 3006.6,1152.1 3009.0,1152.1 3011.3,1152.5 3013.7,1152.1 3016.1,1151.9 3018.5,1152.2 3020.9,1151.9 3023.2,1151.9 3025.6,1152.2 3028.0,1151.8 3030.4,1151.4 3032.7,1152.3 3035.1,1152.5 3037.5,1151.8 3039.9,1152.0 3042.3,1152.3 3044.6,1151.7 3047.0,1152.0 3049.4,1151.9 3051.8,1152.2 3054.2,1151.7 3056.5,1152.4 3058.9,1152.2 3061.3,1152.3 3063.7,1152.1 3066.1,1151.7 3068.4,1152.2 3070.8,1151.9 3073.2,1152.2 3075.6,1152.0 3078.0,1152.1 3080.3,1152.1 3082.7,1152.4 3085.1,1152.4 3087.5,1151.9 3089.8,1152.2 3092.2,1152.6 3094.6,1152.3 3097.0,1152.0 3099.4,1152.2 3101.7,1152.1 3104.1,1152.4 3106.5,1152.2 3108.9,1152.3 3111.3,1152.8 3113.6,1151.9 3116.0,1151.9 3118.4,1151.8 3120.8,1151.8 3123.2,1152.4 3125.5,1152.3 3127.9,1152.6 3130.3,1151.7 3132.7,1152.0 3135.1,1152.6 3137.4,1152.5 3139.8,1152.4 3142.2,1152.4 3144.6,1152.2 3146.9,1152.2 3149.3,1152.2 3151.7,1152.4 3154.1,1152.2 3156.5,1152.3 3158.8,1152.6 3161.2,1151.9 3163.6,1152.0 3166.0,1152.3 3168.4,1152.1 3170.7,1152.2 3173.1,1152.7 3175.5,1152.3 3177.9,1152.1 3180.3,1152.5 3182.6,1152.8 3185.0,1151.9 3187.4,1152.0 3189.8,1152.2 3192.2,1152.0 3194.5,1152.7 3196.9,1152.3 3199.3,1152.1 3201.7,1152.3 3204.0,1152.0 3206.4,1152.0 3208.8,1152.2 3211.2,1152.8 3213.6,1151.6 3215.9,1152.3 3218.3,1152.5 3220.7,1152.4 3223.1,1152.7 3225.5,1152.3 3227.8,1152.2 3230.2,1152.2 3232.6,1152.0 3235.0,1152.6 3237.4,1151.9 3239.7,1152.2 3242.1,1152.1 3244.5,1152.0 3246.9,1151.6 3249.3,1152.1 3251.6,1152.2 3254.0,1152.2 3256.4,1152.4 3258.8,1152.2 3261.1,1152.0 3263.5,1152.3 3265.9,1152.4 3268.3,1152.0 3270.7,1151.8 3273.0,1151.9 3275.4,1152.5 3277.8,1152.4 3280.2,1152.0 3282.6,1152.2 3284.9,1152.4 3287.3,1152.5 3289.7,1152.0 3292.1,1152.1 3294.5,1152.6 3296.8,1152.8 3299.2,1152.6 3301.6,1151.9 3304.0,1152.3 3306.3,1152.1 3308.7,1152.2 3311.1,1152.0 3313.5,1152.1 3315.9,1152.2 3318.2,1152.7 3320.6,1152.4 3323.0,1152.3 3325.4,1152.2 3327.8,1152.0 3330.1,1152.1 3332.5,1152.5 3334.9,1152.4 3337.3,1152.7 3339.7,1152.3 3342.0,1152.2 3344.4,1151.8 3346.8,1152.3 3349.2,1151.8 3351.6,1152.6 3353.9,1152.0 3356.3,1152.2 3358.7,1151.9 3361.1,1152.1 3363.4,1152.0 3365.8,1152.5 3368.2,1152.3 3370.6,1151.9 3373.0,1151.7 3375.3,1152.2 3377.7,1152.1 3380.1,1151.9 3382.5,1152.3 3384.9,1152.2 3387.2,1152.2 3389.6,1152.1 3392.0,1152.1 3394.4,1152.1 3396.8,1151.8 3399.1,1152.4 3401.5,1152.3 3403.9,1151.8 3406.3,1152.2 3408.7,1152.5 3411.0,1152.3 3413.4,1152.5 3415.8,1152.1 3418.2,1152.2 3420.5,1151.9 3422.9,1152.0 3425.3,1151.7 3427.7,1152.0 3430.1,1152.3 3432.4,1152.3 3434.8,1152.5 3437.2,1152.2 3439.6,1152.0 3442.0,1152.3 3444.3,1152.2 3446.7,1152.6 3449.1,1152.7 3451.5,1152.4 3453.9,1151.9 3456.2,1152.1 3458.6,1152.2 3461.0,1152.0 3463.4,1152.3 3465.8,1152.4 3468.1,1152.4 3470.5,1152.3 3472.9,1152.0 3475.3,1152.0 3477.6,1152.2 3480.0,1152.5 3482.4,1152.6 3484.8,1152.4 3487.2,1152.3 3489.5,1152.4 3491.9,1152.4 3494.3,1152.5 3496.7,1152.4 3499.1,1151.8 3500.0,1152.4 3501.4,1152.3 3503.8,1152.1 3506.2,1152.3 3508.6,1152.3 3511.0,1152.2 3513.3,1151.8 3515.7,1152.2 3518.1,1152.3 3520.5,1151.4 3522.9,1150.3 3525.2,1150.0 3527.0,1149.9 3527.6,1149.8 3530.0,1150.4 3532.4,1151.0 3534.7,1151.6 3537.1,1152.2 3539.5,1152.1 3541.9,1152.2 3544.3,1153.0 3546.6,1152.4 3549.0,1152.2 3551.4,1151.8 3551.4,1215.9 2126.3,1215.9" fill="#F2DC97"/><line x1="2126.3" y1="1215.9" x2="3551.4" y2="1215.9" stroke="rgba(36,41,46,0.12)" stroke-width="1.5"/><line x1="2126.3" y1="1143.7" x2="3551.4" y2="1143.7" stroke="rgba(36,41,46,0.12)" stroke-width="1.5"/><line x1="2126.3" y1="1071.6" x2="3551.4" y2="1071.6" stroke="rgba(36,41,46,0.12)" stroke-width="1.5"/><line x1="2126.3" y1="999.4" x2="3551.4" y2="999.4" stroke="rgba(36,41,46,0.12)" stroke-width="1.5"/><line x1="2126.3" y1="927.3" x2="3551.4" y2="927.3" stroke="rgba(36,41,46,0.12)" stroke-width="1.5"/><line x1="2157.2" y1="906.0" x2="2157.2" y2="1223.4" stroke="rgba(36,41,46,0.12)" stroke-width="1.5"/><line x1="2276.0" y1="906.0" x2="2276.0" y2="1223.4" stroke="rgba(36,41,46,0.12)" stroke-width="1.5"/><line x1="2394.8" y1="906.0" x2="2394.8" y2="1223.4" stroke="rgba(36,41,46,0.12)" stroke-width="1.5"/><line x1="2513.6" y1="906.0" x2="2513.6" y2="1223.4" stroke="rgba(36,41,46,0.12)" stroke-width="1.5"/><line x1="2632.4" y1="906.0" x2="2632.4" y2="1223.4" stroke="rgba(36,41,46,0.12)" stroke-width="1.5"/><line x1="2751.2" y1="906.0" x2="2751.2" y2="1223.4" stroke="rgba(36,41,46,0.12)" stroke-width="1.5"/><line x1="2870.0" y1="906.0" x2="2870.0" y2="1223.4" stroke="rgba(36,41,46,0.12)" stroke-width="1.5"/><line x1="2988.8" y1="906.0" x2="2988.8" y2="1223.4" stroke="rgba(36,41,46,0.12)" stroke-width="1.5"/><line x1="3107.6" y1="906.0" x2="3107.6" y2="1223.4" stroke="rgba(36,41,46,0.12)" stroke-width="1.5"/><line x1="3226.4" y1="906.0" x2="3226.4" y2="1223.4" stroke="rgba(36,41,46,0.12)" stroke-width="1.5"/><line x1="3345.2" y1="906.0" x2="3345.2" y2="1223.4" stroke="rgba(36,41,46,0.12)" stroke-width="1.5"/><line x1="3464.0" y1="906.0" x2="3464.0" y2="1223.4" stroke="rgba(36,41,46,0.12)" stroke-width="1.5"/><line x1="2126.3" y1="941.4" x2="3551.4" y2="941.4" stroke="#BF1B1B" stroke-width="2.6"/><polyline points="2126.3,1152.3 2128.7,1152.2 2131.1,1152.2 2133.4,1152.5 2135.8,1152.1 2138.2,1152.1 2140.6,1152.1 2143.0,1152.1 2145.0,1152.1 2145.3,1151.8 2147.7,1149.8 2149.0,1149.6 2150.1,1149.8 2152.5,1151.7 2154.8,1152.2 2157.2,1152.4 2159.6,1152.2 2162.0,1151.7 2164.4,1152.3 2166.7,1152.3 2169.1,1152.3 2171.5,1151.9 2173.9,1152.2 2176.3,1152.0 2178.6,1152.0 2181.0,1152.3 2183.4,1152.3 2185.8,1152.0 2188.2,1151.8 2190.5,1151.6 2192.9,1152.1 2195.3,1152.5 2197.7,1152.2 2200.1,1151.6 2202.4,1152.0 2204.8,1152.3 2207.2,1152.6 2209.6,1152.5 2211.9,1152.3 2214.3,1152.1 2216.7,1149.3 2219.0,1146.1 2219.1,1146.1 2221.5,1149.7 2223.8,1152.0 2226.2,1150.9 2228.6,1148.4 2229.0,1148.6 2231.0,1150.3 2233.4,1152.1 2235.7,1152.1 2238.1,1151.8 2240.5,1152.2 2242.9,1152.3 2245.3,1151.9 2247.6,1152.5 2250.0,1152.1 2252.4,1152.3 2254.8,1152.1 2257.2,1151.9 2259.5,1152.7 2261.9,1151.9 2264.3,1152.4 2266.7,1152.1 2269.0,1152.3 2271.4,1152.0 2273.8,1152.1 2276.2,1152.4 2278.6,1152.7 2280.9,1152.0 2283.3,1152.2 2285.7,1152.4 2288.1,1152.0 2290.5,1152.4 2292.8,1152.0 2295.2,1152.4 2297.6,1152.3 2300.0,1152.5 2302.4,1152.3 2304.7,1151.9 2307.1,1152.4 2309.5,1151.9 2311.9,1152.4 2314.3,1152.6 2316.6,1152.3 2319.0,1152.1 2321.4,1152.5 2323.8,1152.2 2326.1,1151.9 2328.5,1152.1 2330.9,1152.6 2333.3,1152.1 2335.7,1152.2 2338.0,1152.1 2340.4,1151.8 2342.8,1152.1 2345.2,1152.3 2347.6,1152.3 2349.9,1152.2 2352.3,1151.7 2354.7,1152.5 2357.1,1152.4 2359.5,1152.5 2361.8,1152.5 2364.2,1152.1 2366.6,1152.0 2369.0,1152.3 2371.4,1152.6 2373.7,1151.8 2376.1,1152.1 2378.5,1152.0 2380.9,1152.3 2383.2,1152.6 2385.6,1152.1 2388.0,1151.9 2390.4,1152.2 2392.8,1152.1 2395.1,1151.8 2397.5,1152.4 2399.9,1152.1 2402.3,1152.4 2404.7,1151.9 2407.0,1152.5 2409.4,1151.8 2411.8,1152.5 2414.2,1151.7 2416.6,1152.5 2418.9,1152.1 2421.3,1151.8 2423.7,1152.1 2426.1,1152.3 2428.4,1152.0 2430.8,1152.1 2433.2,1152.3 2435.6,1152.2 2438.0,1151.4 2440.3,1152.1 2442.7,1152.3 2445.1,1152.3 2447.5,1152.5 2449.9,1152.0 2452.2,1152.8 2454.6,1152.4 2457.0,1152.3 2459.4,1152.5 2461.8,1152.4 2464.1,1152.2 2466.5,1152.0 2468.9,1152.5 2471.3,1152.3 2473.7,1151.7 2476.0,1151.9 2478.4,1152.3 2480.8,1152.2 2483.2,1152.3 2485.5,1152.4 2487.9,1152.2 2490.3,1152.6 2492.7,1152.1 2495.1,1152.1 2497.4,1152.3 2499.8,1152.4 2502.2,1152.4 2504.6,1152.6 2507.0,1152.1 2509.3,1152.5 2511.7,1152.3 2514.1,1151.9 2516.5,1152.2 2518.9,1152.7 2521.2,1152.4 2523.6,1152.1 2526.0,1151.6 2528.4,1152.0 2530.8,1152.0 2533.1,1152.2 2535.5,1152.8 2537.9,1152.4 2540.3,1152.3 2542.6,1152.0 2545.0,1151.9 2547.4,1152.1 2549.8,1152.1 2552.2,1153.0 2554.5,1152.1 2556.9,1152.0 2559.3,1152.5 2561.7,1152.2 2564.1,1151.9 2566.4,1152.5 2568.8,1152.1 2571.2,1151.9 2573.6,1152.3 2576.0,1152.3 2578.3,1152.1 2580.7,1152.4 2583.1,1152.4 2585.5,1152.0 2587.9,1151.7 2590.2,1151.6 2592.6,1152.2 2595.0,1152.5 2597.4,1152.5 2599.7,1152.5 2602.1,1152.7 2604.5,1152.2 2606.9,1152.5 2609.3,1151.8 2611.6,1152.4 2614.0,1152.3 2616.4,1152.2 2618.8,1152.1 2621.2,1151.9 2623.5,1152.2 2625.9,1152.5 2628.3,1152.1 2630.7,1152.3 2633.1,1152.0 2635.4,1152.3 2637.8,1151.9 2640.2,1152.3 2642.6,1152.1 2645.0,1152.3 2647.3,1152.0 2649.7,1151.9 2652.1,1152.1 2654.5,1152.5 2656.8,1152.6 2659.2,1152.1 2659.2,1152.4 2661.6,1152.4 2662.4,1152.3 2664.0,1141.4 2666.4,1126.3 2668.7,1110.4 2668.9,1109.9 2671.1,1095.3 2672.0,1089.5 2673.5,1088.4 2675.9,1088.6 2678.3,1088.2 2680.6,1087.2 2683.0,1087.2 2685.4,1086.5 2687.8,1085.9 2690.2,1085.3 2692.5,1084.7 2694.9,1084.4 2697.3,1084.8 2699.7,1083.5 2702.0,1083.0 2704.4,1082.3 2706.8,1081.8 2709.2,1081.4 2711.6,1080.8 2713.9,1080.7 2716.3,1079.9 2718.7,1079.7 2721.1,1078.7 2723.5,1078.7 2725.8,1078.0 2728.2,1077.7 2730.6,1077.0 2733.0,1076.3 2735.4,1076.3 2737.7,1075.4 2739.6,1075.1 2740.1,1087.3 2742.5,1144.9 2742.8,1152.1 2744.9,1152.3 2747.3,1152.3 2749.6,1152.0 2752.0,1151.8 2754.4,1152.3 2756.8,1152.4 2759.1,1152.4 2761.5,1151.9 2763.9,1152.4 2766.3,1152.3 2768.7,1152.3 2771.0,1152.3 2773.4,1152.1 2775.8,1152.3 2778.2,1152.4 2780.6,1152.1 2782.9,1151.8 2785.3,1152.2 2787.7,1152.2 2790.1,1151.7 2792.5,1152.0 2794.8,1152.3 2797.2,1152.2 2799.6,1152.2 2802.0,1151.9 2804.4,1152.4 2806.7,1152.6 2809.1,1152.2 2811.5,1152.0 2813.9,1151.9 2816.2,1152.4 2818.6,1152.2 2821.0,1152.0 2823.4,1152.5 2825.8,1152.4 2828.1,1152.4 2830.5,1151.8 2832.9,1152.2 2835.3,1152.4 2837.7,1151.9 2840.0,1152.4 2842.4,1152.6 2844.8,1152.5 2847.2,1152.0 2849.6,1152.0 2851.9,1152.4 2854.3,1152.4 2856.7,1152.5 2859.1,1152.5 2861.5,1152.2 2863.8,1152.1 2866.2,1151.7 2868.6,1152.4 2871.0,1152.8 2873.3,1152.1 2875.7,1152.1 2878.1,1152.4 2880.5,1152.3 2882.9,1151.9 2885.2,1152.0 2887.6,1151.9 2890.0,1152.7 2892.4,1152.0 2894.8,1152.4 2897.1,1152.7 2899.5,1152.7 2901.9,1152.6 2904.3,1152.6 2906.7,1151.9 2909.0,1152.1 2911.4,1152.0 2913.8,1152.1 2916.2,1152.9 2918.6,1151.8 2920.9,1152.3 2923.3,1151.9 2925.7,1152.5 2928.1,1152.5 2930.4,1152.1 2932.8,1152.7 2935.2,1152.2 2937.6,1152.5 2940.0,1152.3 2942.3,1152.1 2944.7,1152.1 2947.1,1152.2 2949.5,1152.4 2951.9,1152.2 2954.2,1152.8 2956.6,1152.2 2959.0,1152.1 2961.4,1152.0 2963.8,1152.0 2966.1,1151.8 2968.5,1152.0 2970.9,1152.4 2973.3,1152.2 2975.7,1152.2 2978.0,1152.3 2980.4,1152.5 2982.8,1152.4 2985.2,1152.4 2987.5,1152.1 2989.9,1152.1 2992.3,1152.0 2994.7,1152.2 2997.1,1152.0 2999.4,1152.1 3001.8,1152.2 3004.2,1152.1 3006.6,1152.1 3009.0,1152.1 3011.3,1152.5 3013.7,1152.1 3016.1,1151.9 3018.5,1152.2 3020.9,1151.9 3023.2,1151.9 3025.6,1152.2 3028.0,1151.8 3030.4,1151.4 3032.7,1152.3 3035.1,1152.5 3037.5,1151.8 3039.9,1152.0 3042.3,1152.3 3044.6,1151.7 3047.0,1152.0 3049.4,1151.9 3051.8,1152.2 3054.2,1151.7 3056.5,1152.4 3058.9,1152.2 3061.3,1152.3 3063.7,1152.1 3066.1,1151.7 3068.4,1152.2 3070.8,1151.9 3073.2,1152.2 3075.6,1152.0 3078.0,1152.1 3080.3,1152.1 3082.7,1152.4 3085.1,1152.4 3087.5,1151.9 3089.8,1152.2 3092.2,1152.6 3094.6,1152.3 3097.0,1152.0 3099.4,1152.2 3101.7,1152.1 3104.1,1152.4 3106.5,1152.2 3108.9,1152.3 3111.3,1152.8 3113.6,1151.9 3116.0,1151.9 3118.4,1151.8 3120.8,1151.8 3123.2,1152.4 3125.5,1152.3 3127.9,1152.6 3130.3,1151.7 3132.7,1152.0 3135.1,1152.6 3137.4,1152.5 3139.8,1152.4 3142.2,1152.4 3144.6,1152.2 3146.9,1152.2 3149.3,1152.2 3151.7,1152.4 3154.1,1152.2 3156.5,1152.3 3158.8,1152.6 3161.2,1151.9 3163.6,1152.0 3166.0,1152.3 3168.4,1152.1 3170.7,1152.2 3173.1,1152.7 3175.5,1152.3 3177.9,1152.1 3180.3,1152.5 3182.6,1152.8 3185.0,1151.9 3187.4,1152.0 3189.8,1152.2 3192.2,1152.0 3194.5,1152.7 3196.9,1152.3 3199.3,1152.1 3201.7,1152.3 3204.0,1152.0 3206.4,1152.0 3208.8,1152.2 3211.2,1152.8 3213.6,1151.6 3215.9,1152.3 3218.3,1152.5 3220.7,1152.4 3223.1,1152.7 3225.5,1152.3 3227.8,1152.2 3230.2,1152.2 3232.6,1152.0 3235.0,1152.6 3237.4,1151.9 3239.7,1152.2 3242.1,1152.1 3244.5,1152.0 3246.9,1151.6 3249.3,1152.1 3251.6,1152.2 3254.0,1152.2 3256.4,1152.4 3258.8,1152.2 3261.1,1152.0 3263.5,1152.3 3265.9,1152.4 3268.3,1152.0 3270.7,1151.8 3273.0,1151.9 3275.4,1152.5 3277.8,1152.4 3280.2,1152.0 3282.6,1152.2 3284.9,1152.4 3287.3,1152.5 3289.7,1152.0 3292.1,1152.1 3294.5,1152.6 3296.8,1152.8 3299.2,1152.6 3301.6,1151.9 3304.0,1152.3 3306.3,1152.1 3308.7,1152.2 3311.1,1152.0 3313.5,1152.1 3315.9,1152.2 3318.2,1152.7 3320.6,1152.4 3323.0,1152.3 3325.4,1152.2 3327.8,1152.0 3330.1,1152.1 3332.5,1152.5 3334.9,1152.4 3337.3,1152.7 3339.7,1152.3 3342.0,1152.2 3344.4,1151.8 3346.8,1152.3 3349.2,1151.8 3351.6,1152.6 3353.9,1152.0 3356.3,1152.2 3358.7,1151.9 3361.1,1152.1 3363.4,1152.0 3365.8,1152.5 3368.2,1152.3 3370.6,1151.9 3373.0,1151.7 3375.3,1152.2 3377.7,1152.1 3380.1,1151.9 3382.5,1152.3 3384.9,1152.2 3387.2,1152.2 3389.6,1152.1 3392.0,1152.1 3394.4,1152.1 3396.8,1151.8 3399.1,1152.4 3401.5,1152.3 3403.9,1151.8 3406.3,1152.2 3408.7,1152.5 3411.0,1152.3 3413.4,1152.5 3415.8,1152.1 3418.2,1152.2 3420.5,1151.9 3422.9,1152.0 3425.3,1151.7 3427.7,1152.0 3430.1,1152.3 3432.4,1152.3 3434.8,1152.5 3437.2,1152.2 3439.6,1152.0 3442.0,1152.3 3444.3,1152.2 3446.7,1152.6 3449.1,1152.7 3451.5,1152.4 3453.9,1151.9 3456.2,1152.1 3458.6,1152.2 3461.0,1152.0 3463.4,1152.3 3465.8,1152.4 3468.1,1152.4 3470.5,1152.3 3472.9,1152.0 3475.3,1152.0 3477.6,1152.2 3480.0,1152.5 3482.4,1152.6 3484.8,1152.4 3487.2,1152.3 3489.5,1152.4 3491.9,1152.4 3494.3,1152.5 3496.7,1152.4 3499.1,1151.8 3500.0,1152.4 3501.4,1152.3 3503.8,1152.1 3506.2,1152.3 3508.6,1152.3 3511.0,1152.2 3513.3,1151.8 3515.7,1152.2 3518.1,1152.3 3520.5,1151.4 3522.9,1150.3 3525.2,1150.0 3527.0,1149.9 3527.6,1149.8 3530.0,1150.4 3532.4,1151.0 3534.7,1151.6 3537.1,1152.2 3539.5,1152.1 3541.9,1152.2 3544.3,1153.0 3546.6,1152.4 3549.0,1152.2 3551.4,1151.8" fill="none" stroke="#D2A422" stroke-width="2.2"/><polyline points="2126.3,1025.9 2128.7,1026.4 2131.1,1026.6 2133.4,1026.1 2135.8,1025.8 2138.2,1026.3 2140.6,1026.5 2143.0,1026.7 2145.0,1021.4 2145.3,1021.2 2147.7,1020.1 2149.0,1019.5 2150.1,1020.2 2152.5,1021.9 2154.8,1022.2 2157.2,1022.2 2159.6,1023.2 2162.0,1022.2 2164.4,1022.0 2166.7,1021.9 2169.1,1022.3 2171.5,1022.4 2173.9,1022.2 2176.3,1022.3 2178.6,1022.4 2181.0,1022.5 2183.4,1022.7 2185.8,1022.4 2188.2,1021.7 2190.5,1022.5 2192.9,1021.8 2195.3,1022.2 2197.7,1021.8 2200.1,1022.3 2202.4,1022.0 2204.8,1022.4 2207.2,1023.5 2209.6,1022.3 2211.9,1022.6 2214.3,1021.4 2216.7,1015.7 2219.0,1007.5 2219.1,1007.3 2221.5,1016.8 2223.8,1022.0 2226.2,1021.9 2228.6,1022.5 2229.0,1022.0 2231.0,1023.0 2233.4,1022.1 2235.7,1022.5 2238.1,1022.3 2240.5,1022.6 2242.9,1022.1 2245.3,1022.6 2247.6,1022.3 2250.0,1022.7 2252.4,1022.5 2254.8,1022.3 2257.2,1022.0 2259.5,1022.6 2261.9,1022.5 2264.3,1022.9 2266.7,1022.2 2269.0,1022.5 2271.4,1022.5 2273.8,1022.4 2276.2,1022.4 2278.6,1022.4 2280.9,1022.1 2283.3,1021.9 2285.7,1022.2 2288.1,1022.5 2290.5,1022.8 2292.8,1022.6 2295.2,1022.7 2297.6,1022.6 2300.0,1022.5 2302.4,1022.4 2304.7,1022.6 2307.1,1022.9 2309.5,1022.2 2311.9,1022.1 2314.3,1023.0 2316.6,1022.4 2319.0,1022.6 2321.4,1022.6 2323.8,1021.9 2326.1,1023.2 2328.5,1022.9 2330.9,1022.4 2333.3,1022.6 2335.7,1022.3 2338.0,1022.0 2340.4,1022.3 2342.8,1022.4 2345.2,1022.7 2347.6,1022.5 2349.9,1022.3 2352.3,1022.8 2354.7,1022.0 2357.1,1022.6 2359.5,1022.7 2361.8,1022.2 2364.2,1021.7 2366.6,1022.0 2369.0,1022.4 2371.4,1022.5 2373.7,1022.8 2376.1,1021.9 2378.5,1022.3 2380.9,1022.5 2383.2,1022.2 2385.6,1021.5 2388.0,1022.6 2390.4,1023.1 2392.8,1022.7 2395.1,1022.0 2397.5,1022.2 2399.9,1022.4 2402.3,1023.2 2404.7,1022.5 2407.0,1022.3 2409.4,1022.8 2411.8,1022.3 2414.2,1023.0 2416.6,1022.1 2418.9,1022.1 2421.3,1022.6 2423.7,1022.8 2426.1,1022.5 2428.4,1022.4 2430.8,1021.7 2433.2,1022.1 2435.6,1022.1 2438.0,1022.1 2440.3,1022.5 2442.7,1022.2 2445.1,1022.6 2447.5,1022.3 2449.9,1022.2 2452.2,1022.3 2454.6,1022.5 2457.0,1022.6 2459.4,1022.1 2461.8,1022.2 2464.1,1021.8 2466.5,1022.9 2468.9,1022.8 2471.3,1022.2 2473.7,1022.1 2476.0,1021.9 2478.4,1022.4 2480.8,1022.4 2483.2,1023.1 2485.5,1022.4 2487.9,1022.0 2490.3,1021.4 2492.7,1022.8 2495.1,1022.4 2497.4,1021.7 2499.8,1022.4 2502.2,1021.7 2504.6,1023.5 2507.0,1022.7 2509.3,1022.5 2511.7,1022.2 2514.1,1021.6 2516.5,1022.3 2518.9,1021.8 2521.2,1022.5 2523.6,1021.6 2526.0,1022.0 2528.4,1022.7 2530.8,1022.9 2533.1,1021.9 2535.5,1021.8 2537.9,1022.6 2540.3,1022.6 2542.6,1022.0 2545.0,1022.1 2547.4,1022.1 2549.8,1021.9 2552.2,1022.1 2554.5,1022.7 2556.9,1022.5 2559.3,1023.0 2561.7,1022.3 2564.1,1022.3 2566.4,1022.0 2568.8,1022.3 2571.2,1021.8 2573.6,1021.7 2576.0,1022.5 2578.3,1022.8 2580.7,1022.6 2583.1,1022.8 2585.5,1022.4 2587.9,1022.0 2590.2,1022.3 2592.6,1022.2 2595.0,1021.9 2597.4,1021.7 2599.7,1021.8 2602.1,1022.3 2604.5,1022.4 2606.9,1022.1 2609.3,1022.8 2611.6,1022.4 2614.0,1022.5 2616.4,1022.7 2618.8,1022.0 2621.2,1021.6 2623.5,1022.6 2625.9,1022.1 2628.3,1022.8 2630.7,1022.4 2633.1,1022.7 2635.4,1022.6 2637.8,1021.6 2640.2,1022.6 2642.6,1022.1 2645.0,1022.0 2647.3,1022.1 2649.7,1022.6 2652.1,1022.6 2654.5,1022.7 2656.8,1021.7 2659.2,1019.6 2659.2,1018.8 2661.6,1004.1 2662.4,999.2 2664.0,990.2 2666.4,977.7 2668.7,964.9 2668.9,964.4 2671.1,954.4 2672.0,950.7 2673.5,950.5 2675.9,951.1 2678.3,950.6 2680.6,949.9 2683.0,949.7 2685.4,949.4 2687.8,949.1 2690.2,948.7 2692.5,948.4 2694.9,947.7 2697.3,947.7 2699.7,948.2 2702.0,947.5 2704.4,947.0 2706.8,946.7 2709.2,946.5 2711.6,946.3 2713.9,945.6 2716.3,945.6 2718.7,945.3 2721.1,944.7 2723.5,944.4 2725.8,944.0 2728.2,943.7 2730.6,944.1 2733.0,942.7 2735.4,943.1 2737.7,942.7 2739.6,942.5 2740.1,957.2 2742.5,1024.5 2742.8,1032.4 2744.9,1032.4 2747.3,1032.2 2749.6,1032.4 2752.0,1032.7 2754.4,1032.3 2756.8,1032.0 2759.1,1032.0 2761.5,1032.0 2763.9,1031.9 2766.3,1032.8 2768.7,1032.5 2771.0,1032.3 2773.4,1032.9 2775.8,1032.2 2778.2,1032.7 2780.6,1032.7 2782.9,1031.9 2785.3,1031.9 2787.7,1032.1 2790.1,1032.7 2792.5,1032.9 2794.8,1032.0 2797.2,1032.8 2799.6,1032.3 2802.0,1032.3 2804.4,1032.2 2806.7,1032.3 2809.1,1031.8 2811.5,1032.0 2813.9,1032.0 2816.2,1032.6 2818.6,1033.1 2821.0,1033.4 2823.4,1032.3 2825.8,1031.8 2828.1,1032.3 2830.5,1032.1 2832.9,1033.1 2835.3,1032.6 2837.7,1032.1 2840.0,1032.7 2842.4,1032.6 2844.8,1031.8 2847.2,1032.2 2849.6,1032.3 2851.9,1032.4 2854.3,1032.4 2856.7,1032.3 2859.1,1032.5 2861.5,1032.2 2863.8,1032.1 2866.2,1032.9 2868.6,1032.5 2871.0,1032.6 2873.3,1031.8 2875.7,1032.3 2878.1,1032.7 2880.5,1031.9 2882.9,1032.8 2885.2,1032.3 2887.6,1032.5 2890.0,1032.4 2892.4,1032.5 2894.8,1032.8 2897.1,1032.3 2899.5,1032.9 2901.9,1032.1 2904.3,1032.1 2906.7,1032.6 2909.0,1032.0 2911.4,1032.3 2913.8,1032.7 2916.2,1032.8 2918.6,1031.8 2920.9,1032.6 2923.3,1033.1 2925.7,1032.8 2928.1,1032.3 2930.4,1032.2 2932.8,1032.3 2935.2,1032.0 2937.6,1032.3 2940.0,1032.3 2942.3,1032.3 2944.7,1032.8 2947.1,1032.3 2949.5,1031.9 2951.9,1032.8 2954.2,1032.0 2956.6,1032.2 2959.0,1032.4 2961.4,1032.3 2963.8,1032.0 2966.1,1032.3 2968.5,1033.2 2970.9,1032.2 2973.3,1032.4 2975.7,1032.8 2978.0,1032.7 2980.4,1032.7 2982.8,1032.7 2985.2,1031.7 2987.5,1032.1 2989.9,1032.4 2992.3,1032.6 2994.7,1032.9 2997.1,1032.6 2999.4,1032.3 3001.8,1032.4 3004.2,1032.3 3006.6,1032.5 3009.0,1032.6 3011.3,1032.3 3013.7,1032.1 3016.1,1032.1 3018.5,1032.8 3020.9,1032.8 3023.2,1032.7 3025.6,1032.7 3028.0,1032.7 3030.4,1032.4 3032.7,1032.6 3035.1,1032.0 3037.5,1032.3 3039.9,1032.1 3042.3,1032.7 3044.6,1032.2 3047.0,1032.4 3049.4,1032.5 3051.8,1032.9 3054.2,1032.1 3056.5,1032.1 3058.9,1032.7 3061.3,1032.0 3063.7,1032.6 3066.1,1032.2 3068.4,1032.4 3070.8,1031.8 3073.2,1032.6 3075.6,1032.2 3078.0,1032.1 3080.3,1033.1 3082.7,1032.6 3085.1,1033.6 3087.5,1032.5 3089.8,1032.3 3092.2,1032.4 3094.6,1033.0 3097.0,1032.4 3099.4,1032.6 3101.7,1032.6 3104.1,1032.1 3106.5,1032.4 3108.9,1032.2 3111.3,1032.0 3113.6,1032.7 3116.0,1032.6 3118.4,1032.4 3120.8,1032.1 3123.2,1031.7 3125.5,1032.6 3127.9,1032.4 3130.3,1031.8 3132.7,1032.4 3135.1,1031.9 3137.4,1032.4 3139.8,1032.5 3142.2,1032.5 3144.6,1032.5 3146.9,1032.5 3149.3,1032.0 3151.7,1032.3 3154.1,1032.2 3156.5,1032.3 3158.8,1032.5 3161.2,1032.6 3163.6,1033.0 3166.0,1031.5 3168.4,1032.5 3170.7,1032.3 3173.1,1033.2 3175.5,1032.7 3177.9,1031.8 3180.3,1032.5 3182.6,1032.2 3185.0,1032.7 3187.4,1032.0 3189.8,1032.4 3192.2,1032.4 3194.5,1032.4 3196.9,1032.2 3199.3,1031.8 3201.7,1032.6 3204.0,1032.7 3206.4,1032.4 3208.8,1032.0 3211.2,1032.5 3213.6,1032.6 3215.9,1032.3 3218.3,1032.4 3220.7,1032.9 3223.1,1032.0 3225.5,1032.2 3227.8,1031.7 3230.2,1032.2 3232.6,1032.1 3235.0,1032.1 3237.4,1032.2 3239.7,1033.0 3242.1,1032.3 3244.5,1032.4 3246.9,1033.2 3249.3,1032.4 3251.6,1031.8 3254.0,1032.5 3256.4,1032.1 3258.8,1033.0 3261.1,1032.0 3263.5,1032.2 3265.9,1031.8 3268.3,1032.4 3270.7,1032.0 3273.0,1032.4 3275.4,1032.3 3277.8,1032.2 3280.2,1032.7 3282.6,1032.7 3284.9,1032.4 3287.3,1032.1 3289.7,1032.0 3292.1,1032.5 3294.5,1033.2 3296.8,1032.2 3299.2,1032.1 3301.6,1032.2 3304.0,1032.0 3306.3,1032.1 3308.7,1032.3 3311.1,1032.9 3313.5,1032.4 3315.9,1032.2 3318.2,1031.8 3320.6,1032.5 3323.0,1032.4 3325.4,1032.0 3327.8,1032.0 3330.1,1032.4 3332.5,1032.8 3334.9,1032.6 3337.3,1032.5 3339.7,1032.3 3342.0,1032.5 3344.4,1032.4 3346.8,1033.2 3349.2,1032.0 3351.6,1032.3 3353.9,1032.8 3356.3,1032.3 3358.7,1032.9 3361.1,1032.4 3363.4,1032.5 3365.8,1032.3 3368.2,1031.9 3370.6,1032.1 3373.0,1033.2 3375.3,1032.6 3377.7,1032.6 3380.1,1032.7 3382.5,1032.6 3384.9,1032.8 3387.2,1032.3 3389.6,1032.3 3392.0,1032.7 3394.4,1032.3 3396.8,1031.9 3399.1,1032.3 3401.5,1032.2 3403.9,1032.6 3406.3,1032.1 3408.7,1032.0 3411.0,1032.3 3413.4,1032.9 3415.8,1032.4 3418.2,1032.5 3420.5,1032.4 3422.9,1032.5 3425.3,1032.7 3427.7,1032.9 3430.1,1031.8 3432.4,1032.9 3434.8,1032.4 3437.2,1032.3 3439.6,1033.2 3442.0,1032.3 3444.3,1033.1 3446.7,1032.7 3449.1,1032.0 3451.5,1032.6 3453.9,1032.7 3456.2,1032.4 3458.6,1031.6 3461.0,1032.3 3463.4,1032.3 3465.8,1032.0 3468.1,1033.0 3470.5,1032.3 3472.9,1032.3 3475.3,1032.3 3477.6,1032.1 3480.0,1032.1 3482.4,1032.4 3484.8,1032.5 3487.2,1032.2 3489.5,1032.4 3491.9,1031.9 3494.3,1032.6 3496.7,1032.1 3499.1,1032.5 3500.0,1032.1 3501.4,1031.9 3503.8,1031.6 3506.2,1030.6 3508.6,1031.4 3511.0,1030.0 3513.3,1029.4 3515.7,1028.7 3518.1,1028.9 3520.5,1028.3 3522.9,1027.4 3525.2,1026.3 3527.0,1026.2 3527.6,1026.6 3530.0,1026.2 3532.4,1026.0 3534.7,1026.0 3537.1,1026.1 3539.5,1026.4 3541.9,1026.2 3544.3,1026.4 3546.6,1027.4 3549.0,1027.0 3551.4,1026.0" fill="none" stroke="#0A2A52" stroke-width="2.6" stroke-linejoin="round"/></svg>
<div class="t" style="left:2034.8px;top:915.7px;font-size:24px;color:#24292E;transform:scaleX(1.0904);transform-origin:0 0;">32 GiB</div>
<div class="t" style="left:2034.8px;top:987.8px;font-size:24px;color:#24292E;transform:scaleX(1.0904);transform-origin:0 0;">24 GiB</div>
<div class="t" style="left:2034.8px;top:1060.0px;font-size:24px;color:#24292E;transform:scaleX(1.0904);transform-origin:0 0;">16 GiB</div>
<div class="t" style="left:2049.8px;top:1132.1px;font-size:24px;color:#24292E;transform:scaleX(1.0829);transform-origin:0 0;">8 GiB</div>
<div class="t" style="left:2077.8px;top:1204.3px;font-size:24px;color:#24292E;transform:scaleX(1.0271);transform-origin:0 0;">0 B</div>
<div class="t" style="left:2126.2px;top:1232.8px;font-size:24px;color:#24292E;transform:scaleX(1.0324);transform-origin:0 0;">16:00</div>
<div class="t" style="left:2245.0px;top:1232.8px;font-size:24px;color:#24292E;transform:scaleX(1.0324);transform-origin:0 0;">18:00</div>
<div class="t" style="left:2363.8px;top:1232.8px;font-size:24px;color:#24292E;transform:scaleX(1.0324);transform-origin:0 0;">20:00</div>
<div class="t" style="left:2482.6px;top:1232.8px;font-size:24px;color:#24292E;transform:scaleX(1.0324);transform-origin:0 0;">22:00</div>
<div class="t" style="left:2601.4px;top:1232.8px;font-size:24px;color:#24292E;transform:scaleX(1.0324);transform-origin:0 0;">00:00</div>
<div class="t" style="left:2720.2px;top:1232.8px;font-size:24px;color:#24292E;transform:scaleX(1.0324);transform-origin:0 0;">02:00</div>
<div class="t" style="left:2839.0px;top:1232.8px;font-size:24px;color:#24292E;transform:scaleX(1.0324);transform-origin:0 0;">04:00</div>
<div class="t" style="left:2957.8px;top:1232.8px;font-size:24px;color:#24292E;transform:scaleX(1.0324);transform-origin:0 0;">06:00</div>
<div class="t" style="left:3076.6px;top:1232.8px;font-size:24px;color:#24292E;transform:scaleX(1.0324);transform-origin:0 0;">08:00</div>
<div class="t" style="left:3195.4px;top:1232.8px;font-size:24px;color:#24292E;transform:scaleX(1.0324);transform-origin:0 0;">10:00</div>
<div class="t" style="left:3314.2px;top:1232.8px;font-size:24px;color:#24292E;transform:scaleX(1.0324);transform-origin:0 0;">12:00</div>
<div class="t" style="left:3433.0px;top:1232.8px;font-size:24px;color:#24292E;transform:scaleX(1.0324);transform-origin:0 0;">14:00</div>
<div class="a" style="left:2040.2px;top:1283.3px;width:28.0px;height:7.4px;background:#D5F0CB;border-radius:4px"></div>
<div class="t" style="left:2085.2px;top:1274.8px;font-size:24px;color:#24292E;transform:scaleX(1.1836);transform-origin:0 0;">Total</div>
<div class="a" style="left:2161.7px;top:1283.3px;width:28.0px;height:7.4px;background:#DFA50E;border-radius:4px"></div>
<div class="t" style="left:2204.8px;top:1274.8px;font-size:24px;color:#24292E;transform:scaleX(1.0353);transform-origin:0 0;">Used</div>
<div class="a" style="left:2285.1px;top:1283.3px;width:28.0px;height:7.4px;background:#0A2850;border-radius:4px"></div>
<div class="t" style="left:2328.8px;top:1274.8px;font-size:24px;color:#24292E;transform:scaleX(1.0916);transform-origin:0 0;">Cache + Buffer</div>
<div class="a" style="left:2524.9px;top:1283.3px;width:28.0px;height:7.4px;background:#6AA35A;border-radius:4px"></div>
<div class="t" style="left:2568.0px;top:1274.8px;font-size:24px;color:#24292E;transform:scaleX(0.9931);transform-origin:0 0;">Free</div>
<div class="a" style="left:2640.0px;top:1283.3px;width:28.0px;height:7.4px;background:#C41A1A;border-radius:4px"></div>
<div class="t" style="left:2683.0px;top:1274.8px;font-size:24px;color:#24292E;transform:scaleX(1.0696);transform-origin:0 0;">Swap used</div>
<svg class="a" style="left:0;top:0" width="3608" height="2154"><line x1="565.8" y1="1485.2" x2="1964.6" y2="1485.2" stroke="rgba(36,41,46,0.12)" stroke-width="1.5"/><line x1="565.8" y1="1547.6" x2="1964.6" y2="1547.6" stroke="rgba(36,41,46,0.12)" stroke-width="1.5"/><line x1="565.8" y1="1610.2" x2="1964.6" y2="1610.2" stroke="rgba(36,41,46,0.12)" stroke-width="1.5"/><line x1="597.2" y1="1438.7" x2="597.2" y2="1657.5" stroke="rgba(36,41,46,0.12)" stroke-width="1.5"/><line x1="713.7" y1="1438.7" x2="713.7" y2="1657.5" stroke="rgba(36,41,46,0.12)" stroke-width="1.5"/><line x1="830.1" y1="1438.7" x2="830.1" y2="1657.5" stroke="rgba(36,41,46,0.12)" stroke-width="1.5"/><line x1="946.6" y1="1438.7" x2="946.6" y2="1657.5" stroke="rgba(36,41,46,0.12)" stroke-width="1.5"/><line x1="1063.0" y1="1438.7" x2="1063.0" y2="1657.5" stroke="rgba(36,41,46,0.12)" stroke-width="1.5"/><line x1="1179.5" y1="1438.7" x2="1179.5" y2="1657.5" stroke="rgba(36,41,46,0.12)" stroke-width="1.5"/><line x1="1296.0" y1="1438.7" x2="1296.0" y2="1657.5" stroke="rgba(36,41,46,0.12)" stroke-width="1.5"/><line x1="1412.4" y1="1438.7" x2="1412.4" y2="1657.5" stroke="rgba(36,41,46,0.12)" stroke-width="1.5"/><line x1="1528.9" y1="1438.7" x2="1528.9" y2="1657.5" stroke="rgba(36,41,46,0.12)" stroke-width="1.5"/><line x1="1645.3" y1="1438.7" x2="1645.3" y2="1657.5" stroke="rgba(36,41,46,0.12)" stroke-width="1.5"/><line x1="1761.8" y1="1438.7" x2="1761.8" y2="1657.5" stroke="rgba(36,41,46,0.12)" stroke-width="1.5"/><line x1="1878.3" y1="1438.7" x2="1878.3" y2="1657.5" stroke="rgba(36,41,46,0.12)" stroke-width="1.5"/><rect x="565.8" y="1542.1" width="1398.8" height="4.5" fill="#F6DACD"/><polyline points="565.8,1543.4 572.8,1543.5 579.9,1542.8 586.9,1543.1 593.9,1543.1 600.9,1543.1 608.0,1543.1 615.0,1543.1 622.0,1543.2 629.1,1543.7 636.1,1543.4 643.1,1543.1 650.1,1543.2 657.2,1543.4 664.2,1542.8 671.2,1543.2 678.3,1543.2 685.3,1543.4 692.3,1543.3 699.4,1542.8 706.4,1543.6 713.4,1543.1 720.4,1543.0 727.5,1542.7 734.5,1543.3 741.5,1542.8 748.6,1543.5 755.6,1542.8 762.6,1543.3 769.6,1543.1 776.7,1543.2 783.7,1543.4 790.7,1542.9 797.8,1543.3 804.8,1542.9 811.8,1543.1 818.8,1543.5 825.9,1543.2 832.9,1543.0 839.9,1543.2 847.0,1543.1 854.0,1542.8 861.0,1542.5 868.1,1543.0 875.1,1543.1 882.1,1538.3 889.1,1542.9 896.2,1543.0 903.2,1542.9 910.2,1543.0 917.3,1543.0 924.3,1543.3 931.3,1542.9 938.3,1542.9 945.4,1543.2 952.4,1543.4 959.4,1543.2 966.5,1542.7 973.5,1537.0 980.5,1543.0 987.5,1543.0 994.6,1543.5 1001.6,1543.2 1008.6,1543.3 1015.7,1543.0 1022.7,1542.9 1029.7,1543.3 1036.8,1543.2 1043.8,1543.1 1050.8,1543.3 1057.8,1543.4 1064.9,1543.0 1071.9,1543.0 1078.9,1543.1 1086.0,1542.8 1093.0,1543.1 1100.0,1542.8 1107.0,1542.8 1114.1,1543.5 1121.1,1543.2 1128.1,1542.7 1135.2,1543.3 1142.2,1543.2 1149.2,1543.1 1156.2,1543.1 1163.3,1543.2 1170.3,1542.6 1177.3,1542.9 1184.4,1543.3 1191.4,1542.9 1198.4,1543.2 1205.5,1542.8 1212.5,1543.4 1219.5,1543.3 1226.5,1542.5 1233.6,1543.1 1240.6,1543.4 1247.6,1543.1 1254.7,1543.4 1261.7,1543.5 1268.7,1543.3 1275.7,1543.3 1282.8,1542.9 1289.8,1543.3 1296.8,1542.7 1303.9,1543.0 1310.9,1543.2 1317.9,1543.1 1324.9,1543.1 1332.0,1543.3 1339.0,1543.0 1346.0,1543.2 1353.1,1543.2 1360.1,1542.7 1367.1,1543.1 1374.2,1542.9 1381.2,1543.2 1388.2,1543.1 1395.2,1542.6 1402.3,1542.8 1409.3,1542.5 1416.3,1542.9 1423.4,1543.0 1430.4,1543.1 1437.4,1543.3 1444.4,1546.6 1451.5,1543.2 1458.5,1543.1 1465.5,1543.0 1472.6,1543.2 1479.6,1543.1 1486.6,1543.0 1493.6,1543.6 1500.7,1543.0 1507.7,1543.0 1514.7,1543.1 1521.8,1543.8 1528.8,1543.1 1535.8,1542.9 1542.9,1543.2 1549.9,1543.7 1556.9,1543.0 1563.9,1542.6 1571.0,1542.6 1578.0,1543.0 1585.0,1542.9 1592.1,1543.1 1599.1,1543.2 1606.1,1542.8 1613.1,1543.2 1620.2,1542.9 1627.2,1543.2 1634.2,1543.4 1641.3,1542.7 1648.3,1542.8 1655.3,1543.0 1662.3,1543.3 1669.4,1543.1 1676.4,1543.2 1683.4,1543.1 1690.5,1543.2 1697.5,1542.8 1704.5,1542.7 1711.6,1543.1 1718.6,1543.3 1725.6,1543.5 1732.6,1543.0 1739.7,1543.2 1746.7,1543.0 1753.7,1543.6 1760.8,1543.3 1767.8,1543.1 1774.8,1543.5 1781.8,1542.8 1788.9,1543.2 1795.9,1543.3 1802.9,1543.0 1810.0,1542.9 1817.0,1543.2 1824.0,1542.8 1831.0,1542.9 1838.1,1543.2 1845.1,1543.5 1852.1,1543.2 1859.2,1543.3 1866.2,1543.2 1873.2,1543.1 1880.3,1543.6 1887.3,1548.0 1894.3,1543.0 1901.3,1542.7 1908.4,1543.2 1915.4,1542.8 1922.4,1543.1 1929.5,1542.6 1936.5,1542.9 1943.5,1543.1 1950.5,1543.0 1957.6,1543.2 1964.6,1543.0" fill="none" stroke="#F2C8B8" stroke-width="1.5" opacity="1"/><polyline points="565.8,1547.0 572.8,1546.5 579.9,1546.7 586.9,1546.4 593.9,1546.4 600.9,1546.5 608.0,1546.5 615.0,1546.7 622.0,1546.8 629.1,1546.5 636.1,1546.6 643.1,1546.6 650.1,1546.4 657.2,1546.8 664.2,1546.6 671.2,1546.6 678.3,1546.1 685.3,1546.6 692.3,1546.8 699.4,1546.4 706.4,1546.6 713.4,1546.3 720.4,1546.7 727.5,1546.6 734.5,1546.4 741.5,1546.6 748.6,1546.3 755.6,1546.6 762.6,1546.7 769.6,1546.5 776.7,1546.6 783.7,1546.4 790.7,1546.6 797.8,1546.5 804.8,1546.7 811.8,1546.5 818.8,1546.4 825.9,1546.6 832.9,1546.6 839.9,1546.7 847.0,1546.6 854.0,1546.6 861.0,1546.7 868.1,1546.5 875.1,1546.5 882.1,1546.5 889.1,1546.7 896.2,1546.7 903.2,1546.7 910.2,1546.9 917.3,1546.7 924.3,1546.6 931.3,1546.9 938.3,1546.8 945.4,1546.7 952.4,1546.6 959.4,1546.7 966.5,1546.8 973.5,1546.7 980.5,1546.6 987.5,1546.4 994.6,1546.4 1001.6,1546.8 1008.6,1546.6 1015.7,1546.8 1022.7,1546.5 1029.7,1546.5 1036.8,1546.6 1043.8,1546.7 1050.8,1546.7 1057.8,1546.5 1064.9,1546.5 1071.9,1546.7 1078.9,1546.6 1086.0,1546.8 1093.0,1546.6 1100.0,1546.7 1107.0,1546.6 1114.1,1546.2 1121.1,1546.6 1128.1,1546.6 1135.2,1546.8 1142.2,1546.4 1149.2,1546.4 1156.2,1541.9 1163.3,1546.7 1170.3,1546.5 1177.3,1543.2 1184.4,1546.8 1191.4,1546.6 1198.4,1546.4 1205.5,1546.8 1212.5,1546.7 1219.5,1546.5 1226.5,1546.9 1233.6,1546.4 1240.6,1541.1 1247.6,1546.5 1254.7,1550.1 1261.7,1546.6 1268.7,1550.0 1275.7,1546.4 1282.8,1546.3 1289.8,1542.2 1296.8,1546.7 1303.9,1546.6 1310.9,1546.5 1317.9,1546.5 1324.9,1546.5 1332.0,1546.6 1339.0,1546.7 1346.0,1546.4 1353.1,1546.8 1360.1,1546.6 1367.1,1546.5 1374.2,1546.6 1381.2,1546.6 1388.2,1546.8 1395.2,1546.7 1402.3,1546.3 1409.3,1546.6 1416.3,1546.8 1423.4,1546.5 1430.4,1546.3 1437.4,1546.7 1444.4,1546.7 1451.5,1546.6 1458.5,1546.6 1465.5,1546.8 1472.6,1546.6 1479.6,1546.6 1486.6,1546.8 1493.6,1546.5 1500.7,1546.6 1507.7,1546.6 1514.7,1546.5 1521.8,1546.6 1528.8,1546.9 1535.8,1546.2 1542.9,1546.9 1549.9,1546.7 1556.9,1546.7 1563.9,1546.7 1571.0,1546.5 1578.0,1546.4 1585.0,1546.7 1592.1,1546.2 1599.1,1546.7 1606.1,1546.5 1613.1,1546.4 1620.2,1546.5 1627.2,1546.5 1634.2,1546.6 1641.3,1546.6 1648.3,1546.8 1655.3,1540.5 1662.3,1546.3 1669.4,1546.4 1676.4,1546.7 1683.4,1546.4 1690.5,1546.5 1697.5,1546.5 1704.5,1546.5 1711.6,1546.5 1718.6,1546.5 1725.6,1546.6 1732.6,1546.8 1739.7,1546.6 1746.7,1546.6 1753.7,1546.4 1760.8,1546.6 1767.8,1546.8 1774.8,1546.6 1781.8,1546.5 1788.9,1546.4 1795.9,1546.7 1802.9,1546.7 1810.0,1546.7 1817.0,1546.6 1824.0,1546.6 1831.0,1546.5 1838.1,1546.7 1845.1,1546.7 1852.1,1546.5 1859.2,1546.3 1866.2,1546.5 1873.2,1546.5 1880.3,1546.8 1887.3,1546.4 1894.3,1546.8 1901.3,1546.5 1908.4,1546.7 1915.4,1546.5 1922.4,1546.5 1929.5,1546.6 1936.5,1546.7 1943.5,1546.7 1950.5,1546.5 1957.6,1546.7 1964.6,1546.7" fill="none" stroke="#7FC6D6" stroke-width="1.6" opacity="1"/><polyline points="565.8,1548.2 572.8,1548.4 579.9,1552.2 586.9,1548.2 593.9,1548.4 600.9,1548.2 608.0,1548.1 615.0,1548.1 622.0,1548.0 629.1,1548.2 636.1,1548.2 643.1,1548.0 650.1,1548.3 657.2,1548.1 664.2,1548.1 671.2,1547.9 678.3,1547.9 685.3,1548.3 692.3,1548.3 699.4,1548.3 706.4,1548.1 713.4,1548.1 720.4,1548.1 727.5,1548.4 734.5,1548.1 741.5,1547.9 748.6,1548.2 755.6,1548.1 762.6,1548.4 769.6,1548.1 776.7,1548.3 783.7,1548.0 790.7,1548.5 797.8,1547.8 804.8,1548.1 811.8,1548.2 818.8,1548.2 825.9,1548.2 832.9,1548.2 839.9,1548.1 847.0,1547.7 854.0,1548.2 861.0,1548.2 868.1,1548.2 875.1,1548.1 882.1,1548.1 889.1,1548.1 896.2,1548.5 903.2,1548.0 910.2,1548.2 917.3,1548.0 924.3,1548.1 931.3,1548.0 938.3,1548.3 945.4,1548.4 952.4,1555.1 959.4,1548.1 966.5,1548.3 973.5,1548.1 980.5,1548.1 987.5,1548.1 994.6,1548.1 1001.6,1548.2 1008.6,1548.2 1015.7,1548.1 1022.7,1548.4 1029.7,1548.2 1036.8,1547.9 1043.8,1548.4 1050.8,1548.4 1057.8,1548.3 1064.9,1548.3 1071.9,1548.1 1078.9,1548.4 1086.0,1547.9 1093.0,1548.0 1100.0,1548.3 1107.0,1547.8 1114.1,1548.2 1121.1,1548.4 1128.1,1548.6 1135.2,1548.3 1142.2,1547.9 1149.2,1548.1 1156.2,1548.4 1163.3,1548.3 1170.3,1547.9 1177.3,1548.2 1184.4,1548.2 1191.4,1548.4 1198.4,1548.3 1205.5,1548.4 1212.5,1548.0 1219.5,1548.2 1226.5,1548.4 1233.6,1548.2 1240.6,1548.4 1247.6,1548.2 1254.7,1548.5 1261.7,1547.9 1268.7,1548.5 1275.7,1548.3 1282.8,1548.3 1289.8,1548.1 1296.8,1548.3 1303.9,1551.5 1310.9,1548.3 1317.9,1548.2 1324.9,1547.9 1332.0,1548.1 1339.0,1548.4 1346.0,1548.4 1353.1,1548.2 1360.1,1548.5 1367.1,1548.0 1374.2,1548.2 1381.2,1548.2 1388.2,1548.4 1395.2,1548.1 1402.3,1548.4 1409.3,1548.2 1416.3,1548.2 1423.4,1548.2 1430.4,1548.0 1437.4,1548.3 1444.4,1548.3 1451.5,1548.2 1458.5,1548.6 1465.5,1548.4 1472.6,1548.2 1479.6,1548.4 1486.6,1548.2 1493.6,1548.2 1500.7,1548.2 1507.7,1548.0 1514.7,1548.0 1521.8,1548.2 1528.8,1548.2 1535.8,1548.0 1542.9,1548.1 1549.9,1548.3 1556.9,1548.2 1563.9,1548.3 1571.0,1548.1 1578.0,1548.2 1585.0,1547.9 1592.1,1548.3 1599.1,1548.3 1606.1,1548.2 1613.1,1548.0 1620.2,1548.0 1627.2,1548.2 1634.2,1548.3 1641.3,1548.1 1648.3,1548.3 1655.3,1548.3 1662.3,1548.2 1669.4,1548.3 1676.4,1548.1 1683.4,1548.2 1690.5,1548.0 1697.5,1548.1 1704.5,1548.7 1711.6,1548.5 1718.6,1548.1 1725.6,1547.9 1732.6,1548.4 1739.7,1548.1 1746.7,1548.2 1753.7,1548.5 1760.8,1548.0 1767.8,1548.3 1774.8,1548.2 1781.8,1548.1 1788.9,1548.3 1795.9,1548.4 1802.9,1548.4 1810.0,1548.1 1817.0,1548.2 1824.0,1548.1 1831.0,1548.3 1838.1,1548.1 1845.1,1548.3 1852.1,1548.0 1859.2,1548.3 1866.2,1548.1 1873.2,1548.3 1880.3,1548.4 1887.3,1548.3 1894.3,1548.1 1901.3,1548.3 1908.4,1548.4 1915.4,1548.7 1922.4,1548.3 1929.5,1548.3 1936.5,1547.9 1943.5,1548.4 1950.5,1548.1 1957.6,1548.2 1964.6,1548.3" fill="none" stroke="#D9D2F2" stroke-width="2" opacity="1"/><polyline points="565.8,1549.8 572.8,1549.9 579.9,1549.9 586.9,1549.9 593.9,1549.8 600.9,1549.7 608.0,1549.8 615.0,1549.9 622.0,1549.9 629.1,1549.6 636.1,1549.7 643.1,1550.0 650.1,1549.8 657.2,1549.8 664.2,1549.7 671.2,1549.8 678.3,1550.1 685.3,1549.7 692.3,1550.0 699.4,1549.7 706.4,1549.6 713.4,1549.8 720.4,1549.9 727.5,1549.9 734.5,1550.0 741.5,1549.9 748.6,1549.7 755.6,1549.8 762.6,1549.7 769.6,1549.9 776.7,1549.6 783.7,1550.0 790.7,1549.9 797.8,1549.8 804.8,1549.8 811.8,1549.6 818.8,1549.9 825.9,1549.9 832.9,1550.1 839.9,1549.6 847.0,1549.9 854.0,1549.8 861.0,1549.5 868.1,1550.0 875.1,1549.8 882.1,1549.9 889.1,1549.5 896.2,1545.2 903.2,1549.6 910.2,1550.0 917.3,1549.7 924.3,1549.8 931.3,1550.0 938.3,1549.9 945.4,1549.7 952.4,1549.7 959.4,1550.1 966.5,1549.9 973.5,1549.7 980.5,1549.7 987.5,1549.7 994.6,1549.8 1001.6,1549.7 1008.6,1549.8 1015.7,1549.8 1022.7,1550.0 1029.7,1549.8 1036.8,1549.9 1043.8,1549.9 1050.8,1549.9 1057.8,1550.0 1064.9,1549.6 1071.9,1549.5 1078.9,1549.9 1086.0,1549.9 1093.0,1549.9 1100.0,1549.7 1107.0,1549.9 1114.1,1549.8 1121.1,1549.7 1128.1,1549.9 1135.2,1549.7 1142.2,1549.6 1149.2,1549.9 1156.2,1550.0 1163.3,1549.6 1170.3,1549.6 1177.3,1549.8 1184.4,1549.8 1191.4,1549.9 1198.4,1549.6 1205.5,1550.0 1212.5,1550.1 1219.5,1549.9 1226.5,1549.9 1233.6,1549.6 1240.6,1549.7 1247.6,1549.8 1254.7,1549.7 1261.7,1549.8 1268.7,1550.1 1275.7,1549.9 1282.8,1549.8 1289.8,1549.8 1296.8,1549.9 1303.9,1550.2 1310.9,1549.9 1317.9,1549.7 1324.9,1549.8 1332.0,1549.7 1339.0,1549.8 1346.0,1549.6 1353.1,1549.6 1360.1,1549.5 1367.1,1549.7 1374.2,1549.7 1381.2,1549.7 1388.2,1550.1 1395.2,1549.9 1402.3,1549.8 1409.3,1550.0 1416.3,1550.0 1423.4,1549.6 1430.4,1549.8 1437.4,1544.5 1444.4,1550.1 1451.5,1549.9 1458.5,1549.7 1465.5,1550.0 1472.6,1549.6 1479.6,1550.0 1486.6,1550.0 1493.6,1549.8 1500.7,1549.8 1507.7,1549.9 1514.7,1550.1 1521.8,1549.7 1528.8,1550.0 1535.8,1549.9 1542.9,1549.8 1549.9,1549.8 1556.9,1549.8 1563.9,1549.9 1571.0,1549.6 1578.0,1549.9 1585.0,1550.0 1592.1,1550.0 1599.1,1549.7 1606.1,1549.7 1613.1,1549.6 1620.2,1549.9 1627.2,1549.7 1634.2,1549.5 1641.3,1549.6 1648.3,1549.8 1655.3,1549.9 1662.3,1549.9 1669.4,1549.7 1676.4,1543.2 1683.4,1550.0 1690.5,1549.5 1697.5,1549.7 1704.5,1550.0 1711.6,1549.8 1718.6,1549.7 1725.6,1549.7 1732.6,1549.8 1739.7,1549.6 1746.7,1549.8 1753.7,1549.8 1760.8,1549.8 1767.8,1549.8 1774.8,1549.6 1781.8,1546.0 1788.9,1549.8 1795.9,1549.8 1802.9,1550.2 1810.0,1550.0 1817.0,1549.7 1824.0,1549.6 1831.0,1550.0 1838.1,1549.6 1845.1,1549.8 1852.1,1549.6 1859.2,1549.9 1866.2,1549.7 1873.2,1549.9 1880.3,1549.7 1887.3,1549.9 1894.3,1549.7 1901.3,1546.8 1908.4,1549.9 1915.4,1549.8 1922.4,1543.2 1929.5,1549.6 1936.5,1549.9 1943.5,1549.8 1950.5,1549.7 1957.6,1549.9 1964.6,1550.0" fill="none" stroke="#8A2A1A" stroke-width="1.6" opacity="1"/><polyline points="565.8,1550.6 570.5,1550.7 575.2,1551.0 579.8,1550.3 584.5,1551.4 589.2,1550.8 593.9,1550.8 598.5,1551.0 603.2,1551.2 607.9,1551.0 612.6,1551.0 617.3,1550.8 621.9,1547.0 626.6,1550.9 631.3,1551.6 636.0,1550.9 640.7,1550.6 645.3,1550.9 650.0,1550.7 654.7,1550.3 659.4,1550.9 664.0,1551.1 668.7,1554.1 673.4,1551.4 678.1,1550.8 682.8,1551.4 687.4,1551.1 692.1,1551.2 696.8,1550.8 701.5,1551.2 706.1,1550.6 710.8,1551.4 715.5,1550.5 720.2,1550.5 724.9,1551.1 729.5,1550.7 734.2,1551.0 738.9,1551.3 743.6,1550.8 748.3,1551.2 752.9,1551.1 757.6,1551.3 762.3,1550.9 767.0,1551.5 771.6,1550.8 776.3,1551.5 781.0,1550.9 785.7,1551.3 790.4,1550.5 795.0,1550.6 799.7,1550.9 804.4,1551.2 809.1,1551.4 813.7,1550.9 818.4,1551.2 823.1,1551.8 827.8,1551.2 832.5,1550.8 837.1,1551.3 841.8,1551.1 846.5,1550.9 851.2,1550.9 855.9,1550.9 860.5,1550.8 865.2,1551.1 869.9,1550.9 874.6,1551.3 879.2,1551.6 883.9,1550.6 888.6,1551.0 893.3,1551.5 898.0,1551.2 902.6,1551.3 907.3,1551.1 912.0,1551.1 916.7,1550.8 921.3,1551.3 926.0,1550.9 930.7,1550.5 935.4,1551.1 940.1,1550.9 944.7,1551.3 949.4,1551.0 954.1,1551.3 958.8,1551.2 963.5,1550.9 968.1,1550.8 972.8,1551.2 977.5,1551.1 982.2,1551.3 986.8,1551.4 991.5,1551.2 996.2,1551.3 1000.9,1550.9 1005.6,1550.4 1010.2,1550.8 1014.9,1551.1 1019.6,1551.4 1024.3,1551.0 1028.9,1550.8 1033.6,1551.2 1038.3,1551.0 1043.0,1551.3 1047.7,1550.9 1052.3,1550.7 1057.0,1551.4 1061.7,1550.9 1066.4,1550.7 1071.1,1551.4 1075.7,1550.5 1080.4,1551.4 1085.1,1550.9 1089.8,1550.3 1094.4,1550.9 1099.1,1551.2 1103.8,1551.2 1108.5,1550.8 1113.2,1551.0 1117.8,1551.1 1122.5,1551.2 1127.2,1550.8 1131.9,1550.7 1136.5,1550.7 1141.2,1550.9 1145.9,1550.3 1150.6,1551.4 1155.3,1550.9 1159.9,1550.7 1164.6,1550.6 1169.3,1550.7 1174.0,1551.7 1178.7,1551.1 1183.3,1551.0 1188.0,1551.1 1192.7,1551.0 1197.4,1551.1 1202.0,1550.6 1206.7,1551.0 1211.4,1551.3 1216.1,1551.1 1220.8,1550.9 1225.4,1551.3 1230.1,1551.4 1234.8,1546.3 1239.5,1550.7 1244.1,1550.9 1248.8,1550.7 1253.5,1551.1 1258.2,1551.2 1262.9,1551.1 1267.5,1556.7 1272.2,1550.8 1276.9,1551.4 1281.6,1550.9 1286.3,1550.6 1290.9,1551.1 1295.6,1550.5 1300.3,1556.4 1305.0,1550.8 1309.6,1550.7 1314.3,1550.8 1319.0,1550.4 1323.7,1550.7 1328.4,1551.2 1333.0,1551.0 1337.7,1551.1 1342.4,1550.8 1347.1,1551.3 1351.7,1550.8 1356.4,1551.0 1361.1,1551.1 1365.8,1550.9 1370.5,1550.9 1375.1,1550.7 1379.8,1551.0 1384.5,1550.9 1389.2,1550.7 1393.9,1550.6 1398.5,1551.2 1403.2,1546.9 1407.9,1550.7 1412.6,1550.8 1417.2,1551.4 1421.9,1551.2 1426.6,1550.3 1431.3,1551.0 1436.0,1551.0 1440.6,1551.4 1445.3,1550.8 1450.0,1551.0 1454.7,1551.0 1459.3,1550.8 1464.0,1551.4 1468.7,1551.2 1473.4,1550.8 1478.1,1550.9 1482.7,1550.8 1487.4,1551.5 1492.1,1551.2 1496.8,1551.1 1501.5,1551.0 1506.1,1551.1 1510.8,1551.1 1515.5,1550.9 1520.2,1551.0 1524.8,1551.3 1529.5,1550.9 1534.2,1551.1 1538.9,1551.1 1543.6,1550.7 1548.2,1550.7 1552.9,1550.8 1557.6,1551.1 1562.3,1551.0 1566.9,1551.3 1571.6,1555.0 1576.3,1551.6 1581.0,1550.7 1585.7,1551.2 1590.3,1551.4 1595.0,1551.2 1599.7,1550.8 1604.4,1551.2 1609.1,1550.5 1613.7,1551.2 1618.4,1550.8 1623.1,1551.1 1627.8,1551.0 1632.4,1551.3 1637.1,1551.4 1641.8,1551.1 1646.5,1552.0 1651.2,1550.6 1655.8,1550.8 1660.5,1550.9 1665.2,1550.6 1669.9,1551.9 1674.5,1551.4 1679.2,1551.1 1683.9,1551.2 1688.6,1551.0 1693.3,1550.8 1697.9,1550.9 1702.6,1550.8 1707.3,1551.2 1712.0,1550.7 1716.7,1551.0 1721.3,1551.5 1726.0,1550.8 1730.7,1550.6 1735.4,1551.5 1740.0,1551.2 1744.7,1551.5 1749.4,1550.5 1754.1,1550.9 1758.8,1550.9 1763.4,1551.0 1768.1,1550.9 1772.8,1551.4 1777.5,1551.2 1782.1,1550.8 1786.8,1551.2 1791.5,1551.0 1796.2,1551.0 1800.9,1551.9 1805.5,1550.2 1810.2,1550.5 1814.9,1551.1 1819.6,1551.3 1824.3,1551.3 1828.9,1551.2 1833.6,1550.3 1838.3,1550.8 1843.0,1551.0 1847.6,1551.5 1852.3,1550.6 1857.0,1556.2 1861.7,1551.4 1866.4,1550.7 1871.0,1550.9 1875.7,1551.5 1880.4,1550.9 1885.1,1551.1 1889.7,1550.7 1894.4,1551.1 1899.1,1551.2 1903.8,1551.5 1908.5,1551.2 1913.1,1551.2 1917.8,1551.0 1922.5,1551.4 1927.2,1550.9 1931.9,1544.9 1936.5,1551.2 1941.2,1550.8 1945.9,1551.0 1950.6,1551.5 1955.2,1550.8 1959.9,1551.3 1964.6,1550.8" fill="none" stroke="#3A72E0" stroke-width="1.6" opacity="1"/><polygon points="582.1,1547.6 586.3,1470.7 590.5,1547.6" fill="#F2C4B4" opacity="0.75"/><polyline points="583.8,1547.6 586.3,1520.7 588.8,1547.6" fill="none" stroke="#B48CC0" stroke-width="1.5"/><polygon points="583.4,1547.6 586.3,1611.4 589.2,1547.6" fill="#705DA0" opacity="0.55"/><polyline points="584.2,1549.6 586.3,1611.4 588.4,1549.6" fill="none" stroke="#705DA0" stroke-width="1.8"/><polygon points="652.5,1547.6 656.7,1463.0 660.9,1547.6" fill="#F2C4B4" opacity="0.75"/><polyline points="654.2,1547.6 656.7,1518.0 659.2,1547.6" fill="none" stroke="#B48CC0" stroke-width="1.5"/><polygon points="653.8,1547.6 656.7,1613.3 659.6,1547.6" fill="#705DA0" opacity="0.55"/><polyline points="654.6,1549.6 656.7,1613.3 658.8,1549.6" fill="none" stroke="#705DA0" stroke-width="1.8"/><polygon points="665.2,1547.6 669.4,1474.0 673.6,1547.6" fill="#F2C4B4" opacity="0.75"/><polyline points="666.9,1547.6 669.4,1521.8 671.9,1547.6" fill="none" stroke="#B48CC0" stroke-width="1.5"/><polygon points="666.5,1547.6 669.4,1613.0 672.3,1547.6" fill="#705DA0" opacity="0.55"/><polyline points="667.3,1549.6 669.4,1613.0 671.5,1549.6" fill="none" stroke="#705DA0" stroke-width="1.8"/><polygon points="1087.4,1547.6 1091.6,1454.7 1095.8,1547.6" fill="#F2C4B4" opacity="0.75"/><polyline points="1089.1,1547.6 1091.6,1515.1 1094.1,1547.6" fill="none" stroke="#B48CC0" stroke-width="1.5"/><polygon points="1088.7,1547.6 1091.6,1624.0 1094.5,1547.6" fill="#705DA0" opacity="0.55"/><polyline points="1089.5,1549.6 1091.6,1624.0 1093.7,1549.6" fill="none" stroke="#705DA0" stroke-width="1.8"/><polyline points="1091.5,1548 1092.8,1632 1094,1548" fill="none" stroke="#E8B230" stroke-width="1.6"/><polygon points="1168,1547 1173.5,1508 1178,1547" fill="#F2C4B4" opacity="0.75"/><polyline points="1169.5,1547 1170.8,1488 1172,1547" fill="none" stroke="#E0A800" stroke-width="1.6"/><polyline points="1168.5,1547 1171,1516 1173.5,1547" fill="none" stroke="#705DA0" stroke-width="1.8"/><polygon points="1167,1548 1171,1611.4 1175,1548" fill="#705DA0" opacity="0.6"/><polyline points="1169,1550 1171,1611.4 1173,1550" fill="none" stroke="#705DA0" stroke-width="1.8"/><polygon points="1935.5,1547.6 1939.7,1475.8 1943.9,1547.6" fill="#F2C4B4" opacity="0.75"/><polyline points="1937.2,1547.6 1939.7,1522.5 1942.2,1547.6" fill="none" stroke="#B48CC0" stroke-width="1.5"/><polygon points="1936.8,1547.6 1939.7,1611.4 1942.6,1547.6" fill="#705DA0" opacity="0.55"/><polyline points="1937.6,1549.6 1939.7,1611.4 1941.8,1549.6" fill="none" stroke="#705DA0" stroke-width="1.8"/><polyline points="1944,1546 1947,1530 1950,1560 1953,1522 1955,1570 1957,1535 1959,1552 1961,1540 1964,1548" fill="none" stroke="#5BA3D9" stroke-width="1.6"/><polyline points="1946,1546 1949,1538 1952,1556 1955,1540 1958,1556 1962,1538 1964,1546" fill="none" stroke="#C4162A" stroke-width="1.4"/></svg>
<div class="t" style="left:459.0px;top:1472.9px;font-size:24px;color:#24292E;transform:scaleX(1.1187);transform-origin:0 0;">25 Mb/s</div>
<div class="t" style="left:492.0px;top:1535.6px;font-size:24px;color:#24292E;transform:scaleX(1.2013);transform-origin:0 0;">0 b/s</div>
<div class="t" style="left:450.5px;top:1598.3px;font-size:24px;color:#24292E;transform:scaleX(1.1140);transform-origin:0 0;">-25 Mb/s</div>
<div class="t" style="left:566.2px;top:1666.7px;font-size:24px;color:#24292E;transform:scaleX(1.0324);transform-origin:0 0;">16:00</div>
<div class="t" style="left:682.7px;top:1666.7px;font-size:24px;color:#24292E;transform:scaleX(1.0324);transform-origin:0 0;">18:00</div>
<div class="t" style="left:799.2px;top:1666.7px;font-size:24px;color:#24292E;transform:scaleX(1.0324);transform-origin:0 0;">20:00</div>
<div class="t" style="left:915.7px;top:1666.7px;font-size:24px;color:#24292E;transform:scaleX(1.0324);transform-origin:0 0;">22:00</div>
<div class="t" style="left:1032.2px;top:1666.7px;font-size:24px;color:#24292E;transform:scaleX(1.0324);transform-origin:0 0;">00:00</div>
<div class="t" style="left:1148.7px;top:1666.7px;font-size:24px;color:#24292E;transform:scaleX(1.0324);transform-origin:0 0;">02:00</div>
<div class="t" style="left:1265.2px;top:1666.7px;font-size:24px;color:#24292E;transform:scaleX(1.0324);transform-origin:0 0;">04:00</div>
<div class="t" style="left:1381.7px;top:1666.7px;font-size:24px;color:#24292E;transform:scaleX(1.0324);transform-origin:0 0;">06:00</div>
<div class="t" style="left:1498.2px;top:1666.7px;font-size:24px;color:#24292E;transform:scaleX(1.0324);transform-origin:0 0;">08:00</div>
<div class="t" style="left:1614.7px;top:1666.7px;font-size:24px;color:#24292E;transform:scaleX(1.0324);transform-origin:0 0;">10:00</div>
<div class="t" style="left:1731.2px;top:1666.7px;font-size:24px;color:#24292E;transform:scaleX(1.0324);transform-origin:0 0;">12:00</div>
<div class="t" style="left:1847.7px;top:1666.7px;font-size:24px;color:#24292E;transform:scaleX(1.0324);transform-origin:0 0;">14:00</div>
<div class="a" style="left:452.0px;top:1716.9px;width:28.0px;height:7.4px;background:#3FA037;border-radius:4px"></div>
<div class="t" style="left:496.7px;top:1708.4px;font-size:24px;color:#24292E;transform:scaleX(1.0831);transform-origin:0 0;">Rx eni027ae0c00f8</div>
<div class="a" style="left:743.0px;top:1716.9px;width:28.0px;height:7.4px;background:#D9A41F;border-radius:4px"></div>
<div class="t" style="left:786.5px;top:1708.4px;font-size:24px;color:#24292E;transform:scaleX(1.0936);transform-origin:0 0;">Rx eni04e76c3cbd4</div>
<div class="a" style="left:1040.4px;top:1716.9px;width:28.0px;height:7.4px;background:#4D86F0;border-radius:4px"></div>
<div class="t" style="left:1083.9px;top:1708.4px;font-size:24px;color:#24292E;transform:scaleX(1.0953);transform-origin:0 0;">Rx eni080f559883a</div>
<div class="a" style="left:1334.6px;top:1716.9px;width:28.0px;height:7.4px;background:#F2541B;border-radius:4px"></div>
<div class="t" style="left:1377.5px;top:1708.4px;font-size:24px;color:#24292E;transform:scaleX(1.0706);transform-origin:0 0;">Rx eni0a474286144</div>
<div class="a" style="left:1627.6px;top:1716.9px;width:28.0px;height:7.4px;background:#E0163C;border-radius:4px"></div>
<div class="t" style="left:1672.3px;top:1708.4px;font-size:24px;color:#24292E;transform:scaleX(1.0348);transform-origin:0 0;">Rx eni1b2b1dfb7dc</div>
<div class="a" style="left:452.0px;top:1763.5px;width:28.0px;height:7.4px;background:#2563D9;border-radius:4px"></div>
<div class="t" style="left:496.7px;top:1755.0px;font-size:24px;color:#24292E;transform:scaleX(1.0700);transform-origin:0 0;">Rx eni1e8c09bc858</div>
<div class="a" style="left:745.0px;top:1763.5px;width:28.0px;height:7.4px;background:#9F45D8;border-radius:4px"></div>
<div class="t" style="left:789.0px;top:1755.0px;font-size:24px;color:#24292E;transform:scaleX(1.0735);transform-origin:0 0;">Rx eni1fa93c52288</div>
<div class="a" style="left:1030.8px;top:1763.5px;width:28.0px;height:7.4px;background:#6C5BA8;border-radius:4px"></div>
<div class="t" style="left:1075.6px;top:1755.0px;font-size:24px;color:#24292E;transform:scaleX(1.0520);transform-origin:0 0;">Rx eni292198a47da</div>
<div class="a" style="left:1321.8px;top:1763.5px;width:28.0px;height:7.4px;background:#1E6E12;border-radius:4px"></div>
<div class="t" style="left:1366.6px;top:1755.0px;font-size:24px;color:#24292E;transform:scaleX(1.1019);transform-origin:0 0;">Rx eni29abf9f4296</div>
<div class="a" style="left:1607.7px;top:1763.5px;width:28.0px;height:7.4px;background:#E9C514;border-radius:4px"></div>
<div class="t" style="left:1652.5px;top:1755.0px;font-size:24px;color:#24292E;transform:scaleX(1.1025);transform-origin:0 0;">Rx eni2fb393c2be4</div>
<div class="a" style="left:452.0px;top:1810.2px;width:28.0px;height:7.4px;background:#3F74B6;border-radius:4px"></div>
<div class="t" style="left:496.7px;top:1801.7px;font-size:24px;color:#24292E;transform:scaleX(1.0951);transform-origin:0 0;">Rx eni32fc78c65ed</div>
<div class="a" style="left:741.7px;top:1810.2px;width:28.0px;height:7.4px;background:#BF5419;border-radius:4px"></div>
<div class="t" style="left:785.2px;top:1801.7px;font-size:24px;color:#24292E;transform:scaleX(1.0854);transform-origin:0 0;">Rx eni34c912cf5b9</div>
<div class="a" style="left:1029.5px;top:1810.2px;width:28.0px;height:7.4px;background:#7A0F0A;border-radius:4px"></div>
<div class="t" style="left:1073.0px;top:1801.7px;font-size:24px;color:#24292E;transform:scaleX(1.1695);transform-origin:0 0;">Rx eni36fbfb5f3f5</div>
<div class="a" style="left:1305.8px;top:1810.2px;width:28.0px;height:7.4px;background:#0A3570;border-radius:4px"></div>
<div class="t" style="left:1349.3px;top:1801.7px;font-size:24px;color:#24292E;transform:scaleX(1.0348);transform-origin:0 0;">Rx eni3ad6bf41c1a</div>
<div class="a" style="left:1584.0px;top:1810.2px;width:28.0px;height:7.4px;background:#651A55;border-radius:4px"></div>
<div class="t" style="left:1627.6px;top:1801.7px;font-size:24px;color:#24292E;transform:scaleX(1.0905);transform-origin:0 0;">Rx eni3e09fd453a6</div>
<svg class="a" style="left:0;top:0" width="3608" height="2154"><polygon points="2112.8,1531.5 2116.4,1531.5 2120.0,1531.5 2123.6,1531.5 2127.2,1531.5 2130.8,1531.5 2134.4,1531.5 2138.0,1531.5 2141.6,1530.0 2145.2,1531.5 2148.9,1531.5 2152.5,1531.5 2156.1,1531.5 2159.7,1531.5 2163.3,1531.5 2166.9,1531.5 2170.5,1531.5 2174.1,1531.5 2177.7,1531.5 2181.3,1531.5 2184.9,1531.5 2188.5,1531.5 2192.1,1531.5 2195.7,1531.5 2199.3,1531.5 2202.8,1531.0 2202.9,1530.9 2206.5,1527.4 2210.1,1524.6 2213.8,1529.8 2217.4,1531.2 2221.0,1531.2 2224.6,1531.2 2228.2,1531.2 2231.8,1531.2 2235.4,1531.2 2239.0,1531.2 2242.6,1531.2 2246.2,1531.2 2249.8,1531.2 2253.4,1531.2 2257.0,1531.2 2260.6,1531.2 2264.2,1531.2 2267.8,1531.2 2271.4,1531.2 2275.0,1531.2 2278.7,1531.2 2282.3,1531.2 2285.9,1531.2 2289.5,1531.2 2293.1,1531.2 2296.7,1531.2 2300.3,1531.2 2303.9,1531.2 2307.5,1531.2 2311.1,1531.2 2314.7,1531.2 2318.3,1531.2 2321.9,1531.2 2325.5,1531.2 2329.1,1531.2 2332.7,1531.2 2336.3,1531.2 2339.9,1531.2 2343.6,1531.2 2347.2,1531.2 2350.8,1531.2 2354.4,1531.2 2358.0,1531.2 2361.6,1531.2 2365.2,1531.2 2368.8,1531.2 2372.4,1531.2 2376.0,1531.2 2379.6,1531.2 2383.2,1531.2 2386.8,1531.2 2390.4,1531.2 2394.0,1531.2 2397.6,1531.2 2401.2,1531.2 2404.8,1531.2 2408.5,1531.2 2412.1,1531.2 2415.7,1531.2 2419.3,1531.2 2422.9,1531.2 2426.5,1531.2 2430.1,1531.2 2433.7,1531.2 2437.3,1531.2 2440.9,1531.2 2444.5,1531.2 2448.1,1531.2 2451.7,1531.2 2455.3,1531.2 2458.9,1531.2 2462.5,1531.2 2466.1,1531.2 2469.7,1531.2 2473.4,1531.2 2477.0,1531.2 2480.6,1531.2 2484.2,1531.2 2487.8,1531.2 2491.4,1531.2 2495.0,1531.2 2498.6,1531.2 2502.2,1531.2 2505.8,1531.2 2509.4,1531.2 2513.0,1531.2 2516.6,1531.2 2520.2,1531.2 2523.8,1531.2 2527.4,1531.2 2531.0,1531.2 2534.6,1531.2 2538.3,1531.2 2541.9,1531.2 2545.5,1531.2 2549.1,1531.2 2552.7,1531.2 2556.3,1531.2 2559.9,1531.2 2563.5,1531.2 2567.1,1531.2 2570.7,1531.2 2574.3,1531.2 2577.9,1531.2 2581.5,1531.2 2585.1,1531.2 2588.7,1531.2 2592.3,1531.2 2595.9,1531.2 2599.5,1531.2 2603.1,1531.2 2606.8,1531.2 2610.4,1531.2 2614.0,1531.2 2617.6,1531.2 2621.2,1531.2 2624.8,1531.2 2628.4,1531.2 2632.0,1531.2 2635.6,1531.2 2639.2,1531.2 2642.8,1531.2 2646.4,1531.2 2650.0,1531.2 2652.8,1531.2 2653.6,1530.4 2657.2,1526.8 2660.8,1523.2 2664.4,1519.6 2665.7,1518.3 2668.0,1518.3 2671.7,1518.3 2675.3,1518.3 2678.9,1518.3 2682.5,1518.3 2686.1,1518.3 2689.7,1518.3 2693.3,1518.3 2696.9,1518.3 2700.5,1518.3 2704.1,1518.3 2707.7,1518.3 2711.3,1518.3 2714.9,1518.3 2718.5,1518.3 2722.1,1518.3 2725.7,1518.3 2729.3,1518.3 2732.9,1518.3 2736.4,1518.3 2736.6,1518.8 2739.6,1528.6 2740.2,1528.6 2743.8,1528.6 2747.4,1528.6 2751.0,1528.6 2754.6,1528.6 2758.2,1528.6 2761.8,1528.6 2765.3,1527.3 2765.4,1527.3 2769.0,1527.3 2772.6,1527.3 2776.2,1527.3 2779.8,1527.3 2783.4,1527.3 2787.0,1527.3 2790.6,1527.3 2794.2,1527.3 2797.8,1527.3 2801.5,1527.3 2805.1,1527.3 2808.7,1527.3 2812.3,1527.3 2815.9,1527.3 2819.5,1527.3 2823.1,1527.3 2826.4,1528.6 2826.7,1528.6 2830.3,1528.6 2833.9,1528.6 2837.5,1528.6 2841.1,1528.6 2844.7,1528.6 2848.3,1528.6 2851.9,1528.6 2855.5,1528.6 2859.1,1528.6 2862.7,1528.6 2866.4,1528.6 2870.0,1528.6 2873.6,1528.6 2877.2,1528.6 2880.8,1528.6 2884.4,1528.6 2888.0,1528.6 2891.6,1528.6 2895.2,1528.6 2898.8,1528.6 2902.4,1528.6 2906.0,1528.6 2909.6,1528.6 2913.2,1528.6 2916.8,1528.6 2920.4,1528.6 2924.0,1528.6 2927.6,1528.6 2931.3,1528.6 2934.9,1528.6 2938.5,1528.6 2942.1,1528.6 2945.7,1528.6 2949.3,1528.6 2952.9,1528.6 2956.5,1528.6 2960.1,1528.6 2963.7,1528.6 2967.3,1528.6 2970.9,1528.6 2974.5,1528.6 2978.1,1528.6 2981.7,1528.6 2985.3,1528.6 2988.9,1528.6 2992.5,1528.6 2996.2,1528.6 2999.8,1528.6 3003.4,1528.6 3007.0,1528.6 3010.6,1528.6 3014.2,1528.6 3017.8,1528.6 3021.4,1528.6 3025.0,1528.6 3028.6,1528.6 3032.2,1528.6 3035.8,1528.6 3039.4,1528.6 3043.0,1528.6 3046.6,1528.6 3050.2,1528.6 3053.8,1528.6 3057.4,1528.6 3061.1,1528.6 3064.7,1528.6 3068.3,1528.6 3071.9,1528.6 3075.5,1528.6 3079.1,1528.6 3082.7,1528.6 3086.3,1528.6 3089.9,1528.6 3093.5,1528.6 3097.1,1528.6 3100.7,1528.6 3104.3,1528.6 3107.9,1528.6 3111.5,1528.6 3115.1,1528.6 3118.7,1528.6 3122.3,1528.6 3125.9,1528.6 3129.6,1528.6 3133.2,1528.6 3136.8,1528.6 3140.4,1528.6 3144.0,1528.6 3147.6,1528.6 3151.2,1528.6 3154.8,1528.6 3158.4,1528.6 3162.0,1528.6 3165.6,1528.6 3169.2,1528.6 3172.8,1528.6 3176.4,1528.6 3180.0,1528.6 3183.6,1528.6 3187.2,1528.6 3190.8,1528.6 3194.5,1528.6 3198.1,1528.6 3201.7,1528.6 3205.3,1528.6 3208.9,1528.6 3212.5,1528.6 3216.1,1528.6 3219.7,1528.6 3223.3,1528.6 3226.9,1528.6 3230.5,1528.6 3234.1,1528.6 3237.7,1528.6 3241.3,1528.6 3244.9,1528.6 3248.5,1528.6 3252.1,1528.6 3255.7,1528.6 3259.4,1528.6 3263.0,1528.6 3266.6,1528.6 3270.2,1528.6 3273.8,1528.6 3277.4,1528.6 3281.0,1528.6 3284.6,1528.6 3288.2,1528.6 3291.8,1528.6 3295.4,1528.6 3299.0,1528.6 3302.6,1528.6 3306.2,1528.6 3309.8,1528.6 3313.4,1528.6 3317.0,1528.6 3320.6,1528.6 3324.3,1528.6 3327.9,1528.6 3331.5,1528.6 3335.1,1528.6 3338.7,1528.6 3342.3,1528.6 3345.9,1528.6 3349.5,1528.6 3353.1,1528.6 3356.7,1528.6 3360.3,1528.6 3363.9,1528.6 3367.5,1528.6 3371.1,1528.6 3374.7,1528.6 3378.3,1528.6 3381.9,1528.6 3385.5,1528.6 3389.2,1528.6 3392.8,1528.6 3396.4,1528.6 3400.0,1528.6 3403.6,1528.6 3407.2,1528.6 3410.8,1528.6 3414.4,1528.6 3418.0,1528.6 3421.6,1528.6 3425.2,1528.6 3428.8,1528.6 3432.4,1528.6 3436.0,1528.6 3439.6,1528.6 3443.2,1528.6 3446.8,1528.6 3450.4,1528.6 3454.1,1528.6 3457.7,1528.6 3461.3,1528.6 3464.9,1528.6 3468.5,1528.6 3472.1,1528.6 3475.7,1528.6 3479.3,1528.6 3482.9,1528.6 3486.5,1528.6 3490.1,1528.6 3493.7,1528.6 3497.3,1528.6 3500.9,1528.6 3504.5,1528.6 3508.1,1528.6 3511.7,1528.6 3515.3,1528.6 3519.0,1528.5 3522.6,1527.9 3526.2,1527.1 3529.8,1527.5 3533.4,1528.3 3537.0,1528.6 3540.6,1528.6 3544.2,1528.6 3547.8,1528.6 3551.4,1528.6 3551.4,1649.5 2112.8,1649.5" fill="#B3D6A8"/><line x1="2112.8" y1="1649.5" x2="3551.4" y2="1649.5" stroke="rgba(36,41,46,0.12)" stroke-width="1.5"/><line x1="2112.8" y1="1543.8" x2="3551.4" y2="1543.8" stroke="rgba(36,41,46,0.12)" stroke-width="1.5"/><line x1="2112.8" y1="1438.0" x2="3551.4" y2="1438.0" stroke="rgba(36,41,46,0.12)" stroke-width="1.5"/><line x1="2145.0" y1="1438.0" x2="2145.0" y2="1657.0" stroke="rgba(36,41,46,0.12)" stroke-width="1.5"/><line x1="2264.9" y1="1438.0" x2="2264.9" y2="1657.0" stroke="rgba(36,41,46,0.12)" stroke-width="1.5"/><line x1="2384.8" y1="1438.0" x2="2384.8" y2="1657.0" stroke="rgba(36,41,46,0.12)" stroke-width="1.5"/><line x1="2504.7" y1="1438.0" x2="2504.7" y2="1657.0" stroke="rgba(36,41,46,0.12)" stroke-width="1.5"/><line x1="2624.6" y1="1438.0" x2="2624.6" y2="1657.0" stroke="rgba(36,41,46,0.12)" stroke-width="1.5"/><line x1="2744.5" y1="1438.0" x2="2744.5" y2="1657.0" stroke="rgba(36,41,46,0.12)" stroke-width="1.5"/><line x1="2864.4" y1="1438.0" x2="2864.4" y2="1657.0" stroke="rgba(36,41,46,0.12)" stroke-width="1.5"/><line x1="2984.3" y1="1438.0" x2="2984.3" y2="1657.0" stroke="rgba(36,41,46,0.12)" stroke-width="1.5"/><line x1="3104.2" y1="1438.0" x2="3104.2" y2="1657.0" stroke="rgba(36,41,46,0.12)" stroke-width="1.5"/><line x1="3224.1" y1="1438.0" x2="3224.1" y2="1657.0" stroke="rgba(36,41,46,0.12)" stroke-width="1.5"/><line x1="3344.0" y1="1438.0" x2="3344.0" y2="1657.0" stroke="rgba(36,41,46,0.12)" stroke-width="1.5"/><line x1="3463.9" y1="1438.0" x2="3463.9" y2="1657.0" stroke="rgba(36,41,46,0.12)" stroke-width="1.5"/><polyline points="2112.8,1531.5 2116.4,1531.5 2120.0,1531.5 2123.6,1531.5 2127.2,1531.5 2130.8,1531.5 2134.4,1531.5 2138.0,1531.5 2141.6,1530.0 2145.2,1531.5 2148.9,1531.5 2152.5,1531.5 2156.1,1531.5 2159.7,1531.5 2163.3,1531.5 2166.9,1531.5 2170.5,1531.5 2174.1,1531.5 2177.7,1531.5 2181.3,1531.5 2184.9,1531.5 2188.5,1531.5 2192.1,1531.5 2195.7,1531.5 2199.3,1531.5 2202.8,1531.0 2202.9,1530.9 2206.5,1527.4 2210.1,1524.6 2213.8,1529.8 2217.4,1531.2 2221.0,1531.2 2224.6,1531.2 2228.2,1531.2 2231.8,1531.2 2235.4,1531.2 2239.0,1531.2 2242.6,1531.2 2246.2,1531.2 2249.8,1531.2 2253.4,1531.2 2257.0,1531.2 2260.6,1531.2 2264.2,1531.2 2267.8,1531.2 2271.4,1531.2 2275.0,1531.2 2278.7,1531.2 2282.3,1531.2 2285.9,1531.2 2289.5,1531.2 2293.1,1531.2 2296.7,1531.2 2300.3,1531.2 2303.9,1531.2 2307.5,1531.2 2311.1,1531.2 2314.7,1531.2 2318.3,1531.2 2321.9,1531.2 2325.5,1531.2 2329.1,1531.2 2332.7,1531.2 2336.3,1531.2 2339.9,1531.2 2343.6,1531.2 2347.2,1531.2 2350.8,1531.2 2354.4,1531.2 2358.0,1531.2 2361.6,1531.2 2365.2,1531.2 2368.8,1531.2 2372.4,1531.2 2376.0,1531.2 2379.6,1531.2 2383.2,1531.2 2386.8,1531.2 2390.4,1531.2 2394.0,1531.2 2397.6,1531.2 2401.2,1531.2 2404.8,1531.2 2408.5,1531.2 2412.1,1531.2 2415.7,1531.2 2419.3,1531.2 2422.9,1531.2 2426.5,1531.2 2430.1,1531.2 2433.7,1531.2 2437.3,1531.2 2440.9,1531.2 2444.5,1531.2 2448.1,1531.2 2451.7,1531.2 2455.3,1531.2 2458.9,1531.2 2462.5,1531.2 2466.1,1531.2 2469.7,1531.2 2473.4,1531.2 2477.0,1531.2 2480.6,1531.2 2484.2,1531.2 2487.8,1531.2 2491.4,1531.2 2495.0,1531.2 2498.6,1531.2 2502.2,1531.2 2505.8,1531.2 2509.4,1531.2 2513.0,1531.2 2516.6,1531.2 2520.2,1531.2 2523.8,1531.2 2527.4,1531.2 2531.0,1531.2 2534.6,1531.2 2538.3,1531.2 2541.9,1531.2 2545.5,1531.2 2549.1,1531.2 2552.7,1531.2 2556.3,1531.2 2559.9,1531.2 2563.5,1531.2 2567.1,1531.2 2570.7,1531.2 2574.3,1531.2 2577.9,1531.2 2581.5,1531.2 2585.1,1531.2 2588.7,1531.2 2592.3,1531.2 2595.9,1531.2 2599.5,1531.2 2603.1,1531.2 2606.8,1531.2 2610.4,1531.2 2614.0,1531.2 2617.6,1531.2 2621.2,1531.2 2624.8,1531.2 2628.4,1531.2 2632.0,1531.2 2635.6,1531.2 2639.2,1531.2 2642.8,1531.2 2646.4,1531.2 2650.0,1531.2 2652.8,1531.2 2653.6,1530.4 2657.2,1526.8 2660.8,1523.2 2664.4,1519.6 2665.7,1518.3 2668.0,1518.3 2671.7,1518.3 2675.3,1518.3 2678.9,1518.3 2682.5,1518.3 2686.1,1518.3 2689.7,1518.3 2693.3,1518.3 2696.9,1518.3 2700.5,1518.3 2704.1,1518.3 2707.7,1518.3 2711.3,1518.3 2714.9,1518.3 2718.5,1518.3 2722.1,1518.3 2725.7,1518.3 2729.3,1518.3 2732.9,1518.3 2736.4,1518.3 2736.6,1518.8 2739.6,1528.6 2740.2,1528.6 2743.8,1528.6 2747.4,1528.6 2751.0,1528.6 2754.6,1528.6 2758.2,1528.6 2761.8,1528.6 2765.3,1527.3 2765.4,1527.3 2769.0,1527.3 2772.6,1527.3 2776.2,1527.3 2779.8,1527.3 2783.4,1527.3 2787.0,1527.3 2790.6,1527.3 2794.2,1527.3 2797.8,1527.3 2801.5,1527.3 2805.1,1527.3 2808.7,1527.3 2812.3,1527.3 2815.9,1527.3 2819.5,1527.3 2823.1,1527.3 2826.4,1528.6 2826.7,1528.6 2830.3,1528.6 2833.9,1528.6 2837.5,1528.6 2841.1,1528.6 2844.7,1528.6 2848.3,1528.6 2851.9,1528.6 2855.5,1528.6 2859.1,1528.6 2862.7,1528.6 2866.4,1528.6 2870.0,1528.6 2873.6,1528.6 2877.2,1528.6 2880.8,1528.6 2884.4,1528.6 2888.0,1528.6 2891.6,1528.6 2895.2,1528.6 2898.8,1528.6 2902.4,1528.6 2906.0,1528.6 2909.6,1528.6 2913.2,1528.6 2916.8,1528.6 2920.4,1528.6 2924.0,1528.6 2927.6,1528.6 2931.3,1528.6 2934.9,1528.6 2938.5,1528.6 2942.1,1528.6 2945.7,1528.6 2949.3,1528.6 2952.9,1528.6 2956.5,1528.6 2960.1,1528.6 2963.7,1528.6 2967.3,1528.6 2970.9,1528.6 2974.5,1528.6 2978.1,1528.6 2981.7,1528.6 2985.3,1528.6 2988.9,1528.6 2992.5,1528.6 2996.2,1528.6 2999.8,1528.6 3003.4,1528.6 3007.0,1528.6 3010.6,1528.6 3014.2,1528.6 3017.8,1528.6 3021.4,1528.6 3025.0,1528.6 3028.6,1528.6 3032.2,1528.6 3035.8,1528.6 3039.4,1528.6 3043.0,1528.6 3046.6,1528.6 3050.2,1528.6 3053.8,1528.6 3057.4,1528.6 3061.1,1528.6 3064.7,1528.6 3068.3,1528.6 3071.9,1528.6 3075.5,1528.6 3079.1,1528.6 3082.7,1528.6 3086.3,1528.6 3089.9,1528.6 3093.5,1528.6 3097.1,1528.6 3100.7,1528.6 3104.3,1528.6 3107.9,1528.6 3111.5,1528.6 3115.1,1528.6 3118.7,1528.6 3122.3,1528.6 3125.9,1528.6 3129.6,1528.6 3133.2,1528.6 3136.8,1528.6 3140.4,1528.6 3144.0,1528.6 3147.6,1528.6 3151.2,1528.6 3154.8,1528.6 3158.4,1528.6 3162.0,1528.6 3165.6,1528.6 3169.2,1528.6 3172.8,1528.6 3176.4,1528.6 3180.0,1528.6 3183.6,1528.6 3187.2,1528.6 3190.8,1528.6 3194.5,1528.6 3198.1,1528.6 3201.7,1528.6 3205.3,1528.6 3208.9,1528.6 3212.5,1528.6 3216.1,1528.6 3219.7,1528.6 3223.3,1528.6 3226.9,1528.6 3230.5,1528.6 3234.1,1528.6 3237.7,1528.6 3241.3,1528.6 3244.9,1528.6 3248.5,1528.6 3252.1,1528.6 3255.7,1528.6 3259.4,1528.6 3263.0,1528.6 3266.6,1528.6 3270.2,1528.6 3273.8,1528.6 3277.4,1528.6 3281.0,1528.6 3284.6,1528.6 3288.2,1528.6 3291.8,1528.6 3295.4,1528.6 3299.0,1528.6 3302.6,1528.6 3306.2,1528.6 3309.8,1528.6 3313.4,1528.6 3317.0,1528.6 3320.6,1528.6 3324.3,1528.6 3327.9,1528.6 3331.5,1528.6 3335.1,1528.6 3338.7,1528.6 3342.3,1528.6 3345.9,1528.6 3349.5,1528.6 3353.1,1528.6 3356.7,1528.6 3360.3,1528.6 3363.9,1528.6 3367.5,1528.6 3371.1,1528.6 3374.7,1528.6 3378.3,1528.6 3381.9,1528.6 3385.5,1528.6 3389.2,1528.6 3392.8,1528.6 3396.4,1528.6 3400.0,1528.6 3403.6,1528.6 3407.2,1528.6 3410.8,1528.6 3414.4,1528.6 3418.0,1528.6 3421.6,1528.6 3425.2,1528.6 3428.8,1528.6 3432.4,1528.6 3436.0,1528.6 3439.6,1528.6 3443.2,1528.6 3446.8,1528.6 3450.4,1528.6 3454.1,1528.6 3457.7,1528.6 3461.3,1528.6 3464.9,1528.6 3468.5,1528.6 3472.1,1528.6 3475.7,1528.6 3479.3,1528.6 3482.9,1528.6 3486.5,1528.6 3490.1,1528.6 3493.7,1528.6 3497.3,1528.6 3500.9,1528.6 3504.5,1528.6 3508.1,1528.6 3511.7,1528.6 3515.3,1528.6 3519.0,1528.5 3522.6,1527.9 3526.2,1527.1 3529.8,1527.5 3533.4,1528.3 3537.0,1528.6 3540.6,1528.6 3544.2,1528.6 3547.8,1528.6 3551.4,1528.6" fill="none" stroke="#3F9537" stroke-width="2.4"/><line x1="2112.8" y1="1650.0" x2="3551.4" y2="1650.0" stroke="#0A2A66" stroke-width="2"/><circle cx="2132.1" cy="1650.0" r="4.8" fill="#2A4A52"/><circle cx="2204.1" cy="1649.5" r="4.5" fill="#F7D2DA"/><circle cx="3530.2" cy="1649.5" r="4.5" fill="#3FA9D6"/></svg>
<div class="t" style="left:2034.8px;top:1426.4px;font-size:24px;color:#24292E;transform:scaleX(1.0834);transform-origin:0 0;">100%</div>
<div class="t" style="left:2050.3px;top:1532.1px;font-size:24px;color:#24292E;transform:scaleX(1.0618);transform-origin:0 0;">50%</div>
<div class="t" style="left:2065.8px;top:1637.9px;font-size:24px;color:#24292E;transform:scaleX(1.0234);transform-origin:0 0;">0%</div>
<div class="t" style="left:2114.0px;top:1666.7px;font-size:24px;color:#24292E;transform:scaleX(1.0324);transform-origin:0 0;">16:00</div>
<div class="t" style="left:2233.9px;top:1666.7px;font-size:24px;color:#24292E;transform:scaleX(1.0324);transform-origin:0 0;">18:00</div>
<div class="t" style="left:2353.8px;top:1666.7px;font-size:24px;color:#24292E;transform:scaleX(1.0324);transform-origin:0 0;">20:00</div>
<div class="t" style="left:2473.7px;top:1666.7px;font-size:24px;color:#24292E;transform:scaleX(1.0324);transform-origin:0 0;">22:00</div>
<div class="t" style="left:2593.6px;top:1666.7px;font-size:24px;color:#24292E;transform:scaleX(1.0324);transform-origin:0 0;">00:00</div>
<div class="t" style="left:2713.5px;top:1666.7px;font-size:24px;color:#24292E;transform:scaleX(1.0324);transform-origin:0 0;">02:00</div>
<div class="t" style="left:2833.4px;top:1666.7px;font-size:24px;color:#24292E;transform:scaleX(1.0324);transform-origin:0 0;">04:00</div>
<div class="t" style="left:2953.3px;top:1666.7px;font-size:24px;color:#24292E;transform:scaleX(1.0324);transform-origin:0 0;">06:00</div>
<div class="t" style="left:3073.2px;top:1666.7px;font-size:24px;color:#24292E;transform:scaleX(1.0324);transform-origin:0 0;">08:00</div>
<div class="t" style="left:3193.1px;top:1666.7px;font-size:24px;color:#24292E;transform:scaleX(1.0324);transform-origin:0 0;">10:00</div>
<div class="t" style="left:3313.0px;top:1666.7px;font-size:24px;color:#24292E;transform:scaleX(1.0324);transform-origin:0 0;">12:00</div>
<div class="t" style="left:3432.9px;top:1666.7px;font-size:24px;color:#24292E;transform:scaleX(1.0324);transform-origin:0 0;">14:00</div>
<div class="a" style="left:2040.0px;top:1715.8px;width:28.0px;height:7.4px;background:#3F9537;border-radius:4px"></div>
<div class="a" style="left:2084px;top:1699.5px;width:1483.5px;height:40px;overflow:hidden"></div>
<div class="a" style="left:2040.0px;top:1763.4px;width:28.0px;height:7.4px;background:#DDAA1A;border-radius:4px"></div>
<div class="a" style="left:2084px;top:1747.1px;width:1483.5px;height:40px;overflow:hidden"></div>
<div class="a" style="left:2040.0px;top:1809.7px;width:28.0px;height:7.4px;background:#4C86E8;border-radius:4px"></div>
<div class="a" style="left:2084px;top:1793.4px;width:1483.5px;height:40px;overflow:hidden"></div>
<div class="t" style="left:2084.0px;top:1707.7px;font-size:24px;color:#24292E;">/</div>
<div class="a" style="left:2084px;top:1745.1px;width:1483.5px;height:44px;overflow:hidden"><div class="t" style="left:0;top:10.2px;font-size:24px;color:#24292E;transform:scaleX(1.0828);transform-origin:0 0">/run/containerd/io.containerd.grpc.v1.cri/sandboxes/01b751819770350fa2a546965a41785b768111832679fe0f8f197595d1fb9bca/rootfs</div></div>
<div class="a" style="left:2084px;top:1791.4px;width:1483.5px;height:44px;overflow:hidden"><div class="t" style="left:0;top:10.2px;font-size:24px;color:#24292E;transform:scaleX(1.0828);transform-origin:0 0">/run/containerd/io.containerd.grpc.v1.cri/sandboxes/02732d75312a860b5e492dd918d0e02662d1c059cb8291e44e5612a4d5e66c1d/rootfs</div></div>
<div class="a" style="left:3578px;top:1919.2px;width:40px;height:199.7px;border-radius:11px 0 0 11px;background:linear-gradient(165deg,#7EF4FA 0%,#8AA2FF 38%,#2F5CFF 55%,#3A6FB0 75%,#2A7F8A 100%)"></div>
<svg class="a" style="left:3582.0px;top:1960.0px;" width="30.0" height="115.0" viewBox="0 0 30 115"><text x="0" y="0" transform="translate(29,112) rotate(-90)" font-size="31" font-family="Liberation Sans" fill="#fff">Zadig AI</text></svg>
<svg class="a" style="left:3588.0px;top:2134.0px;" width="20.0" height="20.0" viewBox="0 0 20 20"><path d="M20,0 V20 H0 A20,20 0 0 0 20,0 Z" fill="#111"/></svg>
<svg class="a" style="left:0.0px;top:2140.0px;" width="14.0" height="14.0" viewBox="0 0 14 14"><polygon points="0,0 12,14 0,14" fill="#1A3BB5"/><line x1="0" y1="5" x2="6" y2="12" stroke="#AAB" stroke-width="1.5"/></svg></body></html>
